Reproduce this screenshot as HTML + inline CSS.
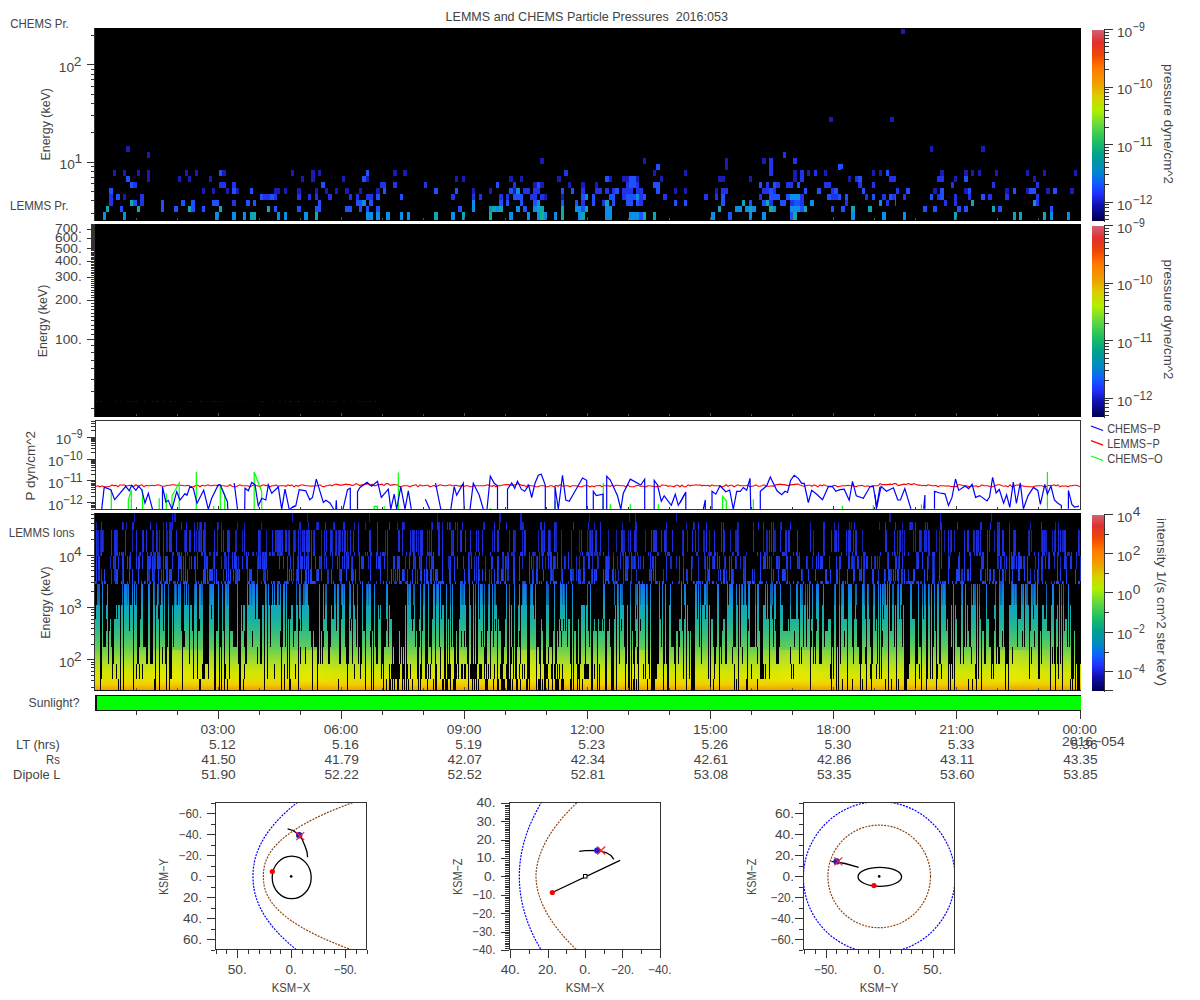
<!DOCTYPE html>
<html><head><meta charset="utf-8"><style>html,body{margin:0;padding:0;background:#fff;overflow:hidden}svg{display:block}</style></head>
<body><svg width="1200" height="1000" viewBox="0 0 1200 1000" font-family='"Liberation Sans", sans-serif'>
<rect x="0" y="0" width="1200" height="1000" fill="#fff" />
<text x="445.55" y="20.50" font-size="12.2" text-anchor="start" fill="#444" textLength="282.45" lengthAdjust="spacingAndGlyphs" >LEMMS and CHEMS Particle Pressures&#160; 2016:053</text>
<rect x="95" y="28" width="986" height="193" fill="#000" />
<line x1="94.5" y1="28" x2="94.5" y2="221" stroke="#333" stroke-width="1" shape-rendering="crispEdges"/>
<rect x="103" y="212" width="3" height="8" fill="#0a8ee6" shape-rendering="crispEdges"/>
<rect x="123" y="212" width="3" height="8" fill="#0a8ee6" shape-rendering="crispEdges"/>
<rect x="215" y="212" width="4" height="8" fill="#0a8ee6" shape-rendering="crispEdges"/>
<rect x="232" y="212" width="4" height="8" fill="#0a8ee6" shape-rendering="crispEdges"/>
<rect x="243" y="212" width="3" height="8" fill="#0a8ee6" shape-rendering="crispEdges"/>
<rect x="250" y="212" width="5" height="8" fill="#10a8b0" shape-rendering="crispEdges"/>
<rect x="106" y="206" width="3" height="6" fill="#10a8b0" shape-rendering="crispEdges"/>
<rect x="120" y="206" width="3" height="6" fill="#1e50ff" shape-rendering="crispEdges"/>
<rect x="137" y="206" width="3" height="6" fill="#10a8b0" shape-rendering="crispEdges"/>
<rect x="161" y="206" width="3" height="6" fill="#1e50ff" shape-rendering="crispEdges"/>
<rect x="174" y="206" width="4" height="6" fill="#1e50ff" shape-rendering="crispEdges"/>
<rect x="188" y="206" width="3" height="6" fill="#10a8b0" shape-rendering="crispEdges"/>
<rect x="191" y="206" width="4" height="6" fill="#1e50ff" shape-rendering="crispEdges"/>
<rect x="202" y="206" width="3" height="6" fill="#1e50ff" shape-rendering="crispEdges"/>
<rect x="219" y="206" width="3" height="6" fill="#10a8b0" shape-rendering="crispEdges"/>
<rect x="109" y="200" width="4" height="6" fill="#2232e6" shape-rendering="crispEdges"/>
<rect x="130" y="200" width="3" height="6" fill="#10a8b0" shape-rendering="crispEdges"/>
<rect x="133" y="200" width="4" height="6" fill="#1e50ff" shape-rendering="crispEdges"/>
<rect x="140" y="200" width="4" height="6" fill="#2232e6" shape-rendering="crispEdges"/>
<rect x="161" y="200" width="3" height="6" fill="#1e50ff" shape-rendering="crispEdges"/>
<rect x="181" y="200" width="4" height="6" fill="#1e50ff" shape-rendering="crispEdges"/>
<rect x="191" y="200" width="4" height="6" fill="#1e50ff" shape-rendering="crispEdges"/>
<rect x="212" y="200" width="7" height="6" fill="#1e50ff" shape-rendering="crispEdges"/>
<rect x="232" y="200" width="4" height="6" fill="#2232e6" shape-rendering="crispEdges"/>
<rect x="246" y="200" width="4" height="6" fill="#1e50ff" shape-rendering="crispEdges"/>
<rect x="253" y="200" width="2" height="6" fill="#1e50ff" shape-rendering="crispEdges"/>
<rect x="109" y="194" width="4" height="6" fill="#2232e6" shape-rendering="crispEdges"/>
<rect x="116" y="194" width="4" height="6" fill="#1e50ff" shape-rendering="crispEdges"/>
<rect x="123" y="194" width="3" height="6" fill="#1a1ab4" shape-rendering="crispEdges"/>
<rect x="140" y="194" width="4" height="6" fill="#2232e6" shape-rendering="crispEdges"/>
<rect x="109" y="188" width="4" height="6" fill="#1e50ff" shape-rendering="crispEdges"/>
<rect x="202" y="188" width="3" height="6" fill="#1a1ab4" shape-rendering="crispEdges"/>
<rect x="212" y="188" width="3" height="6" fill="#1a1ab4" shape-rendering="crispEdges"/>
<rect x="226" y="188" width="3" height="6" fill="#1a1ab4" shape-rendering="crispEdges"/>
<rect x="232" y="188" width="4" height="6" fill="#1e50ff" shape-rendering="crispEdges"/>
<rect x="236" y="188" width="3" height="6" fill="#1a1ab4" shape-rendering="crispEdges"/>
<rect x="250" y="188" width="3" height="6" fill="#1e50ff" shape-rendering="crispEdges"/>
<rect x="130" y="182" width="3" height="6" fill="#1e50ff" shape-rendering="crispEdges"/>
<rect x="133" y="182" width="4" height="6" fill="#2232e6" shape-rendering="crispEdges"/>
<rect x="219" y="182" width="7" height="6" fill="#2232e6" shape-rendering="crispEdges"/>
<rect x="232" y="182" width="4" height="6" fill="#2232e6" shape-rendering="crispEdges"/>
<rect x="126" y="176" width="4" height="6" fill="#1e50ff" shape-rendering="crispEdges"/>
<rect x="147" y="176" width="3" height="6" fill="#1a1ab4" shape-rendering="crispEdges"/>
<rect x="178" y="176" width="3" height="6" fill="#1a1ab4" shape-rendering="crispEdges"/>
<rect x="188" y="176" width="3" height="6" fill="#1a1ab4" shape-rendering="crispEdges"/>
<rect x="209" y="176" width="3" height="6" fill="#1a1ab4" shape-rendering="crispEdges"/>
<rect x="113" y="170" width="3" height="6" fill="#1a1ab4" shape-rendering="crispEdges"/>
<rect x="123" y="170" width="3" height="6" fill="#1a1ab4" shape-rendering="crispEdges"/>
<rect x="137" y="170" width="3" height="6" fill="#1a1ab4" shape-rendering="crispEdges"/>
<rect x="147" y="170" width="3" height="6" fill="#1a1ab4" shape-rendering="crispEdges"/>
<rect x="185" y="170" width="3" height="6" fill="#1a1ab4" shape-rendering="crispEdges"/>
<rect x="195" y="170" width="3" height="6" fill="#1a1ab4" shape-rendering="crispEdges"/>
<rect x="219" y="170" width="3" height="6" fill="#1e50ff" shape-rendering="crispEdges"/>
<rect x="222" y="170" width="4" height="6" fill="#1a1ab4" shape-rendering="crispEdges"/>
<rect x="147" y="152" width="3" height="6" fill="#1a1ab4" shape-rendering="crispEdges"/>
<rect x="126" y="146" width="4" height="6" fill="#1a1ab4" shape-rendering="crispEdges"/>
<rect x="255" y="212" width="1" height="8" fill="#10a8b0" shape-rendering="crispEdges"/>
<rect x="277" y="212" width="3" height="8" fill="#0a8ee6" shape-rendering="crispEdges"/>
<rect x="284" y="212" width="3" height="8" fill="#0a8ee6" shape-rendering="crispEdges"/>
<rect x="304" y="212" width="4" height="8" fill="#0a8ee6" shape-rendering="crispEdges"/>
<rect x="315" y="212" width="3" height="8" fill="#10a8b0" shape-rendering="crispEdges"/>
<rect x="366" y="212" width="7" height="8" fill="#0a8ee6" shape-rendering="crispEdges"/>
<rect x="376" y="212" width="4" height="8" fill="#0a8ee6" shape-rendering="crispEdges"/>
<rect x="386" y="212" width="4" height="8" fill="#0a8ee6" shape-rendering="crispEdges"/>
<rect x="400" y="212" width="3" height="8" fill="#0a8ee6" shape-rendering="crispEdges"/>
<rect x="407" y="212" width="3" height="8" fill="#0a8ee6" shape-rendering="crispEdges"/>
<rect x="267" y="206" width="3" height="6" fill="#10a8b0" shape-rendering="crispEdges"/>
<rect x="274" y="206" width="3" height="6" fill="#1e50ff" shape-rendering="crispEdges"/>
<rect x="297" y="206" width="4" height="6" fill="#1e50ff" shape-rendering="crispEdges"/>
<rect x="315" y="206" width="6" height="6" fill="#1e50ff" shape-rendering="crispEdges"/>
<rect x="345" y="206" width="7" height="6" fill="#1e50ff" shape-rendering="crispEdges"/>
<rect x="359" y="206" width="3" height="6" fill="#1e50ff" shape-rendering="crispEdges"/>
<rect x="366" y="206" width="3" height="6" fill="#1e50ff" shape-rendering="crispEdges"/>
<rect x="376" y="206" width="4" height="6" fill="#1e50ff" shape-rendering="crispEdges"/>
<rect x="255" y="200" width="1" height="6" fill="#1e50ff" shape-rendering="crispEdges"/>
<rect x="318" y="200" width="3" height="6" fill="#1e50ff" shape-rendering="crispEdges"/>
<rect x="356" y="200" width="6" height="6" fill="#1e50ff" shape-rendering="crispEdges"/>
<rect x="362" y="200" width="4" height="6" fill="#0a8ee6" shape-rendering="crispEdges"/>
<rect x="369" y="200" width="4" height="6" fill="#1e50ff" shape-rendering="crispEdges"/>
<rect x="260" y="194" width="3" height="6" fill="#1e50ff" shape-rendering="crispEdges"/>
<rect x="263" y="194" width="7" height="6" fill="#2232e6" shape-rendering="crispEdges"/>
<rect x="270" y="194" width="4" height="6" fill="#1e50ff" shape-rendering="crispEdges"/>
<rect x="274" y="194" width="3" height="6" fill="#2232e6" shape-rendering="crispEdges"/>
<rect x="297" y="194" width="4" height="6" fill="#2232e6" shape-rendering="crispEdges"/>
<rect x="308" y="194" width="3" height="6" fill="#2232e6" shape-rendering="crispEdges"/>
<rect x="315" y="194" width="3" height="6" fill="#2232e6" shape-rendering="crispEdges"/>
<rect x="328" y="194" width="4" height="6" fill="#2232e6" shape-rendering="crispEdges"/>
<rect x="349" y="194" width="3" height="6" fill="#2232e6" shape-rendering="crispEdges"/>
<rect x="356" y="194" width="3" height="6" fill="#2232e6" shape-rendering="crispEdges"/>
<rect x="366" y="194" width="7" height="6" fill="#2232e6" shape-rendering="crispEdges"/>
<rect x="376" y="194" width="4" height="6" fill="#1e50ff" shape-rendering="crispEdges"/>
<rect x="400" y="194" width="3" height="6" fill="#1e50ff" shape-rendering="crispEdges"/>
<rect x="274" y="188" width="6" height="6" fill="#1a1ab4" shape-rendering="crispEdges"/>
<rect x="284" y="188" width="3" height="6" fill="#1a1ab4" shape-rendering="crispEdges"/>
<rect x="297" y="188" width="4" height="6" fill="#1a1ab4" shape-rendering="crispEdges"/>
<rect x="315" y="188" width="3" height="6" fill="#1a1ab4" shape-rendering="crispEdges"/>
<rect x="325" y="188" width="3" height="6" fill="#1a1ab4" shape-rendering="crispEdges"/>
<rect x="335" y="188" width="3" height="6" fill="#1a1ab4" shape-rendering="crispEdges"/>
<rect x="345" y="188" width="4" height="6" fill="#1a1ab4" shape-rendering="crispEdges"/>
<rect x="359" y="188" width="3" height="6" fill="#1a1ab4" shape-rendering="crispEdges"/>
<rect x="376" y="188" width="4" height="6" fill="#1a1ab4" shape-rendering="crispEdges"/>
<rect x="383" y="188" width="3" height="6" fill="#1e50ff" shape-rendering="crispEdges"/>
<rect x="321" y="182" width="4" height="6" fill="#1e50ff" shape-rendering="crispEdges"/>
<rect x="380" y="182" width="6" height="6" fill="#2232e6" shape-rendering="crispEdges"/>
<rect x="393" y="182" width="4" height="6" fill="#2232e6" shape-rendering="crispEdges"/>
<rect x="301" y="176" width="3" height="6" fill="#1a1ab4" shape-rendering="crispEdges"/>
<rect x="311" y="176" width="4" height="6" fill="#1a1ab4" shape-rendering="crispEdges"/>
<rect x="342" y="176" width="3" height="6" fill="#1a1ab4" shape-rendering="crispEdges"/>
<rect x="362" y="176" width="4" height="6" fill="#1e50ff" shape-rendering="crispEdges"/>
<rect x="366" y="176" width="3" height="6" fill="#1a1ab4" shape-rendering="crispEdges"/>
<rect x="291" y="170" width="3" height="6" fill="#1a1ab4" shape-rendering="crispEdges"/>
<rect x="311" y="170" width="4" height="6" fill="#1a1ab4" shape-rendering="crispEdges"/>
<rect x="318" y="170" width="3" height="6" fill="#1a1ab4" shape-rendering="crispEdges"/>
<rect x="366" y="170" width="3" height="6" fill="#1e50ff" shape-rendering="crispEdges"/>
<rect x="393" y="170" width="4" height="6" fill="#1a1ab4" shape-rendering="crispEdges"/>
<rect x="403" y="170" width="4" height="6" fill="#1a1ab4" shape-rendering="crispEdges"/>
<rect x="434" y="212" width="4" height="8" fill="#10a8b0" shape-rendering="crispEdges"/>
<rect x="451" y="212" width="4" height="8" fill="#0a8ee6" shape-rendering="crispEdges"/>
<rect x="462" y="212" width="3" height="8" fill="#10a8b0" shape-rendering="crispEdges"/>
<rect x="489" y="212" width="3" height="8" fill="#14b094" shape-rendering="crispEdges"/>
<rect x="509" y="212" width="4" height="8" fill="#0a8ee6" shape-rendering="crispEdges"/>
<rect x="527" y="212" width="3" height="8" fill="#0a8ee6" shape-rendering="crispEdges"/>
<rect x="537" y="212" width="3" height="8" fill="#0a8ee6" shape-rendering="crispEdges"/>
<rect x="540" y="212" width="4" height="8" fill="#14b094" shape-rendering="crispEdges"/>
<rect x="544" y="212" width="3" height="8" fill="#0a8ee6" shape-rendering="crispEdges"/>
<rect x="554" y="212" width="3" height="8" fill="#0a8ee6" shape-rendering="crispEdges"/>
<rect x="561" y="212" width="3" height="8" fill="#10a8b0" shape-rendering="crispEdges"/>
<rect x="458" y="206" width="4" height="6" fill="#1e50ff" shape-rendering="crispEdges"/>
<rect x="472" y="206" width="3" height="6" fill="#0a8ee6" shape-rendering="crispEdges"/>
<rect x="489" y="206" width="3" height="6" fill="#0a8ee6" shape-rendering="crispEdges"/>
<rect x="492" y="206" width="4" height="6" fill="#10a8b0" shape-rendering="crispEdges"/>
<rect x="496" y="206" width="3" height="6" fill="#0a8ee6" shape-rendering="crispEdges"/>
<rect x="499" y="206" width="4" height="6" fill="#10a8b0" shape-rendering="crispEdges"/>
<rect x="516" y="206" width="4" height="6" fill="#0a8ee6" shape-rendering="crispEdges"/>
<rect x="523" y="206" width="4" height="6" fill="#1e50ff" shape-rendering="crispEdges"/>
<rect x="533" y="206" width="4" height="6" fill="#0a8ee6" shape-rendering="crispEdges"/>
<rect x="537" y="206" width="7" height="6" fill="#10a8b0" shape-rendering="crispEdges"/>
<rect x="561" y="206" width="3" height="6" fill="#10a8b0" shape-rendering="crispEdges"/>
<rect x="472" y="200" width="3" height="6" fill="#0a8ee6" shape-rendering="crispEdges"/>
<rect x="499" y="200" width="4" height="6" fill="#1e50ff" shape-rendering="crispEdges"/>
<rect x="506" y="200" width="3" height="6" fill="#1e50ff" shape-rendering="crispEdges"/>
<rect x="520" y="200" width="3" height="6" fill="#1e50ff" shape-rendering="crispEdges"/>
<rect x="533" y="200" width="4" height="6" fill="#1e50ff" shape-rendering="crispEdges"/>
<rect x="537" y="200" width="3" height="6" fill="#0a8ee6" shape-rendering="crispEdges"/>
<rect x="561" y="200" width="3" height="6" fill="#1e50ff" shape-rendering="crispEdges"/>
<rect x="451" y="194" width="4" height="6" fill="#2232e6" shape-rendering="crispEdges"/>
<rect x="472" y="194" width="3" height="6" fill="#2232e6" shape-rendering="crispEdges"/>
<rect x="479" y="194" width="3" height="6" fill="#2232e6" shape-rendering="crispEdges"/>
<rect x="499" y="194" width="4" height="6" fill="#2232e6" shape-rendering="crispEdges"/>
<rect x="506" y="194" width="3" height="6" fill="#2232e6" shape-rendering="crispEdges"/>
<rect x="513" y="194" width="10" height="6" fill="#1e50ff" shape-rendering="crispEdges"/>
<rect x="530" y="194" width="7" height="6" fill="#2232e6" shape-rendering="crispEdges"/>
<rect x="540" y="194" width="4" height="6" fill="#2232e6" shape-rendering="crispEdges"/>
<rect x="544" y="194" width="3" height="6" fill="#1a1ab4" shape-rendering="crispEdges"/>
<rect x="561" y="194" width="3" height="6" fill="#1a1ab4" shape-rendering="crispEdges"/>
<rect x="434" y="188" width="4" height="6" fill="#1e50ff" shape-rendering="crispEdges"/>
<rect x="455" y="188" width="3" height="6" fill="#1e50ff" shape-rendering="crispEdges"/>
<rect x="472" y="188" width="3" height="6" fill="#1a1ab4" shape-rendering="crispEdges"/>
<rect x="489" y="188" width="3" height="6" fill="#1a1ab4" shape-rendering="crispEdges"/>
<rect x="509" y="188" width="4" height="6" fill="#1e50ff" shape-rendering="crispEdges"/>
<rect x="513" y="188" width="3" height="6" fill="#1a1ab4" shape-rendering="crispEdges"/>
<rect x="516" y="188" width="4" height="6" fill="#0a8ee6" shape-rendering="crispEdges"/>
<rect x="523" y="188" width="7" height="6" fill="#2232e6" shape-rendering="crispEdges"/>
<rect x="533" y="188" width="7" height="6" fill="#2232e6" shape-rendering="crispEdges"/>
<rect x="561" y="188" width="3" height="6" fill="#1e50ff" shape-rendering="crispEdges"/>
<rect x="571" y="188" width="3" height="6" fill="#1e50ff" shape-rendering="crispEdges"/>
<rect x="424" y="182" width="3" height="6" fill="#2232e6" shape-rendering="crispEdges"/>
<rect x="496" y="182" width="3" height="6" fill="#1e50ff" shape-rendering="crispEdges"/>
<rect x="513" y="182" width="3" height="6" fill="#2232e6" shape-rendering="crispEdges"/>
<rect x="533" y="182" width="4" height="6" fill="#1a1ab4" shape-rendering="crispEdges"/>
<rect x="537" y="182" width="3" height="6" fill="#1e50ff" shape-rendering="crispEdges"/>
<rect x="540" y="182" width="4" height="6" fill="#1a1ab4" shape-rendering="crispEdges"/>
<rect x="568" y="182" width="3" height="6" fill="#1a1ab4" shape-rendering="crispEdges"/>
<rect x="455" y="176" width="3" height="6" fill="#1a1ab4" shape-rendering="crispEdges"/>
<rect x="462" y="176" width="3" height="6" fill="#1a1ab4" shape-rendering="crispEdges"/>
<rect x="509" y="176" width="4" height="6" fill="#1a1ab4" shape-rendering="crispEdges"/>
<rect x="520" y="176" width="3" height="6" fill="#1a1ab4" shape-rendering="crispEdges"/>
<rect x="557" y="176" width="4" height="6" fill="#1a1ab4" shape-rendering="crispEdges"/>
<rect x="564" y="170" width="4" height="6" fill="#2232e6" shape-rendering="crispEdges"/>
<rect x="540" y="158" width="4" height="6" fill="#1a1ab4" shape-rendering="crispEdges"/>
<rect x="578" y="212" width="3" height="8" fill="#0a8ee6" shape-rendering="crispEdges"/>
<rect x="581" y="212" width="4" height="8" fill="#10a8b0" shape-rendering="crispEdges"/>
<rect x="605" y="212" width="7" height="8" fill="#0a8ee6" shape-rendering="crispEdges"/>
<rect x="629" y="212" width="10" height="8" fill="#0a8ee6" shape-rendering="crispEdges"/>
<rect x="639" y="212" width="4" height="8" fill="#1e50ff" shape-rendering="crispEdges"/>
<rect x="643" y="212" width="3" height="8" fill="#14b094" shape-rendering="crispEdges"/>
<rect x="653" y="212" width="3" height="8" fill="#10a8b0" shape-rendering="crispEdges"/>
<rect x="711" y="212" width="4" height="8" fill="#0a8ee6" shape-rendering="crispEdges"/>
<rect x="728" y="212" width="4" height="8" fill="#1e50ff" shape-rendering="crispEdges"/>
<rect x="575" y="206" width="6" height="6" fill="#0a8ee6" shape-rendering="crispEdges"/>
<rect x="581" y="206" width="4" height="6" fill="#1e50ff" shape-rendering="crispEdges"/>
<rect x="585" y="206" width="3" height="6" fill="#10a8b0" shape-rendering="crispEdges"/>
<rect x="605" y="206" width="7" height="6" fill="#0a8ee6" shape-rendering="crispEdges"/>
<rect x="718" y="206" width="3" height="6" fill="#10a8b0" shape-rendering="crispEdges"/>
<rect x="575" y="200" width="3" height="6" fill="#1e50ff" shape-rendering="crispEdges"/>
<rect x="581" y="200" width="4" height="6" fill="#2232e6" shape-rendering="crispEdges"/>
<rect x="592" y="200" width="3" height="6" fill="#1e50ff" shape-rendering="crispEdges"/>
<rect x="602" y="200" width="3" height="6" fill="#2232e6" shape-rendering="crispEdges"/>
<rect x="605" y="200" width="4" height="6" fill="#10a8b0" shape-rendering="crispEdges"/>
<rect x="612" y="200" width="3" height="6" fill="#1e50ff" shape-rendering="crispEdges"/>
<rect x="626" y="200" width="7" height="6" fill="#1e50ff" shape-rendering="crispEdges"/>
<rect x="636" y="200" width="3" height="6" fill="#1e50ff" shape-rendering="crispEdges"/>
<rect x="639" y="200" width="4" height="6" fill="#2232e6" shape-rendering="crispEdges"/>
<rect x="674" y="200" width="3" height="6" fill="#1e50ff" shape-rendering="crispEdges"/>
<rect x="684" y="200" width="3" height="6" fill="#1e50ff" shape-rendering="crispEdges"/>
<rect x="721" y="200" width="4" height="6" fill="#1e50ff" shape-rendering="crispEdges"/>
<rect x="581" y="194" width="4" height="6" fill="#1e50ff" shape-rendering="crispEdges"/>
<rect x="585" y="194" width="3" height="6" fill="#0a8ee6" shape-rendering="crispEdges"/>
<rect x="592" y="194" width="3" height="6" fill="#1e50ff" shape-rendering="crispEdges"/>
<rect x="609" y="194" width="6" height="6" fill="#1e50ff" shape-rendering="crispEdges"/>
<rect x="622" y="194" width="4" height="6" fill="#2232e6" shape-rendering="crispEdges"/>
<rect x="626" y="194" width="10" height="6" fill="#1e50ff" shape-rendering="crispEdges"/>
<rect x="636" y="194" width="3" height="6" fill="#0a8ee6" shape-rendering="crispEdges"/>
<rect x="639" y="194" width="4" height="6" fill="#2232e6" shape-rendering="crispEdges"/>
<rect x="643" y="194" width="3" height="6" fill="#1e50ff" shape-rendering="crispEdges"/>
<rect x="663" y="194" width="4" height="6" fill="#2232e6" shape-rendering="crispEdges"/>
<rect x="704" y="194" width="4" height="6" fill="#2232e6" shape-rendering="crispEdges"/>
<rect x="715" y="194" width="3" height="6" fill="#2232e6" shape-rendering="crispEdges"/>
<rect x="721" y="194" width="4" height="6" fill="#1e50ff" shape-rendering="crispEdges"/>
<rect x="581" y="188" width="4" height="6" fill="#2232e6" shape-rendering="crispEdges"/>
<rect x="595" y="188" width="7" height="6" fill="#2232e6" shape-rendering="crispEdges"/>
<rect x="605" y="188" width="4" height="6" fill="#2232e6" shape-rendering="crispEdges"/>
<rect x="612" y="188" width="3" height="6" fill="#2232e6" shape-rendering="crispEdges"/>
<rect x="615" y="188" width="4" height="6" fill="#1e50ff" shape-rendering="crispEdges"/>
<rect x="622" y="188" width="11" height="6" fill="#2232e6" shape-rendering="crispEdges"/>
<rect x="636" y="188" width="7" height="6" fill="#2232e6" shape-rendering="crispEdges"/>
<rect x="656" y="188" width="4" height="6" fill="#1e50ff" shape-rendering="crispEdges"/>
<rect x="674" y="188" width="3" height="6" fill="#1a1ab4" shape-rendering="crispEdges"/>
<rect x="684" y="188" width="3" height="6" fill="#1a1ab4" shape-rendering="crispEdges"/>
<rect x="715" y="188" width="3" height="6" fill="#1a1ab4" shape-rendering="crispEdges"/>
<rect x="721" y="188" width="7" height="6" fill="#2232e6" shape-rendering="crispEdges"/>
<rect x="581" y="182" width="4" height="6" fill="#1a1ab4" shape-rendering="crispEdges"/>
<rect x="595" y="182" width="3" height="6" fill="#1a1ab4" shape-rendering="crispEdges"/>
<rect x="626" y="182" width="3" height="6" fill="#2232e6" shape-rendering="crispEdges"/>
<rect x="629" y="182" width="7" height="6" fill="#1e50ff" shape-rendering="crispEdges"/>
<rect x="636" y="182" width="3" height="6" fill="#2232e6" shape-rendering="crispEdges"/>
<rect x="653" y="182" width="7" height="6" fill="#1e50ff" shape-rendering="crispEdges"/>
<rect x="605" y="176" width="4" height="6" fill="#1e50ff" shape-rendering="crispEdges"/>
<rect x="609" y="176" width="3" height="6" fill="#1a1ab4" shape-rendering="crispEdges"/>
<rect x="622" y="176" width="7" height="6" fill="#1a1ab4" shape-rendering="crispEdges"/>
<rect x="629" y="176" width="7" height="6" fill="#1e50ff" shape-rendering="crispEdges"/>
<rect x="636" y="176" width="3" height="6" fill="#1a1ab4" shape-rendering="crispEdges"/>
<rect x="660" y="176" width="3" height="6" fill="#1a1ab4" shape-rendering="crispEdges"/>
<rect x="718" y="176" width="7" height="6" fill="#1a1ab4" shape-rendering="crispEdges"/>
<rect x="653" y="170" width="3" height="6" fill="#1a1ab4" shape-rendering="crispEdges"/>
<rect x="684" y="170" width="3" height="6" fill="#1a1ab4" shape-rendering="crispEdges"/>
<rect x="656" y="164" width="4" height="6" fill="#1e50ff" shape-rendering="crispEdges"/>
<rect x="725" y="164" width="3" height="6" fill="#1a1ab4" shape-rendering="crispEdges"/>
<rect x="643" y="158" width="3" height="6" fill="#1a1ab4" shape-rendering="crispEdges"/>
<rect x="725" y="158" width="3" height="6" fill="#1a1ab4" shape-rendering="crispEdges"/>
<rect x="749" y="212" width="3" height="8" fill="#0a8ee6" shape-rendering="crispEdges"/>
<rect x="762" y="212" width="4" height="8" fill="#0a8ee6" shape-rendering="crispEdges"/>
<rect x="790" y="212" width="3" height="8" fill="#1e50ff" shape-rendering="crispEdges"/>
<rect x="793" y="212" width="4" height="8" fill="#10a8b0" shape-rendering="crispEdges"/>
<rect x="851" y="212" width="4" height="8" fill="#0a8ee6" shape-rendering="crispEdges"/>
<rect x="882" y="212" width="4" height="8" fill="#0a8ee6" shape-rendering="crispEdges"/>
<rect x="735" y="206" width="7" height="6" fill="#0a8ee6" shape-rendering="crispEdges"/>
<rect x="745" y="206" width="4" height="6" fill="#0a8ee6" shape-rendering="crispEdges"/>
<rect x="749" y="206" width="3" height="6" fill="#10a8b0" shape-rendering="crispEdges"/>
<rect x="752" y="206" width="4" height="6" fill="#0a8ee6" shape-rendering="crispEdges"/>
<rect x="769" y="206" width="4" height="6" fill="#14b094" shape-rendering="crispEdges"/>
<rect x="773" y="206" width="3" height="6" fill="#0a8ee6" shape-rendering="crispEdges"/>
<rect x="790" y="206" width="7" height="6" fill="#0a8ee6" shape-rendering="crispEdges"/>
<rect x="797" y="206" width="3" height="6" fill="#0a8ee6" shape-rendering="crispEdges"/>
<rect x="800" y="206" width="4" height="6" fill="#1e50ff" shape-rendering="crispEdges"/>
<rect x="804" y="206" width="3" height="6" fill="#10a8b0" shape-rendering="crispEdges"/>
<rect x="831" y="206" width="3" height="6" fill="#1e50ff" shape-rendering="crispEdges"/>
<rect x="841" y="206" width="4" height="6" fill="#1e50ff" shape-rendering="crispEdges"/>
<rect x="851" y="206" width="4" height="6" fill="#10a8b0" shape-rendering="crispEdges"/>
<rect x="868" y="206" width="4" height="6" fill="#10a8b0" shape-rendering="crispEdges"/>
<rect x="742" y="200" width="3" height="6" fill="#10a8b0" shape-rendering="crispEdges"/>
<rect x="749" y="200" width="3" height="6" fill="#1e50ff" shape-rendering="crispEdges"/>
<rect x="762" y="200" width="4" height="6" fill="#1e50ff" shape-rendering="crispEdges"/>
<rect x="766" y="200" width="3" height="6" fill="#10a8b0" shape-rendering="crispEdges"/>
<rect x="769" y="200" width="4" height="6" fill="#2232e6" shape-rendering="crispEdges"/>
<rect x="780" y="200" width="6" height="6" fill="#1e50ff" shape-rendering="crispEdges"/>
<rect x="790" y="200" width="4" height="6" fill="#2232e6" shape-rendering="crispEdges"/>
<rect x="794" y="200" width="3" height="6" fill="#1e50ff" shape-rendering="crispEdges"/>
<rect x="797" y="200" width="3" height="6" fill="#1e50ff" shape-rendering="crispEdges"/>
<rect x="800" y="200" width="4" height="6" fill="#2232e6" shape-rendering="crispEdges"/>
<rect x="810" y="200" width="4" height="6" fill="#0a8ee6" shape-rendering="crispEdges"/>
<rect x="845" y="200" width="3" height="6" fill="#2232e6" shape-rendering="crispEdges"/>
<rect x="879" y="200" width="3" height="6" fill="#0a8ee6" shape-rendering="crispEdges"/>
<rect x="886" y="200" width="3" height="6" fill="#2232e6" shape-rendering="crispEdges"/>
<rect x="759" y="194" width="3" height="6" fill="#2232e6" shape-rendering="crispEdges"/>
<rect x="769" y="194" width="4" height="6" fill="#1e50ff" shape-rendering="crispEdges"/>
<rect x="773" y="194" width="7" height="6" fill="#1e50ff" shape-rendering="crispEdges"/>
<rect x="786" y="194" width="4" height="6" fill="#1e50ff" shape-rendering="crispEdges"/>
<rect x="790" y="194" width="7" height="6" fill="#0a8ee6" shape-rendering="crispEdges"/>
<rect x="797" y="194" width="3" height="6" fill="#0a8ee6" shape-rendering="crispEdges"/>
<rect x="800" y="194" width="4" height="6" fill="#2232e6" shape-rendering="crispEdges"/>
<rect x="827" y="194" width="4" height="6" fill="#1e50ff" shape-rendering="crispEdges"/>
<rect x="831" y="194" width="7" height="6" fill="#2232e6" shape-rendering="crispEdges"/>
<rect x="838" y="194" width="3" height="6" fill="#1e50ff" shape-rendering="crispEdges"/>
<rect x="845" y="194" width="3" height="6" fill="#1e50ff" shape-rendering="crispEdges"/>
<rect x="865" y="194" width="3" height="6" fill="#2232e6" shape-rendering="crispEdges"/>
<rect x="872" y="194" width="3" height="6" fill="#1e50ff" shape-rendering="crispEdges"/>
<rect x="882" y="194" width="4" height="6" fill="#2232e6" shape-rendering="crispEdges"/>
<rect x="889" y="194" width="3" height="6" fill="#1e50ff" shape-rendering="crispEdges"/>
<rect x="892" y="194" width="3" height="6" fill="#2232e6" shape-rendering="crispEdges"/>
<rect x="762" y="188" width="7" height="6" fill="#2232e6" shape-rendering="crispEdges"/>
<rect x="769" y="188" width="4" height="6" fill="#1e50ff" shape-rendering="crispEdges"/>
<rect x="773" y="188" width="3" height="6" fill="#2232e6" shape-rendering="crispEdges"/>
<rect x="804" y="188" width="3" height="6" fill="#1e50ff" shape-rendering="crispEdges"/>
<rect x="817" y="188" width="4" height="6" fill="#1e50ff" shape-rendering="crispEdges"/>
<rect x="831" y="188" width="3" height="6" fill="#2232e6" shape-rendering="crispEdges"/>
<rect x="834" y="188" width="4" height="6" fill="#1e50ff" shape-rendering="crispEdges"/>
<rect x="862" y="188" width="3" height="6" fill="#1e50ff" shape-rendering="crispEdges"/>
<rect x="759" y="182" width="3" height="6" fill="#1e50ff" shape-rendering="crispEdges"/>
<rect x="766" y="182" width="3" height="6" fill="#2232e6" shape-rendering="crispEdges"/>
<rect x="773" y="182" width="3" height="6" fill="#1e50ff" shape-rendering="crispEdges"/>
<rect x="776" y="182" width="4" height="6" fill="#2232e6" shape-rendering="crispEdges"/>
<rect x="786" y="182" width="4" height="6" fill="#2232e6" shape-rendering="crispEdges"/>
<rect x="790" y="182" width="3" height="6" fill="#2232e6" shape-rendering="crispEdges"/>
<rect x="797" y="182" width="3" height="6" fill="#1e50ff" shape-rendering="crispEdges"/>
<rect x="824" y="182" width="7" height="6" fill="#2232e6" shape-rendering="crispEdges"/>
<rect x="858" y="182" width="4" height="6" fill="#2232e6" shape-rendering="crispEdges"/>
<rect x="872" y="182" width="3" height="6" fill="#2232e6" shape-rendering="crispEdges"/>
<rect x="749" y="176" width="3" height="6" fill="#1a1ab4" shape-rendering="crispEdges"/>
<rect x="793" y="176" width="4" height="6" fill="#1a1ab4" shape-rendering="crispEdges"/>
<rect x="800" y="176" width="4" height="6" fill="#2232e6" shape-rendering="crispEdges"/>
<rect x="848" y="176" width="3" height="6" fill="#1a1ab4" shape-rendering="crispEdges"/>
<rect x="855" y="176" width="3" height="6" fill="#2232e6" shape-rendering="crispEdges"/>
<rect x="858" y="176" width="4" height="6" fill="#1e50ff" shape-rendering="crispEdges"/>
<rect x="889" y="176" width="6" height="6" fill="#2232e6" shape-rendering="crispEdges"/>
<rect x="769" y="170" width="4" height="6" fill="#2232e6" shape-rendering="crispEdges"/>
<rect x="793" y="170" width="4" height="6" fill="#1a1ab4" shape-rendering="crispEdges"/>
<rect x="800" y="170" width="4" height="6" fill="#2232e6" shape-rendering="crispEdges"/>
<rect x="807" y="170" width="3" height="6" fill="#1a1ab4" shape-rendering="crispEdges"/>
<rect x="814" y="170" width="3" height="6" fill="#2232e6" shape-rendering="crispEdges"/>
<rect x="824" y="170" width="3" height="6" fill="#1a1ab4" shape-rendering="crispEdges"/>
<rect x="872" y="170" width="3" height="6" fill="#1a1ab4" shape-rendering="crispEdges"/>
<rect x="879" y="170" width="3" height="6" fill="#1a1ab4" shape-rendering="crispEdges"/>
<rect x="886" y="170" width="3" height="6" fill="#1e50ff" shape-rendering="crispEdges"/>
<rect x="769" y="164" width="4" height="6" fill="#2232e6" shape-rendering="crispEdges"/>
<rect x="838" y="164" width="3" height="6" fill="#1e50ff" shape-rendering="crispEdges"/>
<rect x="762" y="158" width="4" height="6" fill="#1a1ab4" shape-rendering="crispEdges"/>
<rect x="769" y="158" width="4" height="6" fill="#2232e6" shape-rendering="crispEdges"/>
<rect x="793" y="158" width="4" height="6" fill="#2232e6" shape-rendering="crispEdges"/>
<rect x="783" y="152" width="3" height="6" fill="#2232e6" shape-rendering="crispEdges"/>
<rect x="903" y="212" width="3" height="8" fill="#0a8ee6" shape-rendering="crispEdges"/>
<rect x="954" y="212" width="3" height="8" fill="#10a8b0" shape-rendering="crispEdges"/>
<rect x="1013" y="212" width="3" height="8" fill="#10a8b0" shape-rendering="crispEdges"/>
<rect x="1019" y="212" width="3" height="8" fill="#10a8b0" shape-rendering="crispEdges"/>
<rect x="1043" y="212" width="3" height="8" fill="#10a8b0" shape-rendering="crispEdges"/>
<rect x="1050" y="212" width="3" height="8" fill="#0a8ee6" shape-rendering="crispEdges"/>
<rect x="1067" y="212" width="3" height="8" fill="#0a8ee6" shape-rendering="crispEdges"/>
<rect x="923" y="206" width="4" height="6" fill="#1e50ff" shape-rendering="crispEdges"/>
<rect x="933" y="206" width="4" height="6" fill="#1e50ff" shape-rendering="crispEdges"/>
<rect x="957" y="206" width="4" height="6" fill="#1e50ff" shape-rendering="crispEdges"/>
<rect x="964" y="206" width="4" height="6" fill="#1e50ff" shape-rendering="crispEdges"/>
<rect x="992" y="206" width="3" height="6" fill="#10a8b0" shape-rendering="crispEdges"/>
<rect x="998" y="206" width="4" height="6" fill="#1e50ff" shape-rendering="crispEdges"/>
<rect x="1050" y="206" width="3" height="6" fill="#1e50ff" shape-rendering="crispEdges"/>
<rect x="895" y="200" width="1" height="6" fill="#1e50ff" shape-rendering="crispEdges"/>
<rect x="944" y="200" width="3" height="6" fill="#2232e6" shape-rendering="crispEdges"/>
<rect x="954" y="200" width="3" height="6" fill="#2232e6" shape-rendering="crispEdges"/>
<rect x="971" y="200" width="3" height="6" fill="#10a8b0" shape-rendering="crispEdges"/>
<rect x="1033" y="200" width="3" height="6" fill="#0a8ee6" shape-rendering="crispEdges"/>
<rect x="1036" y="200" width="3" height="6" fill="#2232e6" shape-rendering="crispEdges"/>
<rect x="895" y="194" width="1" height="6" fill="#1e50ff" shape-rendering="crispEdges"/>
<rect x="903" y="194" width="3" height="6" fill="#2232e6" shape-rendering="crispEdges"/>
<rect x="930" y="194" width="3" height="6" fill="#1e50ff" shape-rendering="crispEdges"/>
<rect x="937" y="194" width="3" height="6" fill="#2232e6" shape-rendering="crispEdges"/>
<rect x="940" y="194" width="4" height="6" fill="#1e50ff" shape-rendering="crispEdges"/>
<rect x="954" y="194" width="3" height="6" fill="#2232e6" shape-rendering="crispEdges"/>
<rect x="968" y="194" width="3" height="6" fill="#2232e6" shape-rendering="crispEdges"/>
<rect x="981" y="194" width="4" height="6" fill="#1e50ff" shape-rendering="crispEdges"/>
<rect x="988" y="194" width="4" height="6" fill="#2232e6" shape-rendering="crispEdges"/>
<rect x="1005" y="194" width="4" height="6" fill="#2232e6" shape-rendering="crispEdges"/>
<rect x="1036" y="194" width="3" height="6" fill="#2232e6" shape-rendering="crispEdges"/>
<rect x="896" y="188" width="3" height="6" fill="#2232e6" shape-rendering="crispEdges"/>
<rect x="906" y="188" width="4" height="6" fill="#1e50ff" shape-rendering="crispEdges"/>
<rect x="933" y="188" width="4" height="6" fill="#1a1ab4" shape-rendering="crispEdges"/>
<rect x="940" y="188" width="4" height="6" fill="#1e50ff" shape-rendering="crispEdges"/>
<rect x="964" y="188" width="4" height="6" fill="#1a1ab4" shape-rendering="crispEdges"/>
<rect x="968" y="188" width="3" height="6" fill="#1e50ff" shape-rendering="crispEdges"/>
<rect x="1005" y="188" width="4" height="6" fill="#1a1ab4" shape-rendering="crispEdges"/>
<rect x="1013" y="188" width="3" height="6" fill="#1e50ff" shape-rendering="crispEdges"/>
<rect x="1026" y="188" width="3" height="6" fill="#1a1ab4" shape-rendering="crispEdges"/>
<rect x="1029" y="188" width="7" height="6" fill="#1e50ff" shape-rendering="crispEdges"/>
<rect x="1046" y="188" width="4" height="6" fill="#1a1ab4" shape-rendering="crispEdges"/>
<rect x="1053" y="188" width="4" height="6" fill="#1e50ff" shape-rendering="crispEdges"/>
<rect x="1070" y="188" width="4" height="6" fill="#1a1ab4" shape-rendering="crispEdges"/>
<rect x="951" y="182" width="3" height="6" fill="#2232e6" shape-rendering="crispEdges"/>
<rect x="992" y="182" width="3" height="6" fill="#2232e6" shape-rendering="crispEdges"/>
<rect x="1036" y="182" width="3" height="6" fill="#2232e6" shape-rendering="crispEdges"/>
<rect x="895" y="176" width="1" height="6" fill="#2232e6" shape-rendering="crispEdges"/>
<rect x="937" y="176" width="7" height="6" fill="#2232e6" shape-rendering="crispEdges"/>
<rect x="954" y="176" width="3" height="6" fill="#1a1ab4" shape-rendering="crispEdges"/>
<rect x="964" y="176" width="4" height="6" fill="#1e50ff" shape-rendering="crispEdges"/>
<rect x="1033" y="176" width="3" height="6" fill="#1a1ab4" shape-rendering="crispEdges"/>
<rect x="940" y="170" width="4" height="6" fill="#1a1ab4" shape-rendering="crispEdges"/>
<rect x="964" y="170" width="4" height="6" fill="#1a1ab4" shape-rendering="crispEdges"/>
<rect x="971" y="170" width="3" height="6" fill="#1a1ab4" shape-rendering="crispEdges"/>
<rect x="978" y="170" width="3" height="6" fill="#1a1ab4" shape-rendering="crispEdges"/>
<rect x="995" y="170" width="3" height="6" fill="#1a1ab4" shape-rendering="crispEdges"/>
<rect x="1026" y="170" width="3" height="6" fill="#1a1ab4" shape-rendering="crispEdges"/>
<rect x="1043" y="170" width="3" height="6" fill="#1a1ab4" shape-rendering="crispEdges"/>
<rect x="1074" y="170" width="3" height="6" fill="#1a1ab4" shape-rendering="crispEdges"/>
<rect x="930" y="146" width="3" height="6" fill="#1a1ab4" shape-rendering="crispEdges"/>
<rect x="981" y="146" width="4" height="6" fill="#1a1ab4" shape-rendering="crispEdges"/>
<rect x="901" y="29" width="4" height="5" fill="#1a1ab4" shape-rendering="crispEdges"/>
<rect x="829" y="117" width="4" height="5" fill="#1a1ab4" shape-rendering="crispEdges"/>
<rect x="890" y="117" width="4" height="5" fill="#1a1ab4" shape-rendering="crispEdges"/>
<rect x="839" y="164" width="4" height="5" fill="#1e50ff" shape-rendering="crispEdges"/>
<line x1="87" y1="162.5" x2="95" y2="162.5" stroke="#333" stroke-width="1" shape-rendering="crispEdges"/>
<line x1="87" y1="64.5" x2="95" y2="64.5" stroke="#333" stroke-width="1" shape-rendering="crispEdges"/>
<line x1="91" y1="213.5" x2="95" y2="213.5" stroke="#333" stroke-width="1" shape-rendering="crispEdges"/>
<line x1="91" y1="200.5" x2="95" y2="200.5" stroke="#333" stroke-width="1" shape-rendering="crispEdges"/>
<line x1="91" y1="191.5" x2="95" y2="191.5" stroke="#333" stroke-width="1" shape-rendering="crispEdges"/>
<line x1="91" y1="183.5" x2="95" y2="183.5" stroke="#333" stroke-width="1" shape-rendering="crispEdges"/>
<line x1="91" y1="177.5" x2="95" y2="177.5" stroke="#333" stroke-width="1" shape-rendering="crispEdges"/>
<line x1="91" y1="171.5" x2="95" y2="171.5" stroke="#333" stroke-width="1" shape-rendering="crispEdges"/>
<line x1="91" y1="166.5" x2="95" y2="166.5" stroke="#333" stroke-width="1" shape-rendering="crispEdges"/>
<line x1="91" y1="132.5" x2="95" y2="132.5" stroke="#333" stroke-width="1" shape-rendering="crispEdges"/>
<line x1="91" y1="115.5" x2="95" y2="115.5" stroke="#333" stroke-width="1" shape-rendering="crispEdges"/>
<line x1="91" y1="103.5" x2="95" y2="103.5" stroke="#333" stroke-width="1" shape-rendering="crispEdges"/>
<line x1="91" y1="94.5" x2="95" y2="94.5" stroke="#333" stroke-width="1" shape-rendering="crispEdges"/>
<line x1="91" y1="86.5" x2="95" y2="86.5" stroke="#333" stroke-width="1" shape-rendering="crispEdges"/>
<line x1="91" y1="79.5" x2="95" y2="79.5" stroke="#333" stroke-width="1" shape-rendering="crispEdges"/>
<line x1="91" y1="74.5" x2="95" y2="74.5" stroke="#333" stroke-width="1" shape-rendering="crispEdges"/>
<line x1="91" y1="69.5" x2="95" y2="69.5" stroke="#333" stroke-width="1" shape-rendering="crispEdges"/>
<line x1="91" y1="35.5" x2="95" y2="35.5" stroke="#333" stroke-width="1" shape-rendering="crispEdges"/>
<text x="73.76" y="65.60" font-size="12.2" text-anchor="start" fill="#444" textLength="7.64" lengthAdjust="spacingAndGlyphs" >2</text>
<text x="58.88" y="71.60" font-size="12.2" text-anchor="start" fill="#444" textLength="15.28" lengthAdjust="spacingAndGlyphs" >10</text>
<text x="74.46" y="162.90" font-size="12.2" text-anchor="start" fill="#444" textLength="7.64" lengthAdjust="spacingAndGlyphs" >1</text>
<text x="59.58" y="168.90" font-size="12.2" text-anchor="start" fill="#444" textLength="15.28" lengthAdjust="spacingAndGlyphs" >10</text>
<text x="10.20" y="27.80" font-size="12.2" text-anchor="start" fill="#444" textLength="58.60" lengthAdjust="spacingAndGlyphs" >CHEMS Pr.</text>
<text x="10.00" y="210.00" font-size="12.2" text-anchor="start" fill="#444" textLength="58.50" lengthAdjust="spacingAndGlyphs" >LEMMS Pr.</text>
<text x="0" y="0" font-size="12.2" text-anchor="start" fill="#444" textLength="72.50" lengthAdjust="spacingAndGlyphs" transform="translate(50.00,160.50) rotate(-90)" >Energy (keV)</text>
<rect x="1092" y="30" width="12" height="1" fill="#d46070" shape-rendering="crispEdges"/>
<rect x="1092" y="31" width="12" height="1" fill="#d55c6a" shape-rendering="crispEdges"/>
<rect x="1092" y="32" width="12" height="1" fill="#d65865" shape-rendering="crispEdges"/>
<rect x="1092" y="33" width="12" height="1" fill="#d7535f" shape-rendering="crispEdges"/>
<rect x="1092" y="34" width="12" height="1" fill="#d84f5a" shape-rendering="crispEdges"/>
<rect x="1092" y="35" width="12" height="1" fill="#d94b54" shape-rendering="crispEdges"/>
<rect x="1092" y="36" width="12" height="1" fill="#da474e" shape-rendering="crispEdges"/>
<rect x="1092" y="37" width="12" height="1" fill="#db4349" shape-rendering="crispEdges"/>
<rect x="1092" y="38" width="12" height="1" fill="#dc3e43" shape-rendering="crispEdges"/>
<rect x="1092" y="39" width="12" height="1" fill="#dd3a3d" shape-rendering="crispEdges"/>
<rect x="1092" y="40" width="12" height="1" fill="#df3638" shape-rendering="crispEdges"/>
<rect x="1092" y="41" width="12" height="1" fill="#e03232" shape-rendering="crispEdges"/>
<rect x="1092" y="42" width="12" height="1" fill="#e1312e" shape-rendering="crispEdges"/>
<rect x="1092" y="43" width="12" height="1" fill="#e2332a" shape-rendering="crispEdges"/>
<rect x="1092" y="44" width="12" height="1" fill="#e33527" shape-rendering="crispEdges"/>
<rect x="1092" y="45" width="12" height="1" fill="#e43623" shape-rendering="crispEdges"/>
<rect x="1092" y="46" width="12" height="1" fill="#e6381f" shape-rendering="crispEdges"/>
<rect x="1092" y="47" width="12" height="1" fill="#e73a1c" shape-rendering="crispEdges"/>
<rect x="1092" y="48" width="12" height="1" fill="#e83c18" shape-rendering="crispEdges"/>
<rect x="1092" y="49" width="12" height="1" fill="#e93e15" shape-rendering="crispEdges"/>
<rect x="1092" y="50" width="12" height="1" fill="#ea4011" shape-rendering="crispEdges"/>
<rect x="1092" y="51" width="12" height="1" fill="#ec410d" shape-rendering="crispEdges"/>
<rect x="1092" y="52" width="12" height="1" fill="#ed430a" shape-rendering="crispEdges"/>
<rect x="1092" y="53" width="12" height="1" fill="#ee4506" shape-rendering="crispEdges"/>
<rect x="1092" y="54" width="12" height="1" fill="#ef4703" shape-rendering="crispEdges"/>
<rect x="1092" y="55" width="12" height="1" fill="#f04900" shape-rendering="crispEdges"/>
<rect x="1092" y="56" width="12" height="1" fill="#f14d00" shape-rendering="crispEdges"/>
<rect x="1092" y="57" width="12" height="1" fill="#f35100" shape-rendering="crispEdges"/>
<rect x="1092" y="58" width="12" height="1" fill="#f45400" shape-rendering="crispEdges"/>
<rect x="1092" y="59" width="12" height="1" fill="#f55800" shape-rendering="crispEdges"/>
<rect x="1092" y="60" width="12" height="1" fill="#f65c00" shape-rendering="crispEdges"/>
<rect x="1092" y="61" width="12" height="1" fill="#f76000" shape-rendering="crispEdges"/>
<rect x="1092" y="62" width="12" height="1" fill="#f86300" shape-rendering="crispEdges"/>
<rect x="1092" y="63" width="12" height="1" fill="#f96700" shape-rendering="crispEdges"/>
<rect x="1092" y="64" width="12" height="1" fill="#fa6b00" shape-rendering="crispEdges"/>
<rect x="1092" y="65" width="12" height="1" fill="#fc6f00" shape-rendering="crispEdges"/>
<rect x="1092" y="66" width="12" height="1" fill="#fd7200" shape-rendering="crispEdges"/>
<rect x="1092" y="67" width="12" height="1" fill="#fe7600" shape-rendering="crispEdges"/>
<rect x="1092" y="68" width="12" height="1" fill="#ff7a00" shape-rendering="crispEdges"/>
<rect x="1092" y="69" width="12" height="1" fill="#fe7c00" shape-rendering="crispEdges"/>
<rect x="1092" y="70" width="12" height="1" fill="#fd7f00" shape-rendering="crispEdges"/>
<rect x="1092" y="71" width="12" height="1" fill="#fc8200" shape-rendering="crispEdges"/>
<rect x="1092" y="72" width="12" height="1" fill="#fb8400" shape-rendering="crispEdges"/>
<rect x="1092" y="73" width="12" height="1" fill="#fa8600" shape-rendering="crispEdges"/>
<rect x="1092" y="74" width="12" height="1" fill="#f98900" shape-rendering="crispEdges"/>
<rect x="1092" y="75" width="12" height="1" fill="#f88c00" shape-rendering="crispEdges"/>
<rect x="1092" y="76" width="12" height="1" fill="#f78e00" shape-rendering="crispEdges"/>
<rect x="1092" y="77" width="12" height="1" fill="#f69000" shape-rendering="crispEdges"/>
<rect x="1092" y="78" width="12" height="1" fill="#f59300" shape-rendering="crispEdges"/>
<rect x="1092" y="79" width="12" height="1" fill="#f49600" shape-rendering="crispEdges"/>
<rect x="1092" y="80" width="12" height="1" fill="#f39800" shape-rendering="crispEdges"/>
<rect x="1092" y="81" width="12" height="1" fill="#f29a00" shape-rendering="crispEdges"/>
<rect x="1092" y="82" width="12" height="1" fill="#f19d00" shape-rendering="crispEdges"/>
<rect x="1092" y="83" width="12" height="1" fill="#f09f00" shape-rendering="crispEdges"/>
<rect x="1092" y="84" width="12" height="1" fill="#efa300" shape-rendering="crispEdges"/>
<rect x="1092" y="85" width="12" height="1" fill="#eda600" shape-rendering="crispEdges"/>
<rect x="1092" y="86" width="12" height="1" fill="#ebaa00" shape-rendering="crispEdges"/>
<rect x="1092" y="87" width="12" height="1" fill="#e9ae00" shape-rendering="crispEdges"/>
<rect x="1092" y="88" width="12" height="1" fill="#e7b100" shape-rendering="crispEdges"/>
<rect x="1092" y="89" width="12" height="1" fill="#e6b500" shape-rendering="crispEdges"/>
<rect x="1092" y="90" width="12" height="1" fill="#e4b900" shape-rendering="crispEdges"/>
<rect x="1092" y="91" width="12" height="1" fill="#e2bc00" shape-rendering="crispEdges"/>
<rect x="1092" y="92" width="12" height="1" fill="#e0c000" shape-rendering="crispEdges"/>
<rect x="1092" y="93" width="12" height="1" fill="#dec300" shape-rendering="crispEdges"/>
<rect x="1092" y="94" width="12" height="1" fill="#ddc700" shape-rendering="crispEdges"/>
<rect x="1092" y="95" width="12" height="1" fill="#dbcb00" shape-rendering="crispEdges"/>
<rect x="1092" y="96" width="12" height="1" fill="#d9ce00" shape-rendering="crispEdges"/>
<rect x="1092" y="97" width="12" height="1" fill="#d6d100" shape-rendering="crispEdges"/>
<rect x="1092" y="98" width="12" height="1" fill="#d3d400" shape-rendering="crispEdges"/>
<rect x="1092" y="99" width="12" height="1" fill="#d0d600" shape-rendering="crispEdges"/>
<rect x="1092" y="100" width="12" height="1" fill="#cdd800" shape-rendering="crispEdges"/>
<rect x="1092" y="101" width="12" height="1" fill="#cadb00" shape-rendering="crispEdges"/>
<rect x="1092" y="102" width="12" height="1" fill="#c7dd00" shape-rendering="crispEdges"/>
<rect x="1092" y="103" width="12" height="1" fill="#c4e000" shape-rendering="crispEdges"/>
<rect x="1092" y="104" width="12" height="1" fill="#c1e200" shape-rendering="crispEdges"/>
<rect x="1092" y="105" width="12" height="1" fill="#bee400" shape-rendering="crispEdges"/>
<rect x="1092" y="106" width="12" height="1" fill="#bbe700" shape-rendering="crispEdges"/>
<rect x="1092" y="107" width="12" height="1" fill="#b8e900" shape-rendering="crispEdges"/>
<rect x="1092" y="108" width="12" height="1" fill="#b5ec00" shape-rendering="crispEdges"/>
<rect x="1092" y="109" width="12" height="1" fill="#b2ee00" shape-rendering="crispEdges"/>
<rect x="1092" y="110" width="12" height="1" fill="#aff001" shape-rendering="crispEdges"/>
<rect x="1092" y="111" width="12" height="1" fill="#aaee05" shape-rendering="crispEdges"/>
<rect x="1092" y="112" width="12" height="1" fill="#a4ed09" shape-rendering="crispEdges"/>
<rect x="1092" y="113" width="12" height="1" fill="#9feb0d" shape-rendering="crispEdges"/>
<rect x="1092" y="114" width="12" height="1" fill="#9ae912" shape-rendering="crispEdges"/>
<rect x="1092" y="115" width="12" height="1" fill="#95e816" shape-rendering="crispEdges"/>
<rect x="1092" y="116" width="12" height="1" fill="#8fe61a" shape-rendering="crispEdges"/>
<rect x="1092" y="117" width="12" height="1" fill="#8ae51e" shape-rendering="crispEdges"/>
<rect x="1092" y="118" width="12" height="1" fill="#85e323" shape-rendering="crispEdges"/>
<rect x="1092" y="119" width="12" height="1" fill="#80e127" shape-rendering="crispEdges"/>
<rect x="1092" y="120" width="12" height="1" fill="#7ae02b" shape-rendering="crispEdges"/>
<rect x="1092" y="121" width="12" height="1" fill="#75de2f" shape-rendering="crispEdges"/>
<rect x="1092" y="122" width="12" height="1" fill="#70dd33" shape-rendering="crispEdges"/>
<rect x="1092" y="123" width="12" height="1" fill="#6bdb38" shape-rendering="crispEdges"/>
<rect x="1092" y="124" width="12" height="1" fill="#65da3c" shape-rendering="crispEdges"/>
<rect x="1092" y="125" width="12" height="1" fill="#60d840" shape-rendering="crispEdges"/>
<rect x="1092" y="126" width="12" height="1" fill="#5cd642" shape-rendering="crispEdges"/>
<rect x="1092" y="127" width="12" height="1" fill="#58d544" shape-rendering="crispEdges"/>
<rect x="1092" y="128" width="12" height="1" fill="#53d346" shape-rendering="crispEdges"/>
<rect x="1092" y="129" width="12" height="1" fill="#4fd248" shape-rendering="crispEdges"/>
<rect x="1092" y="130" width="12" height="1" fill="#4bd04b" shape-rendering="crispEdges"/>
<rect x="1092" y="131" width="12" height="1" fill="#47cf4d" shape-rendering="crispEdges"/>
<rect x="1092" y="132" width="12" height="1" fill="#43cd4f" shape-rendering="crispEdges"/>
<rect x="1092" y="133" width="12" height="1" fill="#3ecb51" shape-rendering="crispEdges"/>
<rect x="1092" y="134" width="12" height="1" fill="#3aca53" shape-rendering="crispEdges"/>
<rect x="1092" y="135" width="12" height="1" fill="#36c855" shape-rendering="crispEdges"/>
<rect x="1092" y="136" width="12" height="1" fill="#32c757" shape-rendering="crispEdges"/>
<rect x="1092" y="137" width="12" height="1" fill="#2dc559" shape-rendering="crispEdges"/>
<rect x="1092" y="138" width="12" height="1" fill="#29c35b" shape-rendering="crispEdges"/>
<rect x="1092" y="139" width="12" height="1" fill="#25c25d" shape-rendering="crispEdges"/>
<rect x="1092" y="140" width="12" height="1" fill="#21c060" shape-rendering="crispEdges"/>
<rect x="1092" y="141" width="12" height="1" fill="#1ebe63" shape-rendering="crispEdges"/>
<rect x="1092" y="142" width="12" height="1" fill="#1cbc66" shape-rendering="crispEdges"/>
<rect x="1092" y="143" width="12" height="1" fill="#1aba69" shape-rendering="crispEdges"/>
<rect x="1092" y="144" width="12" height="1" fill="#18b86c" shape-rendering="crispEdges"/>
<rect x="1092" y="145" width="12" height="1" fill="#16b66f" shape-rendering="crispEdges"/>
<rect x="1092" y="146" width="12" height="1" fill="#14b472" shape-rendering="crispEdges"/>
<rect x="1092" y="147" width="12" height="1" fill="#12b275" shape-rendering="crispEdges"/>
<rect x="1092" y="148" width="12" height="1" fill="#10b079" shape-rendering="crispEdges"/>
<rect x="1092" y="149" width="12" height="1" fill="#0dad7c" shape-rendering="crispEdges"/>
<rect x="1092" y="150" width="12" height="1" fill="#0bab7f" shape-rendering="crispEdges"/>
<rect x="1092" y="151" width="12" height="1" fill="#09a982" shape-rendering="crispEdges"/>
<rect x="1092" y="152" width="12" height="1" fill="#07a785" shape-rendering="crispEdges"/>
<rect x="1092" y="153" width="12" height="1" fill="#05a588" shape-rendering="crispEdges"/>
<rect x="1092" y="154" width="12" height="1" fill="#03a38c" shape-rendering="crispEdges"/>
<rect x="1092" y="155" width="12" height="1" fill="#01a18f" shape-rendering="crispEdges"/>
<rect x="1092" y="156" width="12" height="1" fill="#009f92" shape-rendering="crispEdges"/>
<rect x="1092" y="157" width="12" height="1" fill="#009d96" shape-rendering="crispEdges"/>
<rect x="1092" y="158" width="12" height="1" fill="#009c9a" shape-rendering="crispEdges"/>
<rect x="1092" y="159" width="12" height="1" fill="#009a9d" shape-rendering="crispEdges"/>
<rect x="1092" y="160" width="12" height="1" fill="#0099a1" shape-rendering="crispEdges"/>
<rect x="1092" y="161" width="12" height="1" fill="#0097a5" shape-rendering="crispEdges"/>
<rect x="1092" y="162" width="12" height="1" fill="#0096a8" shape-rendering="crispEdges"/>
<rect x="1092" y="163" width="12" height="1" fill="#0094ac" shape-rendering="crispEdges"/>
<rect x="1092" y="164" width="12" height="1" fill="#0092b0" shape-rendering="crispEdges"/>
<rect x="1092" y="165" width="12" height="1" fill="#0091b3" shape-rendering="crispEdges"/>
<rect x="1092" y="166" width="12" height="1" fill="#008fb7" shape-rendering="crispEdges"/>
<rect x="1092" y="167" width="12" height="1" fill="#008ebb" shape-rendering="crispEdges"/>
<rect x="1092" y="168" width="12" height="1" fill="#008cbe" shape-rendering="crispEdges"/>
<rect x="1092" y="169" width="12" height="1" fill="#008bc2" shape-rendering="crispEdges"/>
<rect x="1092" y="170" width="12" height="1" fill="#0089c6" shape-rendering="crispEdges"/>
<rect x="1092" y="171" width="12" height="1" fill="#0187ca" shape-rendering="crispEdges"/>
<rect x="1092" y="172" width="12" height="1" fill="#0283cf" shape-rendering="crispEdges"/>
<rect x="1092" y="173" width="12" height="1" fill="#0380d4" shape-rendering="crispEdges"/>
<rect x="1092" y="174" width="12" height="1" fill="#057cd8" shape-rendering="crispEdges"/>
<rect x="1092" y="175" width="12" height="1" fill="#0679dd" shape-rendering="crispEdges"/>
<rect x="1092" y="176" width="12" height="1" fill="#0875e2" shape-rendering="crispEdges"/>
<rect x="1092" y="177" width="12" height="1" fill="#0972e7" shape-rendering="crispEdges"/>
<rect x="1092" y="178" width="12" height="1" fill="#0a6eec" shape-rendering="crispEdges"/>
<rect x="1092" y="179" width="12" height="1" fill="#0c6bf1" shape-rendering="crispEdges"/>
<rect x="1092" y="180" width="12" height="1" fill="#0d67f5" shape-rendering="crispEdges"/>
<rect x="1092" y="181" width="12" height="1" fill="#0f64fa" shape-rendering="crispEdges"/>
<rect x="1092" y="182" width="12" height="1" fill="#1060ff" shape-rendering="crispEdges"/>
<rect x="1092" y="183" width="12" height="1" fill="#115cff" shape-rendering="crispEdges"/>
<rect x="1092" y="184" width="12" height="1" fill="#1358ff" shape-rendering="crispEdges"/>
<rect x="1092" y="185" width="12" height="1" fill="#1453ff" shape-rendering="crispEdges"/>
<rect x="1092" y="186" width="12" height="1" fill="#164fff" shape-rendering="crispEdges"/>
<rect x="1092" y="187" width="12" height="1" fill="#174bff" shape-rendering="crispEdges"/>
<rect x="1092" y="188" width="12" height="1" fill="#1847ff" shape-rendering="crispEdges"/>
<rect x="1092" y="189" width="12" height="1" fill="#1a43ff" shape-rendering="crispEdges"/>
<rect x="1092" y="190" width="12" height="1" fill="#1b3eff" shape-rendering="crispEdges"/>
<rect x="1092" y="191" width="12" height="1" fill="#1d3aff" shape-rendering="crispEdges"/>
<rect x="1092" y="192" width="12" height="1" fill="#1e36ff" shape-rendering="crispEdges"/>
<rect x="1092" y="193" width="12" height="1" fill="#1f32ff" shape-rendering="crispEdges"/>
<rect x="1092" y="194" width="12" height="1" fill="#1f2efb" shape-rendering="crispEdges"/>
<rect x="1092" y="195" width="12" height="1" fill="#1e2cf4" shape-rendering="crispEdges"/>
<rect x="1092" y="196" width="12" height="1" fill="#1c29ed" shape-rendering="crispEdges"/>
<rect x="1092" y="197" width="12" height="1" fill="#1b26e6" shape-rendering="crispEdges"/>
<rect x="1092" y="198" width="12" height="1" fill="#1a23df" shape-rendering="crispEdges"/>
<rect x="1092" y="199" width="12" height="1" fill="#1820d8" shape-rendering="crispEdges"/>
<rect x="1092" y="200" width="12" height="1" fill="#171dd1" shape-rendering="crispEdges"/>
<rect x="1092" y="201" width="12" height="1" fill="#151bca" shape-rendering="crispEdges"/>
<rect x="1092" y="202" width="12" height="1" fill="#1418c3" shape-rendering="crispEdges"/>
<rect x="1092" y="203" width="12" height="1" fill="#1315bc" shape-rendering="crispEdges"/>
<rect x="1092" y="204" width="12" height="1" fill="#1112b6" shape-rendering="crispEdges"/>
<rect x="1092" y="205" width="12" height="1" fill="#1010af" shape-rendering="crispEdges"/>
<rect x="1092" y="206" width="12" height="1" fill="#0f0fa8" shape-rendering="crispEdges"/>
<rect x="1092" y="207" width="12" height="1" fill="#0e0ea2" shape-rendering="crispEdges"/>
<rect x="1092" y="208" width="12" height="1" fill="#0d0d9c" shape-rendering="crispEdges"/>
<rect x="1092" y="209" width="12" height="1" fill="#0c0c95" shape-rendering="crispEdges"/>
<rect x="1092" y="210" width="12" height="1" fill="#0b0b8f" shape-rendering="crispEdges"/>
<rect x="1092" y="211" width="12" height="1" fill="#090989" shape-rendering="crispEdges"/>
<rect x="1092" y="212" width="12" height="1" fill="#080883" shape-rendering="crispEdges"/>
<rect x="1092" y="213" width="12" height="1" fill="#07077c" shape-rendering="crispEdges"/>
<rect x="1092" y="214" width="12" height="1" fill="#060676" shape-rendering="crispEdges"/>
<rect x="1092" y="215" width="12" height="1" fill="#050570" shape-rendering="crispEdges"/>
<rect x="1092" y="216" width="12" height="1" fill="#040469" shape-rendering="crispEdges"/>
<rect x="1092" y="217" width="12" height="1" fill="#030363" shape-rendering="crispEdges"/>
<rect x="1092" y="218" width="12" height="1" fill="#02025d" shape-rendering="crispEdges"/>
<rect x="1092" y="219" width="12" height="1" fill="#010156" shape-rendering="crispEdges"/>
<rect x="1092" y="220" width="12" height="1" fill="#000050" shape-rendering="crispEdges"/>
<line x1="1104.5" y1="29" x2="1104.5" y2="222" stroke="#333" stroke-width="1" shape-rendering="crispEdges"/>
<line x1="1104" y1="29.5" x2="1113" y2="29.5" stroke="#333" stroke-width="1" shape-rendering="crispEdges"/>
<line x1="1104" y1="87.5" x2="1113" y2="87.5" stroke="#333" stroke-width="1" shape-rendering="crispEdges"/>
<line x1="1104" y1="144.5" x2="1113" y2="144.5" stroke="#333" stroke-width="1" shape-rendering="crispEdges"/>
<line x1="1104" y1="202.5" x2="1113" y2="202.5" stroke="#333" stroke-width="1" shape-rendering="crispEdges"/>
<line x1="1104" y1="219.5" x2="1109" y2="219.5" stroke="#333" stroke-width="1" shape-rendering="crispEdges"/>
<line x1="1104" y1="215.5" x2="1109" y2="215.5" stroke="#333" stroke-width="1" shape-rendering="crispEdges"/>
<line x1="1104" y1="211.5" x2="1109" y2="211.5" stroke="#333" stroke-width="1" shape-rendering="crispEdges"/>
<line x1="1104" y1="207.5" x2="1109" y2="207.5" stroke="#333" stroke-width="1" shape-rendering="crispEdges"/>
<line x1="1104" y1="204.5" x2="1109" y2="204.5" stroke="#333" stroke-width="1" shape-rendering="crispEdges"/>
<line x1="1104" y1="184.5" x2="1109" y2="184.5" stroke="#333" stroke-width="1" shape-rendering="crispEdges"/>
<line x1="1104" y1="174.5" x2="1109" y2="174.5" stroke="#333" stroke-width="1" shape-rendering="crispEdges"/>
<line x1="1104" y1="167.5" x2="1109" y2="167.5" stroke="#333" stroke-width="1" shape-rendering="crispEdges"/>
<line x1="1104" y1="162.5" x2="1109" y2="162.5" stroke="#333" stroke-width="1" shape-rendering="crispEdges"/>
<line x1="1104" y1="157.5" x2="1109" y2="157.5" stroke="#333" stroke-width="1" shape-rendering="crispEdges"/>
<line x1="1104" y1="153.5" x2="1109" y2="153.5" stroke="#333" stroke-width="1" shape-rendering="crispEdges"/>
<line x1="1104" y1="150.5" x2="1109" y2="150.5" stroke="#333" stroke-width="1" shape-rendering="crispEdges"/>
<line x1="1104" y1="147.5" x2="1109" y2="147.5" stroke="#333" stroke-width="1" shape-rendering="crispEdges"/>
<line x1="1104" y1="127.5" x2="1109" y2="127.5" stroke="#333" stroke-width="1" shape-rendering="crispEdges"/>
<line x1="1104" y1="117.5" x2="1109" y2="117.5" stroke="#333" stroke-width="1" shape-rendering="crispEdges"/>
<line x1="1104" y1="110.5" x2="1109" y2="110.5" stroke="#333" stroke-width="1" shape-rendering="crispEdges"/>
<line x1="1104" y1="104.5" x2="1109" y2="104.5" stroke="#333" stroke-width="1" shape-rendering="crispEdges"/>
<line x1="1104" y1="99.5" x2="1109" y2="99.5" stroke="#333" stroke-width="1" shape-rendering="crispEdges"/>
<line x1="1104" y1="96.5" x2="1109" y2="96.5" stroke="#333" stroke-width="1" shape-rendering="crispEdges"/>
<line x1="1104" y1="92.5" x2="1109" y2="92.5" stroke="#333" stroke-width="1" shape-rendering="crispEdges"/>
<line x1="1104" y1="89.5" x2="1109" y2="89.5" stroke="#333" stroke-width="1" shape-rendering="crispEdges"/>
<line x1="1104" y1="69.5" x2="1109" y2="69.5" stroke="#333" stroke-width="1" shape-rendering="crispEdges"/>
<line x1="1104" y1="59.5" x2="1109" y2="59.5" stroke="#333" stroke-width="1" shape-rendering="crispEdges"/>
<line x1="1104" y1="52.5" x2="1109" y2="52.5" stroke="#333" stroke-width="1" shape-rendering="crispEdges"/>
<line x1="1104" y1="46.5" x2="1109" y2="46.5" stroke="#333" stroke-width="1" shape-rendering="crispEdges"/>
<line x1="1104" y1="42.5" x2="1109" y2="42.5" stroke="#333" stroke-width="1" shape-rendering="crispEdges"/>
<line x1="1104" y1="38.5" x2="1109" y2="38.5" stroke="#333" stroke-width="1" shape-rendering="crispEdges"/>
<line x1="1104" y1="35.5" x2="1109" y2="35.5" stroke="#333" stroke-width="1" shape-rendering="crispEdges"/>
<line x1="1104" y1="32.5" x2="1109" y2="32.5" stroke="#333" stroke-width="1" shape-rendering="crispEdges"/>
<text x="1116.90" y="36.80" font-size="12.2" text-anchor="start" fill="#444" textLength="15.28" lengthAdjust="spacingAndGlyphs" >10</text>
<text x="1132.78" y="30.80" font-size="12.2" text-anchor="start" fill="#444" textLength="11.97" lengthAdjust="spacingAndGlyphs" >−9</text>
<text x="1116.90" y="94.40" font-size="12.2" text-anchor="start" fill="#444" textLength="15.28" lengthAdjust="spacingAndGlyphs" >10</text>
<text x="1132.78" y="88.40" font-size="12.2" text-anchor="start" fill="#444" textLength="19.61" lengthAdjust="spacingAndGlyphs" >−10</text>
<text x="1116.90" y="152.00" font-size="12.2" text-anchor="start" fill="#444" textLength="15.28" lengthAdjust="spacingAndGlyphs" >10</text>
<text x="1132.78" y="146.00" font-size="12.2" text-anchor="start" fill="#444" textLength="19.61" lengthAdjust="spacingAndGlyphs" >−11</text>
<text x="1116.90" y="209.60" font-size="12.2" text-anchor="start" fill="#444" textLength="15.28" lengthAdjust="spacingAndGlyphs" >10</text>
<text x="1132.78" y="203.60" font-size="12.2" text-anchor="start" fill="#444" textLength="19.61" lengthAdjust="spacingAndGlyphs" >−12</text>
<text x="0" y="0" font-size="12.2" text-anchor="start" fill="#444" textLength="120.00" lengthAdjust="spacingAndGlyphs" transform="translate(1164.00,64.00) rotate(90)" >pressure dyne/cm^2</text>
<rect x="95" y="224" width="986" height="193" fill="#000" />
<line x1="94.5" y1="224" x2="94.5" y2="417" stroke="#333" stroke-width="1" shape-rendering="crispEdges"/>
<rect x="96" y="401" width="2" height="1" fill="#0000a8" shape-rendering="crispEdges"/>
<rect x="100" y="401" width="2" height="1" fill="#0000a8" shape-rendering="crispEdges"/>
<rect x="109" y="401" width="1" height="1" fill="#0000a8" shape-rendering="crispEdges"/>
<rect x="115" y="401" width="2" height="1" fill="#0000a8" shape-rendering="crispEdges"/>
<rect x="120" y="401" width="1" height="1" fill="#0000a8" shape-rendering="crispEdges"/>
<rect x="127" y="401" width="1" height="1" fill="#0000a8" shape-rendering="crispEdges"/>
<rect x="129" y="401" width="2" height="1" fill="#0000a8" shape-rendering="crispEdges"/>
<rect x="132" y="401" width="1" height="1" fill="#0000a8" shape-rendering="crispEdges"/>
<rect x="135" y="401" width="3" height="1" fill="#0000a8" shape-rendering="crispEdges"/>
<rect x="144" y="401" width="2" height="1" fill="#0000a8" shape-rendering="crispEdges"/>
<rect x="152" y="401" width="2" height="1" fill="#0000a8" shape-rendering="crispEdges"/>
<rect x="156" y="401" width="3" height="1" fill="#0000a8" shape-rendering="crispEdges"/>
<rect x="164" y="401" width="2" height="1" fill="#0000a8" shape-rendering="crispEdges"/>
<rect x="170" y="401" width="2" height="1" fill="#0000a8" shape-rendering="crispEdges"/>
<rect x="175" y="401" width="1" height="1" fill="#0000a8" shape-rendering="crispEdges"/>
<rect x="189" y="401" width="3" height="1" fill="#0000a8" shape-rendering="crispEdges"/>
<rect x="198" y="401" width="1" height="1" fill="#0000a8" shape-rendering="crispEdges"/>
<rect x="200" y="401" width="3" height="1" fill="#0000a8" shape-rendering="crispEdges"/>
<rect x="206" y="401" width="1" height="1" fill="#0000a8" shape-rendering="crispEdges"/>
<rect x="211" y="401" width="2" height="1" fill="#0000a8" shape-rendering="crispEdges"/>
<rect x="214" y="401" width="2" height="1" fill="#0000a8" shape-rendering="crispEdges"/>
<rect x="217" y="401" width="2" height="1" fill="#0000a8" shape-rendering="crispEdges"/>
<rect x="221" y="401" width="1" height="1" fill="#0000a8" shape-rendering="crispEdges"/>
<rect x="226" y="401" width="1" height="1" fill="#0000a8" shape-rendering="crispEdges"/>
<rect x="229" y="401" width="1" height="1" fill="#0000a8" shape-rendering="crispEdges"/>
<rect x="234" y="401" width="1" height="1" fill="#0000a8" shape-rendering="crispEdges"/>
<rect x="238" y="401" width="1" height="1" fill="#0000a8" shape-rendering="crispEdges"/>
<rect x="243" y="401" width="1" height="1" fill="#0000a8" shape-rendering="crispEdges"/>
<rect x="247" y="401" width="2" height="1" fill="#0000a8" shape-rendering="crispEdges"/>
<rect x="261" y="401" width="3" height="1" fill="#0000a8" shape-rendering="crispEdges"/>
<rect x="273" y="401" width="1" height="1" fill="#0000a8" shape-rendering="crispEdges"/>
<rect x="279" y="401" width="2" height="1" fill="#0000a8" shape-rendering="crispEdges"/>
<rect x="285" y="401" width="1" height="1" fill="#0000a8" shape-rendering="crispEdges"/>
<rect x="289" y="401" width="3" height="1" fill="#0000a8" shape-rendering="crispEdges"/>
<rect x="297" y="401" width="3" height="1" fill="#0000a8" shape-rendering="crispEdges"/>
<rect x="305" y="401" width="1" height="1" fill="#0000a8" shape-rendering="crispEdges"/>
<rect x="308" y="401" width="1" height="1" fill="#0000a8" shape-rendering="crispEdges"/>
<rect x="313" y="401" width="2" height="1" fill="#0000a8" shape-rendering="crispEdges"/>
<rect x="319" y="401" width="1" height="1" fill="#0000a8" shape-rendering="crispEdges"/>
<rect x="322" y="401" width="1" height="1" fill="#0000a8" shape-rendering="crispEdges"/>
<rect x="327" y="401" width="1" height="1" fill="#0000a8" shape-rendering="crispEdges"/>
<rect x="332" y="401" width="1" height="1" fill="#0000a8" shape-rendering="crispEdges"/>
<rect x="334" y="401" width="3" height="1" fill="#0000a8" shape-rendering="crispEdges"/>
<rect x="342" y="401" width="1" height="1" fill="#0000a8" shape-rendering="crispEdges"/>
<rect x="344" y="401" width="1" height="1" fill="#0000a8" shape-rendering="crispEdges"/>
<rect x="351" y="401" width="1" height="1" fill="#0000a8" shape-rendering="crispEdges"/>
<rect x="357" y="401" width="2" height="1" fill="#0000a8" shape-rendering="crispEdges"/>
<rect x="361" y="401" width="1" height="1" fill="#0000a8" shape-rendering="crispEdges"/>
<rect x="365" y="401" width="2" height="1" fill="#0000a8" shape-rendering="crispEdges"/>
<rect x="369" y="401" width="2" height="1" fill="#0000a8" shape-rendering="crispEdges"/>
<rect x="374" y="401" width="2" height="1" fill="#0000a8" shape-rendering="crispEdges"/>
<line x1="87" y1="339.5" x2="95" y2="339.5" stroke="#333" stroke-width="1" shape-rendering="crispEdges"/>
<line x1="87" y1="300.5" x2="95" y2="300.5" stroke="#333" stroke-width="1" shape-rendering="crispEdges"/>
<line x1="87" y1="277.5" x2="95" y2="277.5" stroke="#333" stroke-width="1" shape-rendering="crispEdges"/>
<line x1="87" y1="261.5" x2="95" y2="261.5" stroke="#333" stroke-width="1" shape-rendering="crispEdges"/>
<line x1="87" y1="248.5" x2="95" y2="248.5" stroke="#333" stroke-width="1" shape-rendering="crispEdges"/>
<line x1="87" y1="238.5" x2="95" y2="238.5" stroke="#333" stroke-width="1" shape-rendering="crispEdges"/>
<line x1="87" y1="229.5" x2="95" y2="229.5" stroke="#333" stroke-width="1" shape-rendering="crispEdges"/>
<line x1="91" y1="408.5" x2="95" y2="408.5" stroke="#333" stroke-width="1" shape-rendering="crispEdges"/>
<line x1="91" y1="391.5" x2="95" y2="391.5" stroke="#333" stroke-width="1" shape-rendering="crispEdges"/>
<line x1="91" y1="379.5" x2="95" y2="379.5" stroke="#333" stroke-width="1" shape-rendering="crispEdges"/>
<line x1="91" y1="368.5" x2="95" y2="368.5" stroke="#333" stroke-width="1" shape-rendering="crispEdges"/>
<line x1="91" y1="360.5" x2="95" y2="360.5" stroke="#333" stroke-width="1" shape-rendering="crispEdges"/>
<line x1="91" y1="352.5" x2="95" y2="352.5" stroke="#333" stroke-width="1" shape-rendering="crispEdges"/>
<line x1="91" y1="345.5" x2="95" y2="345.5" stroke="#333" stroke-width="1" shape-rendering="crispEdges"/>
<line x1="91" y1="334.5" x2="95" y2="334.5" stroke="#333" stroke-width="1" shape-rendering="crispEdges"/>
<line x1="91" y1="329.5" x2="95" y2="329.5" stroke="#333" stroke-width="1" shape-rendering="crispEdges"/>
<line x1="91" y1="325.5" x2="95" y2="325.5" stroke="#333" stroke-width="1" shape-rendering="crispEdges"/>
<line x1="91" y1="320.5" x2="95" y2="320.5" stroke="#333" stroke-width="1" shape-rendering="crispEdges"/>
<line x1="91" y1="316.5" x2="95" y2="316.5" stroke="#333" stroke-width="1" shape-rendering="crispEdges"/>
<line x1="91" y1="313.5" x2="95" y2="313.5" stroke="#333" stroke-width="1" shape-rendering="crispEdges"/>
<line x1="91" y1="309.5" x2="95" y2="309.5" stroke="#333" stroke-width="1" shape-rendering="crispEdges"/>
<line x1="91" y1="306.5" x2="95" y2="306.5" stroke="#333" stroke-width="1" shape-rendering="crispEdges"/>
<line x1="91" y1="303.5" x2="95" y2="303.5" stroke="#333" stroke-width="1" shape-rendering="crispEdges"/>
<line x1="91" y1="297.5" x2="95" y2="297.5" stroke="#333" stroke-width="1" shape-rendering="crispEdges"/>
<line x1="91" y1="295.5" x2="95" y2="295.5" stroke="#333" stroke-width="1" shape-rendering="crispEdges"/>
<line x1="91" y1="292.5" x2="95" y2="292.5" stroke="#333" stroke-width="1" shape-rendering="crispEdges"/>
<line x1="91" y1="290.5" x2="95" y2="290.5" stroke="#333" stroke-width="1" shape-rendering="crispEdges"/>
<line x1="91" y1="287.5" x2="95" y2="287.5" stroke="#333" stroke-width="1" shape-rendering="crispEdges"/>
<line x1="91" y1="285.5" x2="95" y2="285.5" stroke="#333" stroke-width="1" shape-rendering="crispEdges"/>
<line x1="91" y1="283.5" x2="95" y2="283.5" stroke="#333" stroke-width="1" shape-rendering="crispEdges"/>
<line x1="91" y1="281.5" x2="95" y2="281.5" stroke="#333" stroke-width="1" shape-rendering="crispEdges"/>
<line x1="91" y1="279.5" x2="95" y2="279.5" stroke="#333" stroke-width="1" shape-rendering="crispEdges"/>
<line x1="91" y1="275.5" x2="95" y2="275.5" stroke="#333" stroke-width="1" shape-rendering="crispEdges"/>
<line x1="91" y1="273.5" x2="95" y2="273.5" stroke="#333" stroke-width="1" shape-rendering="crispEdges"/>
<line x1="91" y1="272.5" x2="95" y2="272.5" stroke="#333" stroke-width="1" shape-rendering="crispEdges"/>
<line x1="91" y1="270.5" x2="95" y2="270.5" stroke="#333" stroke-width="1" shape-rendering="crispEdges"/>
<line x1="91" y1="268.5" x2="95" y2="268.5" stroke="#333" stroke-width="1" shape-rendering="crispEdges"/>
<line x1="91" y1="267.5" x2="95" y2="267.5" stroke="#333" stroke-width="1" shape-rendering="crispEdges"/>
<line x1="91" y1="265.5" x2="95" y2="265.5" stroke="#333" stroke-width="1" shape-rendering="crispEdges"/>
<line x1="91" y1="264.5" x2="95" y2="264.5" stroke="#333" stroke-width="1" shape-rendering="crispEdges"/>
<line x1="91" y1="262.5" x2="95" y2="262.5" stroke="#333" stroke-width="1" shape-rendering="crispEdges"/>
<line x1="91" y1="259.5" x2="95" y2="259.5" stroke="#333" stroke-width="1" shape-rendering="crispEdges"/>
<line x1="91" y1="258.5" x2="95" y2="258.5" stroke="#333" stroke-width="1" shape-rendering="crispEdges"/>
<line x1="91" y1="257.5" x2="95" y2="257.5" stroke="#333" stroke-width="1" shape-rendering="crispEdges"/>
<line x1="91" y1="255.5" x2="95" y2="255.5" stroke="#333" stroke-width="1" shape-rendering="crispEdges"/>
<line x1="91" y1="254.5" x2="95" y2="254.5" stroke="#333" stroke-width="1" shape-rendering="crispEdges"/>
<line x1="91" y1="253.5" x2="95" y2="253.5" stroke="#333" stroke-width="1" shape-rendering="crispEdges"/>
<line x1="91" y1="252.5" x2="95" y2="252.5" stroke="#333" stroke-width="1" shape-rendering="crispEdges"/>
<line x1="91" y1="250.5" x2="95" y2="250.5" stroke="#333" stroke-width="1" shape-rendering="crispEdges"/>
<line x1="91" y1="249.5" x2="95" y2="249.5" stroke="#333" stroke-width="1" shape-rendering="crispEdges"/>
<line x1="91" y1="247.5" x2="95" y2="247.5" stroke="#333" stroke-width="1" shape-rendering="crispEdges"/>
<line x1="91" y1="246.5" x2="95" y2="246.5" stroke="#333" stroke-width="1" shape-rendering="crispEdges"/>
<line x1="91" y1="245.5" x2="95" y2="245.5" stroke="#333" stroke-width="1" shape-rendering="crispEdges"/>
<line x1="91" y1="244.5" x2="95" y2="244.5" stroke="#333" stroke-width="1" shape-rendering="crispEdges"/>
<line x1="91" y1="243.5" x2="95" y2="243.5" stroke="#333" stroke-width="1" shape-rendering="crispEdges"/>
<line x1="91" y1="242.5" x2="95" y2="242.5" stroke="#333" stroke-width="1" shape-rendering="crispEdges"/>
<line x1="91" y1="241.5" x2="95" y2="241.5" stroke="#333" stroke-width="1" shape-rendering="crispEdges"/>
<line x1="91" y1="240.5" x2="95" y2="240.5" stroke="#333" stroke-width="1" shape-rendering="crispEdges"/>
<line x1="91" y1="239.5" x2="95" y2="239.5" stroke="#333" stroke-width="1" shape-rendering="crispEdges"/>
<line x1="91" y1="237.5" x2="95" y2="237.5" stroke="#333" stroke-width="1" shape-rendering="crispEdges"/>
<line x1="91" y1="236.5" x2="95" y2="236.5" stroke="#333" stroke-width="1" shape-rendering="crispEdges"/>
<line x1="91" y1="235.5" x2="95" y2="235.5" stroke="#333" stroke-width="1" shape-rendering="crispEdges"/>
<line x1="91" y1="234.5" x2="95" y2="234.5" stroke="#333" stroke-width="1" shape-rendering="crispEdges"/>
<line x1="91" y1="233.5" x2="95" y2="233.5" stroke="#333" stroke-width="1" shape-rendering="crispEdges"/>
<line x1="91" y1="232.5" x2="95" y2="232.5" stroke="#333" stroke-width="1" shape-rendering="crispEdges"/>
<line x1="91" y1="232.5" x2="95" y2="232.5" stroke="#333" stroke-width="1" shape-rendering="crispEdges"/>
<line x1="91" y1="231.5" x2="95" y2="231.5" stroke="#333" stroke-width="1" shape-rendering="crispEdges"/>
<line x1="91" y1="230.5" x2="95" y2="230.5" stroke="#333" stroke-width="1" shape-rendering="crispEdges"/>
<line x1="91" y1="228.5" x2="95" y2="228.5" stroke="#333" stroke-width="1" shape-rendering="crispEdges"/>
<line x1="91" y1="227.5" x2="95" y2="227.5" stroke="#333" stroke-width="1" shape-rendering="crispEdges"/>
<line x1="91" y1="227.5" x2="95" y2="227.5" stroke="#333" stroke-width="1" shape-rendering="crispEdges"/>
<line x1="91" y1="226.5" x2="95" y2="226.5" stroke="#333" stroke-width="1" shape-rendering="crispEdges"/>
<line x1="91" y1="225.5" x2="95" y2="225.5" stroke="#333" stroke-width="1" shape-rendering="crispEdges"/>
<line x1="91" y1="224.5" x2="95" y2="224.5" stroke="#333" stroke-width="1" shape-rendering="crispEdges"/>
<text x="81.80" y="343.80" font-size="12.2" text-anchor="end" fill="#444" textLength="26.73" lengthAdjust="spacingAndGlyphs" >100.</text>
<text x="81.80" y="304.49" font-size="12.2" text-anchor="end" fill="#444" textLength="26.73" lengthAdjust="spacingAndGlyphs" >200.</text>
<text x="81.80" y="281.49" font-size="12.2" text-anchor="end" fill="#444" textLength="26.73" lengthAdjust="spacingAndGlyphs" >300.</text>
<text x="81.80" y="265.17" font-size="12.2" text-anchor="end" fill="#444" textLength="26.73" lengthAdjust="spacingAndGlyphs" >400.</text>
<text x="81.80" y="252.51" font-size="12.2" text-anchor="end" fill="#444" textLength="26.73" lengthAdjust="spacingAndGlyphs" >500.</text>
<text x="81.80" y="242.17" font-size="12.2" text-anchor="end" fill="#444" textLength="26.73" lengthAdjust="spacingAndGlyphs" >600.</text>
<text x="81.80" y="233.43" font-size="12.2" text-anchor="end" fill="#444" textLength="26.73" lengthAdjust="spacingAndGlyphs" >700.</text>
<text x="0" y="0" font-size="12.2" text-anchor="start" fill="#444" textLength="72.50" lengthAdjust="spacingAndGlyphs" transform="translate(46.50,357.20) rotate(-90)" >Energy (keV)</text>
<rect x="1092" y="226" width="12" height="1" fill="#d46070" shape-rendering="crispEdges"/>
<rect x="1092" y="227" width="12" height="1" fill="#d55c6a" shape-rendering="crispEdges"/>
<rect x="1092" y="228" width="12" height="1" fill="#d65865" shape-rendering="crispEdges"/>
<rect x="1092" y="229" width="12" height="1" fill="#d7535f" shape-rendering="crispEdges"/>
<rect x="1092" y="230" width="12" height="1" fill="#d84f5a" shape-rendering="crispEdges"/>
<rect x="1092" y="231" width="12" height="1" fill="#d94b54" shape-rendering="crispEdges"/>
<rect x="1092" y="232" width="12" height="1" fill="#da474e" shape-rendering="crispEdges"/>
<rect x="1092" y="233" width="12" height="1" fill="#db4349" shape-rendering="crispEdges"/>
<rect x="1092" y="234" width="12" height="1" fill="#dc3e43" shape-rendering="crispEdges"/>
<rect x="1092" y="235" width="12" height="1" fill="#dd3a3d" shape-rendering="crispEdges"/>
<rect x="1092" y="236" width="12" height="1" fill="#df3638" shape-rendering="crispEdges"/>
<rect x="1092" y="237" width="12" height="1" fill="#e03232" shape-rendering="crispEdges"/>
<rect x="1092" y="238" width="12" height="1" fill="#e1312e" shape-rendering="crispEdges"/>
<rect x="1092" y="239" width="12" height="1" fill="#e2332a" shape-rendering="crispEdges"/>
<rect x="1092" y="240" width="12" height="1" fill="#e33527" shape-rendering="crispEdges"/>
<rect x="1092" y="241" width="12" height="1" fill="#e43623" shape-rendering="crispEdges"/>
<rect x="1092" y="242" width="12" height="1" fill="#e6381f" shape-rendering="crispEdges"/>
<rect x="1092" y="243" width="12" height="1" fill="#e73a1c" shape-rendering="crispEdges"/>
<rect x="1092" y="244" width="12" height="1" fill="#e83c18" shape-rendering="crispEdges"/>
<rect x="1092" y="245" width="12" height="1" fill="#e93e15" shape-rendering="crispEdges"/>
<rect x="1092" y="246" width="12" height="1" fill="#ea4011" shape-rendering="crispEdges"/>
<rect x="1092" y="247" width="12" height="1" fill="#ec410d" shape-rendering="crispEdges"/>
<rect x="1092" y="248" width="12" height="1" fill="#ed430a" shape-rendering="crispEdges"/>
<rect x="1092" y="249" width="12" height="1" fill="#ee4506" shape-rendering="crispEdges"/>
<rect x="1092" y="250" width="12" height="1" fill="#ef4703" shape-rendering="crispEdges"/>
<rect x="1092" y="251" width="12" height="1" fill="#f04900" shape-rendering="crispEdges"/>
<rect x="1092" y="252" width="12" height="1" fill="#f14d00" shape-rendering="crispEdges"/>
<rect x="1092" y="253" width="12" height="1" fill="#f35100" shape-rendering="crispEdges"/>
<rect x="1092" y="254" width="12" height="1" fill="#f45400" shape-rendering="crispEdges"/>
<rect x="1092" y="255" width="12" height="1" fill="#f55800" shape-rendering="crispEdges"/>
<rect x="1092" y="256" width="12" height="1" fill="#f65c00" shape-rendering="crispEdges"/>
<rect x="1092" y="257" width="12" height="1" fill="#f76000" shape-rendering="crispEdges"/>
<rect x="1092" y="258" width="12" height="1" fill="#f86300" shape-rendering="crispEdges"/>
<rect x="1092" y="259" width="12" height="1" fill="#f96700" shape-rendering="crispEdges"/>
<rect x="1092" y="260" width="12" height="1" fill="#fa6b00" shape-rendering="crispEdges"/>
<rect x="1092" y="261" width="12" height="1" fill="#fc6f00" shape-rendering="crispEdges"/>
<rect x="1092" y="262" width="12" height="1" fill="#fd7200" shape-rendering="crispEdges"/>
<rect x="1092" y="263" width="12" height="1" fill="#fe7600" shape-rendering="crispEdges"/>
<rect x="1092" y="264" width="12" height="1" fill="#ff7a00" shape-rendering="crispEdges"/>
<rect x="1092" y="265" width="12" height="1" fill="#fe7c00" shape-rendering="crispEdges"/>
<rect x="1092" y="266" width="12" height="1" fill="#fd7f00" shape-rendering="crispEdges"/>
<rect x="1092" y="267" width="12" height="1" fill="#fc8200" shape-rendering="crispEdges"/>
<rect x="1092" y="268" width="12" height="1" fill="#fb8400" shape-rendering="crispEdges"/>
<rect x="1092" y="269" width="12" height="1" fill="#fa8600" shape-rendering="crispEdges"/>
<rect x="1092" y="270" width="12" height="1" fill="#f98900" shape-rendering="crispEdges"/>
<rect x="1092" y="271" width="12" height="1" fill="#f88c00" shape-rendering="crispEdges"/>
<rect x="1092" y="272" width="12" height="1" fill="#f78e00" shape-rendering="crispEdges"/>
<rect x="1092" y="273" width="12" height="1" fill="#f69000" shape-rendering="crispEdges"/>
<rect x="1092" y="274" width="12" height="1" fill="#f59300" shape-rendering="crispEdges"/>
<rect x="1092" y="275" width="12" height="1" fill="#f49600" shape-rendering="crispEdges"/>
<rect x="1092" y="276" width="12" height="1" fill="#f39800" shape-rendering="crispEdges"/>
<rect x="1092" y="277" width="12" height="1" fill="#f29a00" shape-rendering="crispEdges"/>
<rect x="1092" y="278" width="12" height="1" fill="#f19d00" shape-rendering="crispEdges"/>
<rect x="1092" y="279" width="12" height="1" fill="#f09f00" shape-rendering="crispEdges"/>
<rect x="1092" y="280" width="12" height="1" fill="#efa300" shape-rendering="crispEdges"/>
<rect x="1092" y="281" width="12" height="1" fill="#eda600" shape-rendering="crispEdges"/>
<rect x="1092" y="282" width="12" height="1" fill="#ebaa00" shape-rendering="crispEdges"/>
<rect x="1092" y="283" width="12" height="1" fill="#e9ae00" shape-rendering="crispEdges"/>
<rect x="1092" y="284" width="12" height="1" fill="#e7b100" shape-rendering="crispEdges"/>
<rect x="1092" y="285" width="12" height="1" fill="#e6b500" shape-rendering="crispEdges"/>
<rect x="1092" y="286" width="12" height="1" fill="#e4b900" shape-rendering="crispEdges"/>
<rect x="1092" y="287" width="12" height="1" fill="#e2bc00" shape-rendering="crispEdges"/>
<rect x="1092" y="288" width="12" height="1" fill="#e0c000" shape-rendering="crispEdges"/>
<rect x="1092" y="289" width="12" height="1" fill="#dec300" shape-rendering="crispEdges"/>
<rect x="1092" y="290" width="12" height="1" fill="#ddc700" shape-rendering="crispEdges"/>
<rect x="1092" y="291" width="12" height="1" fill="#dbcb00" shape-rendering="crispEdges"/>
<rect x="1092" y="292" width="12" height="1" fill="#d9ce00" shape-rendering="crispEdges"/>
<rect x="1092" y="293" width="12" height="1" fill="#d6d100" shape-rendering="crispEdges"/>
<rect x="1092" y="294" width="12" height="1" fill="#d3d400" shape-rendering="crispEdges"/>
<rect x="1092" y="295" width="12" height="1" fill="#d0d600" shape-rendering="crispEdges"/>
<rect x="1092" y="296" width="12" height="1" fill="#cdd800" shape-rendering="crispEdges"/>
<rect x="1092" y="297" width="12" height="1" fill="#cadb00" shape-rendering="crispEdges"/>
<rect x="1092" y="298" width="12" height="1" fill="#c7dd00" shape-rendering="crispEdges"/>
<rect x="1092" y="299" width="12" height="1" fill="#c4e000" shape-rendering="crispEdges"/>
<rect x="1092" y="300" width="12" height="1" fill="#c1e200" shape-rendering="crispEdges"/>
<rect x="1092" y="301" width="12" height="1" fill="#bee400" shape-rendering="crispEdges"/>
<rect x="1092" y="302" width="12" height="1" fill="#bbe700" shape-rendering="crispEdges"/>
<rect x="1092" y="303" width="12" height="1" fill="#b8e900" shape-rendering="crispEdges"/>
<rect x="1092" y="304" width="12" height="1" fill="#b5ec00" shape-rendering="crispEdges"/>
<rect x="1092" y="305" width="12" height="1" fill="#b2ee00" shape-rendering="crispEdges"/>
<rect x="1092" y="306" width="12" height="1" fill="#aff001" shape-rendering="crispEdges"/>
<rect x="1092" y="307" width="12" height="1" fill="#aaee05" shape-rendering="crispEdges"/>
<rect x="1092" y="308" width="12" height="1" fill="#a4ed09" shape-rendering="crispEdges"/>
<rect x="1092" y="309" width="12" height="1" fill="#9feb0d" shape-rendering="crispEdges"/>
<rect x="1092" y="310" width="12" height="1" fill="#9ae912" shape-rendering="crispEdges"/>
<rect x="1092" y="311" width="12" height="1" fill="#95e816" shape-rendering="crispEdges"/>
<rect x="1092" y="312" width="12" height="1" fill="#8fe61a" shape-rendering="crispEdges"/>
<rect x="1092" y="313" width="12" height="1" fill="#8ae51e" shape-rendering="crispEdges"/>
<rect x="1092" y="314" width="12" height="1" fill="#85e323" shape-rendering="crispEdges"/>
<rect x="1092" y="315" width="12" height="1" fill="#80e127" shape-rendering="crispEdges"/>
<rect x="1092" y="316" width="12" height="1" fill="#7ae02b" shape-rendering="crispEdges"/>
<rect x="1092" y="317" width="12" height="1" fill="#75de2f" shape-rendering="crispEdges"/>
<rect x="1092" y="318" width="12" height="1" fill="#70dd33" shape-rendering="crispEdges"/>
<rect x="1092" y="319" width="12" height="1" fill="#6bdb38" shape-rendering="crispEdges"/>
<rect x="1092" y="320" width="12" height="1" fill="#65da3c" shape-rendering="crispEdges"/>
<rect x="1092" y="321" width="12" height="1" fill="#60d840" shape-rendering="crispEdges"/>
<rect x="1092" y="322" width="12" height="1" fill="#5cd642" shape-rendering="crispEdges"/>
<rect x="1092" y="323" width="12" height="1" fill="#58d544" shape-rendering="crispEdges"/>
<rect x="1092" y="324" width="12" height="1" fill="#53d346" shape-rendering="crispEdges"/>
<rect x="1092" y="325" width="12" height="1" fill="#4fd248" shape-rendering="crispEdges"/>
<rect x="1092" y="326" width="12" height="1" fill="#4bd04b" shape-rendering="crispEdges"/>
<rect x="1092" y="327" width="12" height="1" fill="#47cf4d" shape-rendering="crispEdges"/>
<rect x="1092" y="328" width="12" height="1" fill="#43cd4f" shape-rendering="crispEdges"/>
<rect x="1092" y="329" width="12" height="1" fill="#3ecb51" shape-rendering="crispEdges"/>
<rect x="1092" y="330" width="12" height="1" fill="#3aca53" shape-rendering="crispEdges"/>
<rect x="1092" y="331" width="12" height="1" fill="#36c855" shape-rendering="crispEdges"/>
<rect x="1092" y="332" width="12" height="1" fill="#32c757" shape-rendering="crispEdges"/>
<rect x="1092" y="333" width="12" height="1" fill="#2dc559" shape-rendering="crispEdges"/>
<rect x="1092" y="334" width="12" height="1" fill="#29c35b" shape-rendering="crispEdges"/>
<rect x="1092" y="335" width="12" height="1" fill="#25c25d" shape-rendering="crispEdges"/>
<rect x="1092" y="336" width="12" height="1" fill="#21c060" shape-rendering="crispEdges"/>
<rect x="1092" y="337" width="12" height="1" fill="#1ebe63" shape-rendering="crispEdges"/>
<rect x="1092" y="338" width="12" height="1" fill="#1cbc66" shape-rendering="crispEdges"/>
<rect x="1092" y="339" width="12" height="1" fill="#1aba69" shape-rendering="crispEdges"/>
<rect x="1092" y="340" width="12" height="1" fill="#18b86c" shape-rendering="crispEdges"/>
<rect x="1092" y="341" width="12" height="1" fill="#16b66f" shape-rendering="crispEdges"/>
<rect x="1092" y="342" width="12" height="1" fill="#14b472" shape-rendering="crispEdges"/>
<rect x="1092" y="343" width="12" height="1" fill="#12b275" shape-rendering="crispEdges"/>
<rect x="1092" y="344" width="12" height="1" fill="#10b079" shape-rendering="crispEdges"/>
<rect x="1092" y="345" width="12" height="1" fill="#0dad7c" shape-rendering="crispEdges"/>
<rect x="1092" y="346" width="12" height="1" fill="#0bab7f" shape-rendering="crispEdges"/>
<rect x="1092" y="347" width="12" height="1" fill="#09a982" shape-rendering="crispEdges"/>
<rect x="1092" y="348" width="12" height="1" fill="#07a785" shape-rendering="crispEdges"/>
<rect x="1092" y="349" width="12" height="1" fill="#05a588" shape-rendering="crispEdges"/>
<rect x="1092" y="350" width="12" height="1" fill="#03a38c" shape-rendering="crispEdges"/>
<rect x="1092" y="351" width="12" height="1" fill="#01a18f" shape-rendering="crispEdges"/>
<rect x="1092" y="352" width="12" height="1" fill="#009f92" shape-rendering="crispEdges"/>
<rect x="1092" y="353" width="12" height="1" fill="#009d96" shape-rendering="crispEdges"/>
<rect x="1092" y="354" width="12" height="1" fill="#009c9a" shape-rendering="crispEdges"/>
<rect x="1092" y="355" width="12" height="1" fill="#009a9d" shape-rendering="crispEdges"/>
<rect x="1092" y="356" width="12" height="1" fill="#0099a1" shape-rendering="crispEdges"/>
<rect x="1092" y="357" width="12" height="1" fill="#0097a5" shape-rendering="crispEdges"/>
<rect x="1092" y="358" width="12" height="1" fill="#0096a8" shape-rendering="crispEdges"/>
<rect x="1092" y="359" width="12" height="1" fill="#0094ac" shape-rendering="crispEdges"/>
<rect x="1092" y="360" width="12" height="1" fill="#0092b0" shape-rendering="crispEdges"/>
<rect x="1092" y="361" width="12" height="1" fill="#0091b3" shape-rendering="crispEdges"/>
<rect x="1092" y="362" width="12" height="1" fill="#008fb7" shape-rendering="crispEdges"/>
<rect x="1092" y="363" width="12" height="1" fill="#008ebb" shape-rendering="crispEdges"/>
<rect x="1092" y="364" width="12" height="1" fill="#008cbe" shape-rendering="crispEdges"/>
<rect x="1092" y="365" width="12" height="1" fill="#008bc2" shape-rendering="crispEdges"/>
<rect x="1092" y="366" width="12" height="1" fill="#0089c6" shape-rendering="crispEdges"/>
<rect x="1092" y="367" width="12" height="1" fill="#0187ca" shape-rendering="crispEdges"/>
<rect x="1092" y="368" width="12" height="1" fill="#0283cf" shape-rendering="crispEdges"/>
<rect x="1092" y="369" width="12" height="1" fill="#0380d4" shape-rendering="crispEdges"/>
<rect x="1092" y="370" width="12" height="1" fill="#057cd8" shape-rendering="crispEdges"/>
<rect x="1092" y="371" width="12" height="1" fill="#0679dd" shape-rendering="crispEdges"/>
<rect x="1092" y="372" width="12" height="1" fill="#0875e2" shape-rendering="crispEdges"/>
<rect x="1092" y="373" width="12" height="1" fill="#0972e7" shape-rendering="crispEdges"/>
<rect x="1092" y="374" width="12" height="1" fill="#0a6eec" shape-rendering="crispEdges"/>
<rect x="1092" y="375" width="12" height="1" fill="#0c6bf1" shape-rendering="crispEdges"/>
<rect x="1092" y="376" width="12" height="1" fill="#0d67f5" shape-rendering="crispEdges"/>
<rect x="1092" y="377" width="12" height="1" fill="#0f64fa" shape-rendering="crispEdges"/>
<rect x="1092" y="378" width="12" height="1" fill="#1060ff" shape-rendering="crispEdges"/>
<rect x="1092" y="379" width="12" height="1" fill="#115cff" shape-rendering="crispEdges"/>
<rect x="1092" y="380" width="12" height="1" fill="#1358ff" shape-rendering="crispEdges"/>
<rect x="1092" y="381" width="12" height="1" fill="#1453ff" shape-rendering="crispEdges"/>
<rect x="1092" y="382" width="12" height="1" fill="#164fff" shape-rendering="crispEdges"/>
<rect x="1092" y="383" width="12" height="1" fill="#174bff" shape-rendering="crispEdges"/>
<rect x="1092" y="384" width="12" height="1" fill="#1847ff" shape-rendering="crispEdges"/>
<rect x="1092" y="385" width="12" height="1" fill="#1a43ff" shape-rendering="crispEdges"/>
<rect x="1092" y="386" width="12" height="1" fill="#1b3eff" shape-rendering="crispEdges"/>
<rect x="1092" y="387" width="12" height="1" fill="#1d3aff" shape-rendering="crispEdges"/>
<rect x="1092" y="388" width="12" height="1" fill="#1e36ff" shape-rendering="crispEdges"/>
<rect x="1092" y="389" width="12" height="1" fill="#1f32ff" shape-rendering="crispEdges"/>
<rect x="1092" y="390" width="12" height="1" fill="#1f2efb" shape-rendering="crispEdges"/>
<rect x="1092" y="391" width="12" height="1" fill="#1e2cf4" shape-rendering="crispEdges"/>
<rect x="1092" y="392" width="12" height="1" fill="#1c29ed" shape-rendering="crispEdges"/>
<rect x="1092" y="393" width="12" height="1" fill="#1b26e6" shape-rendering="crispEdges"/>
<rect x="1092" y="394" width="12" height="1" fill="#1a23df" shape-rendering="crispEdges"/>
<rect x="1092" y="395" width="12" height="1" fill="#1820d8" shape-rendering="crispEdges"/>
<rect x="1092" y="396" width="12" height="1" fill="#171dd1" shape-rendering="crispEdges"/>
<rect x="1092" y="397" width="12" height="1" fill="#151bca" shape-rendering="crispEdges"/>
<rect x="1092" y="398" width="12" height="1" fill="#1418c3" shape-rendering="crispEdges"/>
<rect x="1092" y="399" width="12" height="1" fill="#1315bc" shape-rendering="crispEdges"/>
<rect x="1092" y="400" width="12" height="1" fill="#1112b6" shape-rendering="crispEdges"/>
<rect x="1092" y="401" width="12" height="1" fill="#1010af" shape-rendering="crispEdges"/>
<rect x="1092" y="402" width="12" height="1" fill="#0f0fa8" shape-rendering="crispEdges"/>
<rect x="1092" y="403" width="12" height="1" fill="#0e0ea2" shape-rendering="crispEdges"/>
<rect x="1092" y="404" width="12" height="1" fill="#0d0d9c" shape-rendering="crispEdges"/>
<rect x="1092" y="405" width="12" height="1" fill="#0c0c95" shape-rendering="crispEdges"/>
<rect x="1092" y="406" width="12" height="1" fill="#0b0b8f" shape-rendering="crispEdges"/>
<rect x="1092" y="407" width="12" height="1" fill="#090989" shape-rendering="crispEdges"/>
<rect x="1092" y="408" width="12" height="1" fill="#080883" shape-rendering="crispEdges"/>
<rect x="1092" y="409" width="12" height="1" fill="#07077c" shape-rendering="crispEdges"/>
<rect x="1092" y="410" width="12" height="1" fill="#060676" shape-rendering="crispEdges"/>
<rect x="1092" y="411" width="12" height="1" fill="#050570" shape-rendering="crispEdges"/>
<rect x="1092" y="412" width="12" height="1" fill="#040469" shape-rendering="crispEdges"/>
<rect x="1092" y="413" width="12" height="1" fill="#030363" shape-rendering="crispEdges"/>
<rect x="1092" y="414" width="12" height="1" fill="#02025d" shape-rendering="crispEdges"/>
<rect x="1092" y="415" width="12" height="1" fill="#010156" shape-rendering="crispEdges"/>
<rect x="1092" y="416" width="12" height="1" fill="#000050" shape-rendering="crispEdges"/>
<line x1="1104.5" y1="225" x2="1104.5" y2="418" stroke="#333" stroke-width="1" shape-rendering="crispEdges"/>
<line x1="1104" y1="225.5" x2="1113" y2="225.5" stroke="#333" stroke-width="1" shape-rendering="crispEdges"/>
<line x1="1104" y1="283.5" x2="1113" y2="283.5" stroke="#333" stroke-width="1" shape-rendering="crispEdges"/>
<line x1="1104" y1="340.5" x2="1113" y2="340.5" stroke="#333" stroke-width="1" shape-rendering="crispEdges"/>
<line x1="1104" y1="398.5" x2="1113" y2="398.5" stroke="#333" stroke-width="1" shape-rendering="crispEdges"/>
<line x1="1104" y1="415.5" x2="1109" y2="415.5" stroke="#333" stroke-width="1" shape-rendering="crispEdges"/>
<line x1="1104" y1="411.5" x2="1109" y2="411.5" stroke="#333" stroke-width="1" shape-rendering="crispEdges"/>
<line x1="1104" y1="407.5" x2="1109" y2="407.5" stroke="#333" stroke-width="1" shape-rendering="crispEdges"/>
<line x1="1104" y1="403.5" x2="1109" y2="403.5" stroke="#333" stroke-width="1" shape-rendering="crispEdges"/>
<line x1="1104" y1="400.5" x2="1109" y2="400.5" stroke="#333" stroke-width="1" shape-rendering="crispEdges"/>
<line x1="1104" y1="380.5" x2="1109" y2="380.5" stroke="#333" stroke-width="1" shape-rendering="crispEdges"/>
<line x1="1104" y1="370.5" x2="1109" y2="370.5" stroke="#333" stroke-width="1" shape-rendering="crispEdges"/>
<line x1="1104" y1="363.5" x2="1109" y2="363.5" stroke="#333" stroke-width="1" shape-rendering="crispEdges"/>
<line x1="1104" y1="358.5" x2="1109" y2="358.5" stroke="#333" stroke-width="1" shape-rendering="crispEdges"/>
<line x1="1104" y1="353.5" x2="1109" y2="353.5" stroke="#333" stroke-width="1" shape-rendering="crispEdges"/>
<line x1="1104" y1="349.5" x2="1109" y2="349.5" stroke="#333" stroke-width="1" shape-rendering="crispEdges"/>
<line x1="1104" y1="346.5" x2="1109" y2="346.5" stroke="#333" stroke-width="1" shape-rendering="crispEdges"/>
<line x1="1104" y1="343.5" x2="1109" y2="343.5" stroke="#333" stroke-width="1" shape-rendering="crispEdges"/>
<line x1="1104" y1="323.5" x2="1109" y2="323.5" stroke="#333" stroke-width="1" shape-rendering="crispEdges"/>
<line x1="1104" y1="313.5" x2="1109" y2="313.5" stroke="#333" stroke-width="1" shape-rendering="crispEdges"/>
<line x1="1104" y1="306.5" x2="1109" y2="306.5" stroke="#333" stroke-width="1" shape-rendering="crispEdges"/>
<line x1="1104" y1="300.5" x2="1109" y2="300.5" stroke="#333" stroke-width="1" shape-rendering="crispEdges"/>
<line x1="1104" y1="295.5" x2="1109" y2="295.5" stroke="#333" stroke-width="1" shape-rendering="crispEdges"/>
<line x1="1104" y1="292.5" x2="1109" y2="292.5" stroke="#333" stroke-width="1" shape-rendering="crispEdges"/>
<line x1="1104" y1="288.5" x2="1109" y2="288.5" stroke="#333" stroke-width="1" shape-rendering="crispEdges"/>
<line x1="1104" y1="285.5" x2="1109" y2="285.5" stroke="#333" stroke-width="1" shape-rendering="crispEdges"/>
<line x1="1104" y1="265.5" x2="1109" y2="265.5" stroke="#333" stroke-width="1" shape-rendering="crispEdges"/>
<line x1="1104" y1="255.5" x2="1109" y2="255.5" stroke="#333" stroke-width="1" shape-rendering="crispEdges"/>
<line x1="1104" y1="248.5" x2="1109" y2="248.5" stroke="#333" stroke-width="1" shape-rendering="crispEdges"/>
<line x1="1104" y1="242.5" x2="1109" y2="242.5" stroke="#333" stroke-width="1" shape-rendering="crispEdges"/>
<line x1="1104" y1="238.5" x2="1109" y2="238.5" stroke="#333" stroke-width="1" shape-rendering="crispEdges"/>
<line x1="1104" y1="234.5" x2="1109" y2="234.5" stroke="#333" stroke-width="1" shape-rendering="crispEdges"/>
<line x1="1104" y1="231.5" x2="1109" y2="231.5" stroke="#333" stroke-width="1" shape-rendering="crispEdges"/>
<line x1="1104" y1="228.5" x2="1109" y2="228.5" stroke="#333" stroke-width="1" shape-rendering="crispEdges"/>
<text x="1116.90" y="232.80" font-size="12.2" text-anchor="start" fill="#444" textLength="15.28" lengthAdjust="spacingAndGlyphs" >10</text>
<text x="1132.78" y="226.80" font-size="12.2" text-anchor="start" fill="#444" textLength="11.97" lengthAdjust="spacingAndGlyphs" >−9</text>
<text x="1116.90" y="290.40" font-size="12.2" text-anchor="start" fill="#444" textLength="15.28" lengthAdjust="spacingAndGlyphs" >10</text>
<text x="1132.78" y="284.40" font-size="12.2" text-anchor="start" fill="#444" textLength="19.61" lengthAdjust="spacingAndGlyphs" >−10</text>
<text x="1116.90" y="348.00" font-size="12.2" text-anchor="start" fill="#444" textLength="15.28" lengthAdjust="spacingAndGlyphs" >10</text>
<text x="1132.78" y="342.00" font-size="12.2" text-anchor="start" fill="#444" textLength="19.61" lengthAdjust="spacingAndGlyphs" >−11</text>
<text x="1116.90" y="405.60" font-size="12.2" text-anchor="start" fill="#444" textLength="15.28" lengthAdjust="spacingAndGlyphs" >10</text>
<text x="1132.78" y="399.60" font-size="12.2" text-anchor="start" fill="#444" textLength="19.61" lengthAdjust="spacingAndGlyphs" >−12</text>
<text x="0" y="0" font-size="12.2" text-anchor="start" fill="#444" textLength="120.00" lengthAdjust="spacingAndGlyphs" transform="translate(1164.00,259.50) rotate(90)" >pressure dyne/cm^2</text>
<rect x="95.5" y="420.5" width="985" height="89" fill="#fff" stroke="#333" stroke-width="1"/>
<line x1="87" y1="437.5" x2="95" y2="437.5" stroke="#333" stroke-width="1" shape-rendering="crispEdges"/>
<line x1="87" y1="459.5" x2="95" y2="459.5" stroke="#333" stroke-width="1" shape-rendering="crispEdges"/>
<line x1="87" y1="480.5" x2="95" y2="480.5" stroke="#333" stroke-width="1" shape-rendering="crispEdges"/>
<line x1="87" y1="502.5" x2="95" y2="502.5" stroke="#333" stroke-width="1" shape-rendering="crispEdges"/>
<line x1="91" y1="509.5" x2="95" y2="509.5" stroke="#333" stroke-width="1" shape-rendering="crispEdges"/>
<line x1="91" y1="507.5" x2="95" y2="507.5" stroke="#333" stroke-width="1" shape-rendering="crispEdges"/>
<line x1="91" y1="506.5" x2="95" y2="506.5" stroke="#333" stroke-width="1" shape-rendering="crispEdges"/>
<line x1="91" y1="505.5" x2="95" y2="505.5" stroke="#333" stroke-width="1" shape-rendering="crispEdges"/>
<line x1="91" y1="503.5" x2="95" y2="503.5" stroke="#333" stroke-width="1" shape-rendering="crispEdges"/>
<line x1="91" y1="496.5" x2="95" y2="496.5" stroke="#333" stroke-width="1" shape-rendering="crispEdges"/>
<line x1="91" y1="492.5" x2="95" y2="492.5" stroke="#333" stroke-width="1" shape-rendering="crispEdges"/>
<line x1="91" y1="489.5" x2="95" y2="489.5" stroke="#333" stroke-width="1" shape-rendering="crispEdges"/>
<line x1="91" y1="487.5" x2="95" y2="487.5" stroke="#333" stroke-width="1" shape-rendering="crispEdges"/>
<line x1="91" y1="485.5" x2="95" y2="485.5" stroke="#333" stroke-width="1" shape-rendering="crispEdges"/>
<line x1="91" y1="484.5" x2="95" y2="484.5" stroke="#333" stroke-width="1" shape-rendering="crispEdges"/>
<line x1="91" y1="483.5" x2="95" y2="483.5" stroke="#333" stroke-width="1" shape-rendering="crispEdges"/>
<line x1="91" y1="481.5" x2="95" y2="481.5" stroke="#333" stroke-width="1" shape-rendering="crispEdges"/>
<line x1="91" y1="474.5" x2="95" y2="474.5" stroke="#333" stroke-width="1" shape-rendering="crispEdges"/>
<line x1="91" y1="470.5" x2="95" y2="470.5" stroke="#333" stroke-width="1" shape-rendering="crispEdges"/>
<line x1="91" y1="467.5" x2="95" y2="467.5" stroke="#333" stroke-width="1" shape-rendering="crispEdges"/>
<line x1="91" y1="465.5" x2="95" y2="465.5" stroke="#333" stroke-width="1" shape-rendering="crispEdges"/>
<line x1="91" y1="463.5" x2="95" y2="463.5" stroke="#333" stroke-width="1" shape-rendering="crispEdges"/>
<line x1="91" y1="462.5" x2="95" y2="462.5" stroke="#333" stroke-width="1" shape-rendering="crispEdges"/>
<line x1="91" y1="461.5" x2="95" y2="461.5" stroke="#333" stroke-width="1" shape-rendering="crispEdges"/>
<line x1="91" y1="460.5" x2="95" y2="460.5" stroke="#333" stroke-width="1" shape-rendering="crispEdges"/>
<line x1="91" y1="452.5" x2="95" y2="452.5" stroke="#333" stroke-width="1" shape-rendering="crispEdges"/>
<line x1="91" y1="448.5" x2="95" y2="448.5" stroke="#333" stroke-width="1" shape-rendering="crispEdges"/>
<line x1="91" y1="445.5" x2="95" y2="445.5" stroke="#333" stroke-width="1" shape-rendering="crispEdges"/>
<line x1="91" y1="443.5" x2="95" y2="443.5" stroke="#333" stroke-width="1" shape-rendering="crispEdges"/>
<line x1="91" y1="441.5" x2="95" y2="441.5" stroke="#333" stroke-width="1" shape-rendering="crispEdges"/>
<line x1="91" y1="440.5" x2="95" y2="440.5" stroke="#333" stroke-width="1" shape-rendering="crispEdges"/>
<line x1="91" y1="439.5" x2="95" y2="439.5" stroke="#333" stroke-width="1" shape-rendering="crispEdges"/>
<line x1="91" y1="438.5" x2="95" y2="438.5" stroke="#333" stroke-width="1" shape-rendering="crispEdges"/>
<line x1="91" y1="430.5" x2="95" y2="430.5" stroke="#333" stroke-width="1" shape-rendering="crispEdges"/>
<line x1="91" y1="426.5" x2="95" y2="426.5" stroke="#333" stroke-width="1" shape-rendering="crispEdges"/>
<line x1="91" y1="423.5" x2="95" y2="423.5" stroke="#333" stroke-width="1" shape-rendering="crispEdges"/>
<line x1="91" y1="421.5" x2="95" y2="421.5" stroke="#333" stroke-width="1" shape-rendering="crispEdges"/>
<text x="70.63" y="437.80" font-size="12.2" text-anchor="start" fill="#444" textLength="11.97" lengthAdjust="spacingAndGlyphs" >−9</text>
<text x="55.75" y="443.80" font-size="12.2" text-anchor="start" fill="#444" textLength="15.28" lengthAdjust="spacingAndGlyphs" >10</text>
<text x="62.99" y="459.73" font-size="12.2" text-anchor="start" fill="#444" textLength="19.61" lengthAdjust="spacingAndGlyphs" >−10</text>
<text x="48.11" y="465.73" font-size="12.2" text-anchor="start" fill="#444" textLength="15.28" lengthAdjust="spacingAndGlyphs" >10</text>
<text x="62.99" y="481.66" font-size="12.2" text-anchor="start" fill="#444" textLength="19.61" lengthAdjust="spacingAndGlyphs" >−11</text>
<text x="48.11" y="487.66" font-size="12.2" text-anchor="start" fill="#444" textLength="15.28" lengthAdjust="spacingAndGlyphs" >10</text>
<text x="62.99" y="503.59" font-size="12.2" text-anchor="start" fill="#444" textLength="19.61" lengthAdjust="spacingAndGlyphs" >−12</text>
<text x="48.11" y="509.59" font-size="12.2" text-anchor="start" fill="#444" textLength="15.28" lengthAdjust="spacingAndGlyphs" >10</text>
<text x="0" y="0" font-size="12.2" text-anchor="start" fill="#444" textLength="69.50" lengthAdjust="spacingAndGlyphs" transform="translate(35.00,500.50) rotate(-90)" >P dyn/cm^2</text>
<clipPath id="c3"><rect x="96" y="421" width="984" height="88"/></clipPath>
<g clip-path="url(#c3)" fill="none" stroke-linejoin="miter">
<polyline stroke="#ff0000" stroke-width="1.1" points="96.0,486.3 98.0,485.8 100.0,486.8 102.0,485.8 104.0,486.8 106.0,486.8 108.0,486.8 110.0,486.3 112.0,484.8 114.0,485.8 116.0,485.3 118.0,486.8 120.0,484.8 122.0,485.3 124.0,484.8 126.0,485.8 128.0,485.8 130.0,485.3 132.0,485.8 134.0,486.3 136.0,484.8 138.0,486.3 140.0,485.3 142.0,484.8 144.0,486.8 146.0,485.3 148.0,485.8 150.0,485.8 152.0,485.3 154.0,485.8 156.0,485.3 158.0,484.8 160.0,485.3 162.0,486.3 164.0,486.3 166.0,485.8 168.0,485.3 170.0,485.3 172.0,484.8 174.0,484.8 176.0,485.3 178.0,485.3 180.0,485.3 182.0,485.3 184.0,485.8 186.0,485.8 188.0,485.3 190.0,486.3 192.0,486.8 194.0,486.8 196.0,485.3 198.0,485.3 200.0,486.8 202.0,485.3 204.0,485.8 206.0,485.8 208.0,484.8 210.0,485.8 212.0,485.8 214.0,485.3 216.0,485.3 218.0,485.8 220.0,484.8 222.0,485.8 224.0,485.8 226.0,486.3 228.0,486.3 230.0,484.8 232.0,486.3 234.0,486.8 236.0,486.8 238.0,485.8 240.0,484.8 242.0,485.8 244.0,485.8 246.0,485.8 248.0,485.8 250.0,486.8 252.0,485.8 254.0,485.3 256.0,485.8 258.0,485.8 260.0,486.8 262.0,485.3 264.0,484.8 266.0,485.8 268.0,484.8 270.0,486.8 272.0,485.8 274.0,485.8 276.0,484.8 278.0,486.3 280.0,485.8 282.0,485.8 284.0,485.8 286.0,486.3 288.0,484.8 290.0,485.8 292.0,484.8 294.0,486.8 296.0,485.3 298.0,486.3 300.0,485.3 302.0,484.8 304.0,485.3 306.0,485.8 308.0,485.8 310.0,486.3 312.0,485.8 314.0,486.3 316.0,485.8 318.0,485.8 320.0,484.8 322.0,486.3 324.0,486.8 326.0,485.8 328.0,485.8 330.0,484.8 332.0,485.8 334.0,484.8 336.0,484.1 338.0,484.6 340.0,485.1 342.0,485.1 344.0,484.6 346.0,484.1 348.0,484.6 350.0,484.6 352.0,485.6 354.0,485.1 356.0,483.6 358.0,484.6 360.0,485.6 362.0,484.6 364.0,484.6 366.0,484.1 368.0,483.6 370.0,485.6 372.0,484.1 374.0,485.6 376.0,485.6 378.0,484.6 380.0,484.6 382.0,484.1 384.0,485.6 386.0,483.6 388.0,483.6 390.0,485.1 392.0,485.1 394.0,484.6 396.0,484.8 398.0,485.3 400.0,486.8 402.0,486.3 404.0,485.8 406.0,485.8 408.0,485.8 410.0,486.8 412.0,485.8 414.0,485.3 416.0,484.8 418.0,486.8 420.0,484.8 422.0,485.8 424.0,485.8 426.0,485.3 428.0,485.3 430.0,486.8 432.0,486.3 434.0,485.3 436.0,486.8 438.0,485.8 440.0,484.8 442.0,485.3 444.0,485.8 446.0,485.8 448.0,485.3 450.0,484.8 452.0,485.8 454.0,485.8 456.0,485.3 458.0,485.8 460.0,486.3 462.0,485.3 464.0,486.3 466.0,485.8 468.0,485.8 470.0,486.8 472.0,486.8 474.0,485.8 476.0,485.8 478.0,485.8 480.0,485.8 482.0,485.8 484.0,485.8 486.0,485.3 488.0,484.8 490.0,485.8 492.0,486.3 494.0,485.3 496.0,486.8 498.0,485.8 500.0,485.8 502.0,485.3 504.0,484.8 506.0,484.6 508.0,484.6 510.0,485.1 512.0,485.1 514.0,485.1 516.0,484.6 518.0,483.6 520.0,484.6 522.0,485.6 524.0,485.1 526.0,486.8 528.0,484.8 530.0,485.8 532.0,485.8 534.0,486.3 536.0,486.8 538.0,486.8 540.0,485.8 542.0,485.8 544.0,485.8 546.0,486.8 548.0,486.8 550.0,485.8 552.0,485.8 554.0,486.8 556.0,485.3 558.0,486.3 560.0,484.8 562.0,485.8 564.0,486.3 566.0,485.8 568.0,485.8 570.0,486.8 572.0,485.8 574.0,485.8 576.0,485.8 578.0,486.3 580.0,486.8 582.0,486.8 584.0,485.8 586.0,485.8 588.0,485.8 590.0,486.8 592.0,485.8 594.0,486.8 596.0,485.8 598.0,485.8 600.0,485.3 602.0,486.8 604.0,485.8 606.0,485.8 608.0,485.8 610.0,486.3 612.0,485.3 614.0,486.3 616.0,485.3 618.0,485.3 620.0,485.8 622.0,485.8 624.0,485.8 626.0,486.8 628.0,484.8 630.0,486.8 632.0,486.8 634.0,486.8 636.0,485.8 638.0,485.3 640.0,486.3 642.0,486.3 644.0,486.3 646.0,486.8 648.0,485.8 650.0,485.8 652.0,486.3 654.0,486.3 656.0,486.8 658.0,485.8 660.0,486.8 662.0,484.8 664.0,485.3 666.0,485.3 668.0,486.3 670.0,485.8 672.0,486.3 674.0,486.8 676.0,485.3 678.0,485.3 680.0,486.8 682.0,485.3 684.0,486.8 686.0,486.8 688.0,484.8 690.0,485.8 692.0,485.3 694.0,485.3 696.0,484.8 698.0,485.3 700.0,484.8 702.0,485.8 704.0,485.3 706.0,485.8 708.0,485.3 710.0,486.3 712.0,484.8 714.0,485.8 716.0,485.8 718.0,485.8 720.0,485.8 722.0,486.8 724.0,486.3 726.0,484.8 728.0,486.3 730.0,485.3 732.0,485.3 734.0,486.8 736.0,485.8 738.0,484.8 740.0,485.8 742.0,485.8 744.0,485.8 746.0,485.8 748.0,484.8 750.0,486.8 752.0,486.3 754.0,485.8 756.0,484.8 758.0,486.3 760.0,486.3 762.0,485.8 764.0,484.8 766.0,485.8 768.0,486.3 770.0,486.3 772.0,485.8 774.0,486.3 776.0,484.6 778.0,484.6 780.0,484.1 782.0,484.6 784.0,484.6 786.0,485.1 788.0,485.6 790.0,485.1 792.0,484.6 794.0,484.6 796.0,484.1 798.0,484.1 800.0,485.1 802.0,485.8 804.0,486.3 806.0,485.8 808.0,485.3 810.0,485.3 812.0,486.3 814.0,484.8 816.0,485.8 818.0,486.8 820.0,484.8 822.0,485.8 824.0,484.8 826.0,485.8 828.0,486.3 830.0,486.3 832.0,486.3 834.0,485.3 836.0,485.8 838.0,486.8 840.0,486.3 842.0,485.8 844.0,485.8 846.0,485.8 848.0,485.3 850.0,485.8 852.0,485.8 854.0,485.8 856.0,486.8 858.0,485.8 860.0,485.8 862.0,485.3 864.0,486.3 866.0,486.3 868.0,485.8 870.0,486.8 872.0,485.8 874.0,485.8 876.0,485.8 878.0,485.8 880.0,483.6 882.0,484.6 884.0,484.6 886.0,484.6 888.0,484.6 890.0,484.1 892.0,484.6 894.0,483.6 896.0,483.6 898.0,485.6 900.0,485.1 902.0,484.6 904.0,484.1 906.0,484.6 908.0,483.6 910.0,484.1 912.0,484.6 914.0,483.6 916.0,484.6 918.0,485.1 920.0,485.1 922.0,485.8 924.0,485.3 926.0,485.8 928.0,484.8 930.0,485.3 932.0,485.8 934.0,485.8 936.0,485.3 938.0,486.8 940.0,485.8 942.0,485.8 944.0,485.8 946.0,486.3 948.0,485.8 950.0,486.3 952.0,486.8 954.0,486.3 956.0,486.8 958.0,484.8 960.0,484.8 962.0,485.3 964.0,485.8 966.0,485.8 968.0,486.3 970.0,486.8 972.0,485.8 974.0,486.3 976.0,485.8 978.0,486.8 980.0,486.3 982.0,484.8 984.0,485.8 986.0,485.8 988.0,485.8 990.0,486.8 992.0,486.8 994.0,486.3 996.0,485.3 998.0,484.8 1000.0,484.8 1002.0,485.8 1004.0,486.3 1006.0,485.8 1008.0,486.8 1010.0,484.8 1012.0,486.8 1014.0,486.3 1016.0,485.3 1018.0,484.8 1020.0,485.8 1022.0,485.8 1024.0,486.3 1026.0,486.3 1028.0,486.8 1030.0,486.8 1032.0,486.8 1034.0,486.8 1036.0,485.8 1038.0,485.8 1040.0,485.8 1042.0,485.8 1044.0,486.8 1046.0,486.8 1048.0,485.3 1050.0,485.8 1052.0,485.8 1054.0,484.8 1056.0,485.8 1058.0,484.8 1060.0,486.8 1062.0,485.8 1064.0,486.3 1066.0,485.8 1068.0,486.8 1070.0,485.8 1072.0,485.8 1074.0,485.3 1076.0,485.3 1078.0,485.8 1080.0,486.8"/>
<polyline stroke="#00ff00" stroke-width="1.2" points="111.3,509.2 111.3,489.7"/>
<polyline stroke="#00ff00" stroke-width="1.2" points="142.5,509.2 142.5,489.2"/>
<polyline stroke="#00ff00" stroke-width="1.2" points="159.2,509.2 159.2,498.3"/>
<polyline stroke="#00ff00" stroke-width="1.2" points="166.3,509.2 166.3,493.3"/>
<polyline stroke="#00ff00" stroke-width="1.2" points="196.3,509.2 196.3,472.0"/>
<polyline stroke="#00ff00" stroke-width="1.2" points="213.7,509.2 213.7,505.8"/>
<polyline stroke="#00ff00" stroke-width="1.2" points="128.3,509.2 128.3,500.0 131.3,490.0 131.3,509.2"/>
<polyline stroke="#00ff00" stroke-width="1.2" points="172.0,509.2 172.0,495.8 179.2,483.0 179.2,509.2"/>
<polyline stroke="#00ff00" stroke-width="1.2" points="220.3,509.2 220.3,485.0 224.7,495.0 224.7,509.2"/>
<polyline stroke="#00ff00" stroke-width="1.2" points="254.2,509.2 254.2,472.0 261.7,491.7 261.7,509.2"/>
<polyline stroke="#00ff00" stroke-width="1.2" points="398.3,509.2 398.3,472.5"/>
<polyline stroke="#00ff00" stroke-width="1.2" points="374.2,509.2 374.2,506.3 377.5,506.3 377.5,509.2"/>
<polyline stroke="#00ff00" stroke-width="1.2" points="384.2,509.2 384.2,506.3"/>
<polyline stroke="#00ff00" stroke-width="1.2" points="490.3,509.2 490.3,508.0"/>
<polyline stroke="#00ff00" stroke-width="1.2" points="555.0,509.2 555.0,500.8"/>
<polyline stroke="#00ff00" stroke-width="1.2" points="603.3,509.2 603.3,483.0"/>
<polyline stroke="#00ff00" stroke-width="1.2" points="610.3,509.2 610.3,504.2"/>
<polyline stroke="#00ff00" stroke-width="1.2" points="630.3,509.2 630.3,504.2"/>
<polyline stroke="#00ff00" stroke-width="1.2" points="658.3,509.2 658.3,504.2"/>
<polyline stroke="#00ff00" stroke-width="1.2" points="722.5,509.2 722.5,496.3 726.3,500.8 726.3,509.2"/>
<polyline stroke="#00ff00" stroke-width="1.2" points="753.3,509.2 753.3,499.2"/>
<polyline stroke="#00ff00" stroke-width="1.2" points="842.5,509.2 842.5,505.8"/>
<polyline stroke="#00ff00" stroke-width="1.2" points="873.3,509.2 873.3,505.0"/>
<polyline stroke="#00ff00" stroke-width="1.2" points="1047.4,508.8 1047.4,472.0"/>
<polyline stroke="#00ff00" stroke-width="1.2" points="921.4,508.8 921.4,504.4"/>
<polyline stroke="#0000ff" stroke-width="1.2" points="101.7,509.2 104.2,487.2 110.8,489.7 114.7,499.7 125.8,486.3 129.2,490.8 131.7,485.3 135.8,490.3 138.7,486.3 141.7,489.7 145.0,503.0 148.3,493.3 152.5,509.2"/>
<polyline stroke="#0000ff" stroke-width="1.2" points="162.5,509.2 162.5,486.7 165.8,502.0 168.3,500.3 172.0,509.2 176.7,491.7 180.0,500.0 185.0,493.7 187.0,495.3 190.0,486.3 193.3,488.3 197.0,503.3 203.7,490.3 208.3,509.2 211.7,498.3 218.3,484.7 220.3,485.0 227.5,502.0 227.8,509.2"/>
<polyline stroke="#0000ff" stroke-width="1.2" points="234.2,483.0 237.5,509.2"/>
<polyline stroke="#0000ff" stroke-width="1.2" points="244.7,509.2 245.0,488.3 248.3,490.8 251.7,482.5 255.0,484.7 258.3,505.8 261.7,498.3 265.8,500.0 268.3,485.0 271.7,493.3 278.3,487.0 281.7,509.2 285.0,489.2 289.2,509.2"/>
<polyline stroke="#0000ff" stroke-width="1.2" points="291.7,507.5 295.0,505.8"/>
<polyline stroke="#0000ff" stroke-width="1.2" points="290.0,508.7 295.8,505.8 299.2,489.7 305.8,490.8 309.7,499.7 312.5,497.5 316.3,479.2 323.3,502.5 325.8,500.3 330.0,503.0 333.7,509.2"/>
<polyline stroke="#0000ff" stroke-width="1.2" points="335.8,509.2 336.3,500.3 336.7,509.2"/>
<polyline stroke="#0000ff" stroke-width="1.2" points="343.0,509.2 347.5,489.7 350.3,488.3 350.3,509.2"/>
<polyline stroke="#0000ff" stroke-width="1.2" points="357.5,509.2 357.5,491.7 360.0,487.5 367.0,482.2 371.7,486.3 377.5,481.3 381.3,497.5 388.3,489.2 390.8,509.2 394.2,494.2 396.7,509.2 400.8,486.7 405.0,509.2 408.3,490.8 411.3,509.2"/>
<polyline stroke="#0000ff" stroke-width="1.2" points="425.3,499.2 429.7,509.2"/>
<polyline stroke="#0000ff" stroke-width="1.2" points="435.5,483.0 440.8,509.2"/>
<polyline stroke="#0000ff" stroke-width="1.2" points="450.8,509.2 454.2,486.7 456.7,495.3 463.3,483.3 464.2,509.2"/>
<polyline stroke="#0000ff" stroke-width="1.2" points="470.0,509.2 473.3,483.3 479.2,495.0 483.3,509.2"/>
<polyline stroke="#0000ff" stroke-width="1.2" points="487.0,509.2 490.3,476.3 494.2,483.3 497.5,485.8 497.5,509.2"/>
<polyline stroke="#0000ff" stroke-width="1.2" points="507.5,509.2 507.5,489.2 511.7,483.0 514.7,488.3 517.5,481.3 521.3,489.2 524.7,491.3 528.7,485.3 531.7,497.5 535.0,483.3 538.3,475.3 541.3,474.2 545.3,485.0 545.3,509.2"/>
<polyline stroke="#0000ff" stroke-width="1.2" points="555.0,509.2 555.0,486.7 558.3,509.2 562.5,475.3 565.8,500.0 569.2,501.3 575.0,491.3 582.5,478.0 586.7,480.3 586.7,509.2"/>
<polyline stroke="#0000ff" stroke-width="1.2" points="593.3,509.2 593.3,491.3 596.3,495.5 603.0,494.2 603.0,509.2"/>
<polyline stroke="#0000ff" stroke-width="1.2" points="606.7,509.2 606.7,476.3 610.3,480.0 617.5,495.8 620.8,509.2 623.3,493.3 630.3,479.2 640.8,485.0 644.7,479.2 644.7,509.2"/>
<polyline stroke="#0000ff" stroke-width="1.2" points="654.2,509.2 654.2,480.3 657.5,485.0 661.3,501.3 664.2,495.8 671.3,505.3 675.3,494.2 678.3,505.3 685.0,493.7"/>
<polyline stroke="#0000ff" stroke-width="1.2" points="680.0,503.0 685.8,492.0 685.8,509.2"/>
<polyline stroke="#0000ff" stroke-width="1.2" points="703.3,509.2 705.3,500.0 705.3,509.2"/>
<polyline stroke="#0000ff" stroke-width="1.2" points="712.0,509.2 712.0,491.3 715.8,494.2 720.0,485.8 725.8,491.7 729.7,490.0 733.3,509.2 736.7,491.3 740.3,491.3 743.3,487.5 746.7,490.3 750.0,478.3 750.8,509.2"/>
<polyline stroke="#0000ff" stroke-width="1.2" points="760.3,509.2 760.3,491.3 766.7,485.8 770.3,477.0 777.0,490.8 781.7,494.7 785.0,491.3 787.5,492.5 790.8,480.0 794.2,475.3 798.3,478.3 801.7,483.3 804.2,483.3 808.3,502.5 811.7,490.3 816.7,494.2 822.5,499.7 828.3,486.7 832.5,486.7 835.8,491.3 840.0,489.7 844.2,489.2 849.2,500.3 852.5,481.3 856.3,495.8 863.3,498.3 870.0,486.7 873.3,486.3 876.7,506.7 880.0,486.7"/>
<polyline stroke="#0000ff" stroke-width="1.2" points="875.0,494.8 876.4,508.8 881.1,486.4 886.4,491.3 893.4,487.8 897.8,500.0 900.4,500.0 904.8,488.6 910.9,508.8"/>
<polyline stroke="#0000ff" stroke-width="1.2" points="923.7,508.8 924.9,495.1 924.9,508.8"/>
<polyline stroke="#0000ff" stroke-width="1.2" points="934.5,508.8 934.5,491.3 939.8,493.0 945.0,493.9 948.5,505.6 952.0,497.4 955.5,479.0 958.7,490.4 965.1,486.0 968.6,488.6 972.1,484.3 975.6,497.4 979.7,495.6 987.0,500.9 989.6,496.9 992.6,477.3 996.1,493.0 999.3,489.5 1003.6,503.2 1006.6,494.8 1009.8,507.4 1013.3,482.2 1016.4,503.5 1020.3,482.9 1023.4,508.8 1028.1,495.6 1033.4,487.4 1037.8,490.4 1040.4,504.4 1044.8,484.3 1047.4,493.9 1050.9,486.0 1054.4,500.0 1057.9,503.2 1061.4,505.6 1061.4,508.8"/>
<polyline stroke="#0000ff" stroke-width="1.2" points="1068.4,508.8 1068.4,490.4 1071.9,504.4 1074.5,507.0 1078.9,506.1"/>
</g>
<line x1="1091" y1="426" x2="1103" y2="430.5" stroke="#0000ff" stroke-width="1.3" />
<text x="1107.20" y="433.00" font-size="12.2" text-anchor="start" fill="#444" textLength="53.30" lengthAdjust="spacingAndGlyphs" >CHEMS−P</text>
<line x1="1091" y1="440.6" x2="1103" y2="445.1" stroke="#ff0000" stroke-width="1.3" />
<text x="1107.20" y="447.60" font-size="12.2" text-anchor="start" fill="#444" textLength="52.50" lengthAdjust="spacingAndGlyphs" >LEMMS−P</text>
<line x1="1091" y1="456" x2="1103" y2="460.5" stroke="#00ff00" stroke-width="1.3" />
<text x="1107.20" y="463.00" font-size="12.2" text-anchor="start" fill="#444" textLength="55.40" lengthAdjust="spacingAndGlyphs" >CHEMS−O</text>
<defs><linearGradient id="g4" x1="0" y1="513" x2="0" y2="691" gradientUnits="userSpaceOnUse">
<stop offset="0.0000" stop-color="#1414c0"/>
<stop offset="0.0730" stop-color="#1a28d8"/>
<stop offset="0.2247" stop-color="#1c30e8"/>
<stop offset="0.3090" stop-color="#1c3af0"/>
<stop offset="0.3983" stop-color="#1c48f8"/>
<stop offset="0.3989" stop-color="#1866f4"/>
<stop offset="0.4438" stop-color="#1080e4"/>
<stop offset="0.5163" stop-color="#0c9ccc"/>
<stop offset="0.5169" stop-color="#10a4c0"/>
<stop offset="0.5955" stop-color="#18b0a4"/>
<stop offset="0.6629" stop-color="#30bc84"/>
<stop offset="0.7528" stop-color="#60cc58"/>
<stop offset="0.8258" stop-color="#a0dc30"/>
<stop offset="0.8933" stop-color="#d0e600"/>
<stop offset="0.9326" stop-color="#e0e000"/>
<stop offset="0.9607" stop-color="#f0d000"/>
<stop offset="0.9831" stop-color="#f0b000"/>
<stop offset="1.0000" stop-color="#f09400"/>
</linearGradient></defs>
<rect x="95" y="513" width="986" height="178" fill="url(#g4)" />
<defs><linearGradient id="fy" x1="95" y1="0" x2="1081" y2="0" gradientUnits="userSpaceOnUse"><stop offset="0.0000" stop-color="#f8f000" stop-opacity="0.000"/><stop offset="0.0081" stop-color="#f8f000" stop-opacity="0.000"/><stop offset="0.0162" stop-color="#f8f000" stop-opacity="0.000"/><stop offset="0.0243" stop-color="#f8f000" stop-opacity="0.000"/><stop offset="0.0325" stop-color="#f8f000" stop-opacity="0.000"/><stop offset="0.0406" stop-color="#f8f000" stop-opacity="0.044"/><stop offset="0.0487" stop-color="#f8f000" stop-opacity="0.116"/><stop offset="0.0568" stop-color="#f8f000" stop-opacity="0.187"/><stop offset="0.0649" stop-color="#f8f000" stop-opacity="0.258"/><stop offset="0.0730" stop-color="#f8f000" stop-opacity="0.329"/><stop offset="0.0811" stop-color="#f8f000" stop-opacity="0.400"/><stop offset="0.0892" stop-color="#f8f000" stop-opacity="0.329"/><stop offset="0.0974" stop-color="#f8f000" stop-opacity="0.258"/><stop offset="0.1055" stop-color="#f8f000" stop-opacity="0.187"/><stop offset="0.1136" stop-color="#f8f000" stop-opacity="0.116"/><stop offset="0.1217" stop-color="#f8f000" stop-opacity="0.044"/><stop offset="0.1298" stop-color="#f8f000" stop-opacity="0.000"/><stop offset="0.1379" stop-color="#f8f000" stop-opacity="0.000"/><stop offset="0.1460" stop-color="#f8f000" stop-opacity="0.000"/><stop offset="0.1542" stop-color="#f8f000" stop-opacity="0.000"/><stop offset="0.1623" stop-color="#f8f000" stop-opacity="0.000"/><stop offset="0.1704" stop-color="#f8f000" stop-opacity="0.000"/><stop offset="0.1785" stop-color="#f8f000" stop-opacity="0.000"/><stop offset="0.1866" stop-color="#f8f000" stop-opacity="0.000"/><stop offset="0.1947" stop-color="#f8f000" stop-opacity="0.093"/><stop offset="0.2028" stop-color="#f8f000" stop-opacity="0.200"/><stop offset="0.2110" stop-color="#f8f000" stop-opacity="0.307"/><stop offset="0.2191" stop-color="#f8f000" stop-opacity="0.387"/><stop offset="0.2272" stop-color="#f8f000" stop-opacity="0.280"/><stop offset="0.2353" stop-color="#f8f000" stop-opacity="0.173"/><stop offset="0.2434" stop-color="#f8f000" stop-opacity="0.067"/><stop offset="0.2515" stop-color="#f8f000" stop-opacity="0.000"/><stop offset="0.2596" stop-color="#f8f000" stop-opacity="0.000"/><stop offset="0.2677" stop-color="#f8f000" stop-opacity="0.000"/><stop offset="0.2759" stop-color="#f8f000" stop-opacity="0.000"/><stop offset="0.2840" stop-color="#f8f000" stop-opacity="0.000"/><stop offset="0.2921" stop-color="#f8f000" stop-opacity="0.000"/><stop offset="0.3002" stop-color="#f8f000" stop-opacity="0.000"/><stop offset="0.3083" stop-color="#f8f000" stop-opacity="0.000"/><stop offset="0.3164" stop-color="#f8f000" stop-opacity="0.000"/><stop offset="0.3245" stop-color="#f8f000" stop-opacity="0.000"/><stop offset="0.3327" stop-color="#f8f000" stop-opacity="0.000"/><stop offset="0.3408" stop-color="#f8f000" stop-opacity="0.096"/><stop offset="0.3489" stop-color="#f8f000" stop-opacity="0.224"/><stop offset="0.3570" stop-color="#f8f000" stop-opacity="0.352"/><stop offset="0.3651" stop-color="#f8f000" stop-opacity="0.320"/><stop offset="0.3732" stop-color="#f8f000" stop-opacity="0.192"/><stop offset="0.3813" stop-color="#f8f000" stop-opacity="0.064"/><stop offset="0.3895" stop-color="#f8f000" stop-opacity="0.000"/><stop offset="0.3976" stop-color="#f8f000" stop-opacity="0.000"/><stop offset="0.4057" stop-color="#f8f000" stop-opacity="0.000"/><stop offset="0.4138" stop-color="#f8f000" stop-opacity="0.040"/><stop offset="0.4219" stop-color="#f8f000" stop-opacity="0.147"/><stop offset="0.4300" stop-color="#f8f000" stop-opacity="0.253"/><stop offset="0.4381" stop-color="#f8f000" stop-opacity="0.360"/><stop offset="0.4462" stop-color="#f8f000" stop-opacity="0.333"/><stop offset="0.4544" stop-color="#f8f000" stop-opacity="0.227"/><stop offset="0.4625" stop-color="#f8f000" stop-opacity="0.120"/><stop offset="0.4706" stop-color="#f8f000" stop-opacity="0.013"/><stop offset="0.4787" stop-color="#f8f000" stop-opacity="0.000"/><stop offset="0.4868" stop-color="#f8f000" stop-opacity="0.000"/><stop offset="0.4949" stop-color="#f8f000" stop-opacity="0.000"/><stop offset="0.5030" stop-color="#f8f000" stop-opacity="0.000"/><stop offset="0.5112" stop-color="#f8f000" stop-opacity="0.000"/><stop offset="0.5193" stop-color="#f8f000" stop-opacity="0.000"/><stop offset="0.5274" stop-color="#f8f000" stop-opacity="0.000"/><stop offset="0.5355" stop-color="#f8f000" stop-opacity="0.128"/><stop offset="0.5436" stop-color="#f8f000" stop-opacity="0.256"/><stop offset="0.5517" stop-color="#f8f000" stop-opacity="0.384"/><stop offset="0.5598" stop-color="#f8f000" stop-opacity="0.288"/><stop offset="0.5680" stop-color="#f8f000" stop-opacity="0.160"/><stop offset="0.5761" stop-color="#f8f000" stop-opacity="0.032"/><stop offset="0.5842" stop-color="#f8f000" stop-opacity="0.000"/><stop offset="0.5923" stop-color="#f8f000" stop-opacity="0.000"/><stop offset="0.6004" stop-color="#f8f000" stop-opacity="0.000"/><stop offset="0.6085" stop-color="#f8f000" stop-opacity="0.000"/><stop offset="0.6166" stop-color="#f8f000" stop-opacity="0.000"/><stop offset="0.6247" stop-color="#f8f000" stop-opacity="0.000"/><stop offset="0.6329" stop-color="#f8f000" stop-opacity="0.000"/><stop offset="0.6410" stop-color="#f8f000" stop-opacity="0.000"/><stop offset="0.6491" stop-color="#f8f000" stop-opacity="0.000"/><stop offset="0.6572" stop-color="#f8f000" stop-opacity="0.000"/><stop offset="0.6653" stop-color="#f8f000" stop-opacity="0.000"/><stop offset="0.6734" stop-color="#f8f000" stop-opacity="0.040"/><stop offset="0.6815" stop-color="#f8f000" stop-opacity="0.120"/><stop offset="0.6897" stop-color="#f8f000" stop-opacity="0.200"/><stop offset="0.6978" stop-color="#f8f000" stop-opacity="0.280"/><stop offset="0.7059" stop-color="#f8f000" stop-opacity="0.360"/><stop offset="0.7140" stop-color="#f8f000" stop-opacity="0.360"/><stop offset="0.7221" stop-color="#f8f000" stop-opacity="0.280"/><stop offset="0.7302" stop-color="#f8f000" stop-opacity="0.200"/><stop offset="0.7383" stop-color="#f8f000" stop-opacity="0.120"/><stop offset="0.7465" stop-color="#f8f000" stop-opacity="0.040"/><stop offset="0.7546" stop-color="#f8f000" stop-opacity="0.000"/><stop offset="0.7627" stop-color="#f8f000" stop-opacity="0.000"/><stop offset="0.7708" stop-color="#f8f000" stop-opacity="0.000"/><stop offset="0.7789" stop-color="#f8f000" stop-opacity="0.000"/><stop offset="0.7870" stop-color="#f8f000" stop-opacity="0.000"/><stop offset="0.7951" stop-color="#f8f000" stop-opacity="0.000"/><stop offset="0.8032" stop-color="#f8f000" stop-opacity="0.000"/><stop offset="0.8114" stop-color="#f8f000" stop-opacity="0.000"/><stop offset="0.8195" stop-color="#f8f000" stop-opacity="0.000"/><stop offset="0.8276" stop-color="#f8f000" stop-opacity="0.000"/><stop offset="0.8357" stop-color="#f8f000" stop-opacity="0.000"/><stop offset="0.8438" stop-color="#f8f000" stop-opacity="0.000"/><stop offset="0.8519" stop-color="#f8f000" stop-opacity="0.000"/><stop offset="0.8600" stop-color="#f8f000" stop-opacity="0.000"/><stop offset="0.8682" stop-color="#f8f000" stop-opacity="0.000"/><stop offset="0.8763" stop-color="#f8f000" stop-opacity="0.000"/><stop offset="0.8844" stop-color="#f8f000" stop-opacity="0.000"/><stop offset="0.8925" stop-color="#f8f000" stop-opacity="0.000"/><stop offset="0.9006" stop-color="#f8f000" stop-opacity="0.034"/><stop offset="0.9087" stop-color="#f8f000" stop-opacity="0.126"/><stop offset="0.9168" stop-color="#f8f000" stop-opacity="0.217"/><stop offset="0.9249" stop-color="#f8f000" stop-opacity="0.309"/><stop offset="0.9331" stop-color="#f8f000" stop-opacity="0.400"/><stop offset="0.9412" stop-color="#f8f000" stop-opacity="0.309"/><stop offset="0.9493" stop-color="#f8f000" stop-opacity="0.217"/><stop offset="0.9574" stop-color="#f8f000" stop-opacity="0.126"/><stop offset="0.9655" stop-color="#f8f000" stop-opacity="0.034"/><stop offset="0.9736" stop-color="#f8f000" stop-opacity="0.000"/><stop offset="0.9817" stop-color="#f8f000" stop-opacity="0.000"/><stop offset="0.9899" stop-color="#f8f000" stop-opacity="0.000"/><stop offset="0.9980" stop-color="#f8f000" stop-opacity="0.000"/></linearGradient>
<linearGradient id="fd" x1="95" y1="0" x2="1081" y2="0" gradientUnits="userSpaceOnUse"><stop offset="0.0000" stop-color="#000" stop-opacity="0.100"/><stop offset="0.0081" stop-color="#000" stop-opacity="0.100"/><stop offset="0.0162" stop-color="#000" stop-opacity="0.100"/><stop offset="0.0243" stop-color="#000" stop-opacity="0.100"/><stop offset="0.0325" stop-color="#000" stop-opacity="0.100"/><stop offset="0.0406" stop-color="#000" stop-opacity="0.089"/><stop offset="0.0487" stop-color="#000" stop-opacity="0.071"/><stop offset="0.0568" stop-color="#000" stop-opacity="0.053"/><stop offset="0.0649" stop-color="#000" stop-opacity="0.036"/><stop offset="0.0730" stop-color="#000" stop-opacity="0.018"/><stop offset="0.0811" stop-color="#000" stop-opacity="0.000"/><stop offset="0.0892" stop-color="#000" stop-opacity="0.018"/><stop offset="0.0974" stop-color="#000" stop-opacity="0.036"/><stop offset="0.1055" stop-color="#000" stop-opacity="0.053"/><stop offset="0.1136" stop-color="#000" stop-opacity="0.071"/><stop offset="0.1217" stop-color="#000" stop-opacity="0.089"/><stop offset="0.1298" stop-color="#000" stop-opacity="0.100"/><stop offset="0.1379" stop-color="#000" stop-opacity="0.100"/><stop offset="0.1460" stop-color="#000" stop-opacity="0.100"/><stop offset="0.1542" stop-color="#000" stop-opacity="0.100"/><stop offset="0.1623" stop-color="#000" stop-opacity="0.100"/><stop offset="0.1704" stop-color="#000" stop-opacity="0.100"/><stop offset="0.1785" stop-color="#000" stop-opacity="0.100"/><stop offset="0.1866" stop-color="#000" stop-opacity="0.100"/><stop offset="0.1947" stop-color="#000" stop-opacity="0.077"/><stop offset="0.2028" stop-color="#000" stop-opacity="0.050"/><stop offset="0.2110" stop-color="#000" stop-opacity="0.023"/><stop offset="0.2191" stop-color="#000" stop-opacity="0.003"/><stop offset="0.2272" stop-color="#000" stop-opacity="0.030"/><stop offset="0.2353" stop-color="#000" stop-opacity="0.057"/><stop offset="0.2434" stop-color="#000" stop-opacity="0.083"/><stop offset="0.2515" stop-color="#000" stop-opacity="0.100"/><stop offset="0.2596" stop-color="#000" stop-opacity="0.100"/><stop offset="0.2677" stop-color="#000" stop-opacity="0.100"/><stop offset="0.2759" stop-color="#000" stop-opacity="0.100"/><stop offset="0.2840" stop-color="#000" stop-opacity="0.100"/><stop offset="0.2921" stop-color="#000" stop-opacity="0.100"/><stop offset="0.3002" stop-color="#000" stop-opacity="0.100"/><stop offset="0.3083" stop-color="#000" stop-opacity="0.100"/><stop offset="0.3164" stop-color="#000" stop-opacity="0.100"/><stop offset="0.3245" stop-color="#000" stop-opacity="0.100"/><stop offset="0.3327" stop-color="#000" stop-opacity="0.100"/><stop offset="0.3408" stop-color="#000" stop-opacity="0.076"/><stop offset="0.3489" stop-color="#000" stop-opacity="0.044"/><stop offset="0.3570" stop-color="#000" stop-opacity="0.012"/><stop offset="0.3651" stop-color="#000" stop-opacity="0.020"/><stop offset="0.3732" stop-color="#000" stop-opacity="0.052"/><stop offset="0.3813" stop-color="#000" stop-opacity="0.084"/><stop offset="0.3895" stop-color="#000" stop-opacity="0.100"/><stop offset="0.3976" stop-color="#000" stop-opacity="0.100"/><stop offset="0.4057" stop-color="#000" stop-opacity="0.100"/><stop offset="0.4138" stop-color="#000" stop-opacity="0.090"/><stop offset="0.4219" stop-color="#000" stop-opacity="0.063"/><stop offset="0.4300" stop-color="#000" stop-opacity="0.037"/><stop offset="0.4381" stop-color="#000" stop-opacity="0.010"/><stop offset="0.4462" stop-color="#000" stop-opacity="0.017"/><stop offset="0.4544" stop-color="#000" stop-opacity="0.043"/><stop offset="0.4625" stop-color="#000" stop-opacity="0.070"/><stop offset="0.4706" stop-color="#000" stop-opacity="0.097"/><stop offset="0.4787" stop-color="#000" stop-opacity="0.100"/><stop offset="0.4868" stop-color="#000" stop-opacity="0.100"/><stop offset="0.4949" stop-color="#000" stop-opacity="0.100"/><stop offset="0.5030" stop-color="#000" stop-opacity="0.100"/><stop offset="0.5112" stop-color="#000" stop-opacity="0.100"/><stop offset="0.5193" stop-color="#000" stop-opacity="0.100"/><stop offset="0.5274" stop-color="#000" stop-opacity="0.100"/><stop offset="0.5355" stop-color="#000" stop-opacity="0.068"/><stop offset="0.5436" stop-color="#000" stop-opacity="0.036"/><stop offset="0.5517" stop-color="#000" stop-opacity="0.004"/><stop offset="0.5598" stop-color="#000" stop-opacity="0.028"/><stop offset="0.5680" stop-color="#000" stop-opacity="0.060"/><stop offset="0.5761" stop-color="#000" stop-opacity="0.092"/><stop offset="0.5842" stop-color="#000" stop-opacity="0.100"/><stop offset="0.5923" stop-color="#000" stop-opacity="0.100"/><stop offset="0.6004" stop-color="#000" stop-opacity="0.100"/><stop offset="0.6085" stop-color="#000" stop-opacity="0.100"/><stop offset="0.6166" stop-color="#000" stop-opacity="0.100"/><stop offset="0.6247" stop-color="#000" stop-opacity="0.100"/><stop offset="0.6329" stop-color="#000" stop-opacity="0.100"/><stop offset="0.6410" stop-color="#000" stop-opacity="0.100"/><stop offset="0.6491" stop-color="#000" stop-opacity="0.100"/><stop offset="0.6572" stop-color="#000" stop-opacity="0.100"/><stop offset="0.6653" stop-color="#000" stop-opacity="0.100"/><stop offset="0.6734" stop-color="#000" stop-opacity="0.090"/><stop offset="0.6815" stop-color="#000" stop-opacity="0.070"/><stop offset="0.6897" stop-color="#000" stop-opacity="0.050"/><stop offset="0.6978" stop-color="#000" stop-opacity="0.030"/><stop offset="0.7059" stop-color="#000" stop-opacity="0.010"/><stop offset="0.7140" stop-color="#000" stop-opacity="0.010"/><stop offset="0.7221" stop-color="#000" stop-opacity="0.030"/><stop offset="0.7302" stop-color="#000" stop-opacity="0.050"/><stop offset="0.7383" stop-color="#000" stop-opacity="0.070"/><stop offset="0.7465" stop-color="#000" stop-opacity="0.090"/><stop offset="0.7546" stop-color="#000" stop-opacity="0.100"/><stop offset="0.7627" stop-color="#000" stop-opacity="0.100"/><stop offset="0.7708" stop-color="#000" stop-opacity="0.100"/><stop offset="0.7789" stop-color="#000" stop-opacity="0.100"/><stop offset="0.7870" stop-color="#000" stop-opacity="0.100"/><stop offset="0.7951" stop-color="#000" stop-opacity="0.100"/><stop offset="0.8032" stop-color="#000" stop-opacity="0.100"/><stop offset="0.8114" stop-color="#000" stop-opacity="0.100"/><stop offset="0.8195" stop-color="#000" stop-opacity="0.100"/><stop offset="0.8276" stop-color="#000" stop-opacity="0.100"/><stop offset="0.8357" stop-color="#000" stop-opacity="0.100"/><stop offset="0.8438" stop-color="#000" stop-opacity="0.100"/><stop offset="0.8519" stop-color="#000" stop-opacity="0.100"/><stop offset="0.8600" stop-color="#000" stop-opacity="0.100"/><stop offset="0.8682" stop-color="#000" stop-opacity="0.100"/><stop offset="0.8763" stop-color="#000" stop-opacity="0.100"/><stop offset="0.8844" stop-color="#000" stop-opacity="0.100"/><stop offset="0.8925" stop-color="#000" stop-opacity="0.100"/><stop offset="0.9006" stop-color="#000" stop-opacity="0.091"/><stop offset="0.9087" stop-color="#000" stop-opacity="0.069"/><stop offset="0.9168" stop-color="#000" stop-opacity="0.046"/><stop offset="0.9249" stop-color="#000" stop-opacity="0.023"/><stop offset="0.9331" stop-color="#000" stop-opacity="0.000"/><stop offset="0.9412" stop-color="#000" stop-opacity="0.023"/><stop offset="0.9493" stop-color="#000" stop-opacity="0.046"/><stop offset="0.9574" stop-color="#000" stop-opacity="0.069"/><stop offset="0.9655" stop-color="#000" stop-opacity="0.091"/><stop offset="0.9736" stop-color="#000" stop-opacity="0.100"/><stop offset="0.9817" stop-color="#000" stop-opacity="0.100"/><stop offset="0.9899" stop-color="#000" stop-opacity="0.100"/><stop offset="0.9980" stop-color="#000" stop-opacity="0.100"/></linearGradient></defs>
<rect x="95" y="650" width="986" height="32" fill="url(#fy)" />
<path fill="#000" fill-opacity="0.22" shape-rendering="crispEdges" d="M96 522h1V530h-1zM96 581h1V584h-1zM97 530h1V552h-1zM97 552h1V556h-1zM97 584h1V605h-1zM98 530h1V552h-1zM98 552h1V556h-1zM98 569h1V581h-1zM98 584h1V605h-1zM99 569h1V581h-1zM99 584h1V605h-1zM100 530h1V552h-1zM100 552h1V556h-1zM101 569h1V581h-1zM101 581h1V584h-1zM103 530h1V552h-1zM110 556h1V569h-1zM111 569h1V581h-1zM111 581h1V584h-1zM114 552h1V556h-1zM114 556h1V569h-1zM114 569h1V581h-1zM115 569h1V581h-1zM116 581h1V584h-1zM117 530h1V552h-1zM122 552h1V556h-1zM122 569h1V581h-1zM122 581h1V584h-1zM122 584h1V605h-1zM123 522h1V530h-1zM126 522h1V530h-1zM127 581h1V584h-1zM127 584h1V605h-1zM129 581h1V584h-1zM132 530h1V552h-1zM134 581h1V584h-1zM135 581h1V584h-1zM136 552h1V556h-1zM136 584h1V605h-1zM139 552h1V556h-1zM142 552h1V556h-1zM145 581h1V584h-1zM147 581h1V584h-1zM148 569h1V581h-1zM149 569h1V581h-1zM149 581h1V584h-1zM150 552h1V556h-1zM152 530h1V552h-1zM153 530h1V552h-1zM153 552h1V556h-1zM153 556h1V569h-1zM153 569h1V581h-1zM154 552h1V556h-1zM154 569h1V581h-1zM154 584h1V605h-1zM155 556h1V569h-1zM156 522h1V530h-1zM157 530h1V552h-1zM158 552h1V556h-1zM158 581h1V584h-1zM158 584h1V605h-1zM159 530h1V552h-1zM160 556h1V569h-1zM161 569h1V581h-1zM161 581h1V584h-1zM162 584h1V605h-1zM163 522h1V530h-1zM163 552h1V556h-1zM164 581h1V584h-1zM166 530h1V552h-1zM167 530h1V552h-1zM168 584h1V605h-1zM169 522h1V530h-1zM171 522h1V530h-1zM172 552h1V556h-1zM173 581h1V584h-1zM174 581h1V584h-1zM174 584h1V605h-1zM175 581h1V584h-1zM176 584h1V605h-1zM178 552h1V556h-1zM179 584h1V605h-1zM180 581h1V584h-1zM183 569h1V581h-1zM184 530h1V552h-1zM184 584h1V605h-1zM187 581h1V584h-1zM188 584h1V605h-1zM189 556h1V569h-1zM194 522h1V530h-1zM194 584h1V605h-1zM195 581h1V584h-1zM196 530h1V552h-1zM197 552h1V556h-1zM198 530h1V552h-1zM199 522h1V530h-1zM200 530h1V552h-1zM201 584h1V605h-1zM202 584h1V605h-1zM204 581h1V584h-1zM205 522h1V530h-1zM205 530h1V552h-1zM205 556h1V569h-1zM208 581h1V584h-1zM209 552h1V556h-1zM209 584h1V605h-1zM210 552h1V556h-1zM213 552h1V556h-1zM213 556h1V569h-1zM214 569h1V581h-1zM217 530h1V552h-1zM217 581h1V584h-1zM218 522h1V530h-1zM221 522h1V530h-1zM221 556h1V569h-1zM223 569h1V581h-1zM224 556h1V569h-1zM224 581h1V584h-1zM225 556h1V569h-1zM226 556h1V569h-1zM227 581h1V584h-1zM227 584h1V605h-1zM230 581h1V584h-1zM235 530h1V552h-1zM235 569h1V581h-1zM236 530h1V552h-1zM236 569h1V581h-1zM236 581h1V584h-1zM237 522h1V530h-1zM238 556h1V569h-1zM238 569h1V581h-1zM242 530h1V552h-1zM244 522h1V530h-1zM244 552h1V556h-1zM247 569h1V581h-1zM247 581h1V584h-1zM249 584h1V605h-1zM251 581h1V584h-1zM251 584h1V605h-1zM252 552h1V556h-1zM254 581h1V584h-1zM256 552h1V556h-1zM257 556h1V569h-1zM257 569h1V581h-1zM259 552h1V556h-1zM259 556h1V569h-1zM260 530h1V552h-1zM260 552h1V556h-1zM261 522h1V530h-1zM261 581h1V584h-1zM263 556h1V569h-1zM263 569h1V581h-1zM264 552h1V556h-1zM264 569h1V581h-1zM265 556h1V569h-1zM265 569h1V581h-1zM266 530h1V552h-1zM266 584h1V605h-1zM267 569h1V581h-1zM270 552h1V556h-1zM273 552h1V556h-1zM274 552h1V556h-1zM276 530h1V552h-1zM277 581h1V584h-1zM278 552h1V556h-1zM278 584h1V605h-1zM279 552h1V556h-1zM281 530h1V552h-1zM282 552h1V556h-1zM285 581h1V584h-1zM288 530h1V552h-1zM288 552h1V556h-1zM288 581h1V584h-1zM292 581h1V584h-1zM293 530h1V552h-1zM293 569h1V581h-1zM295 530h1V552h-1zM296 569h1V581h-1zM296 581h1V584h-1zM296 584h1V605h-1zM297 556h1V569h-1zM299 522h1V530h-1zM300 530h1V552h-1zM300 584h1V605h-1zM303 530h1V552h-1zM303 584h1V605h-1zM304 581h1V584h-1zM304 584h1V605h-1zM307 513h1V522h-1zM307 552h1V556h-1zM307 556h1V569h-1zM308 522h1V530h-1zM308 552h1V556h-1zM313 530h1V552h-1zM315 581h1V584h-1zM316 522h1V530h-1zM316 569h1V581h-1zM320 556h1V569h-1zM321 530h1V552h-1zM321 552h1V556h-1zM324 552h1V556h-1zM324 556h1V569h-1zM325 584h1V605h-1zM326 584h1V605h-1zM327 569h1V581h-1zM327 581h1V584h-1zM328 569h1V581h-1zM328 581h1V584h-1zM332 530h1V552h-1zM332 556h1V569h-1zM333 522h1V530h-1zM335 530h1V552h-1zM335 584h1V605h-1zM336 552h1V556h-1zM338 530h1V552h-1zM338 552h1V556h-1zM339 556h1V569h-1zM339 569h1V581h-1zM340 530h1V552h-1zM340 581h1V584h-1zM341 581h1V584h-1zM341 584h1V605h-1zM343 584h1V605h-1zM346 556h1V569h-1zM347 530h1V552h-1zM347 552h1V556h-1zM347 556h1V569h-1zM348 552h1V556h-1zM349 584h1V605h-1zM350 552h1V556h-1zM351 556h1V569h-1zM353 569h1V581h-1zM354 522h1V530h-1zM355 581h1V584h-1zM357 584h1V605h-1zM358 522h1V530h-1zM358 552h1V556h-1zM359 569h1V581h-1zM365 522h1V530h-1zM366 584h1V605h-1zM368 556h1V569h-1zM368 581h1V584h-1zM368 584h1V605h-1zM369 513h1V522h-1zM376 581h1V584h-1zM380 552h1V556h-1zM380 581h1V584h-1zM384 552h1V556h-1zM385 530h1V552h-1zM385 552h1V556h-1zM387 556h1V569h-1zM387 569h1V581h-1zM393 569h1V581h-1zM394 581h1V584h-1zM395 569h1V581h-1zM395 581h1V584h-1zM396 581h1V584h-1zM397 522h1V530h-1zM401 581h1V584h-1zM402 552h1V556h-1zM404 522h1V530h-1zM404 569h1V581h-1zM405 556h1V569h-1zM405 581h1V584h-1zM406 581h1V584h-1zM407 569h1V581h-1zM408 584h1V605h-1zM409 552h1V556h-1zM413 584h1V605h-1zM414 530h1V552h-1zM414 556h1V569h-1zM414 584h1V605h-1zM415 569h1V581h-1zM417 569h1V581h-1zM418 530h1V552h-1zM418 552h1V556h-1zM420 552h1V556h-1zM420 556h1V569h-1zM421 581h1V584h-1zM423 584h1V605h-1zM424 581h1V584h-1zM426 556h1V569h-1zM427 530h1V552h-1zM428 552h1V556h-1zM429 530h1V552h-1zM429 556h1V569h-1zM430 552h1V556h-1zM430 581h1V584h-1zM431 522h1V530h-1zM433 569h1V581h-1zM436 581h1V584h-1zM436 584h1V605h-1zM437 513h1V522h-1zM439 522h1V530h-1zM439 581h1V584h-1zM442 522h1V530h-1zM448 556h1V569h-1zM449 556h1V569h-1zM449 581h1V584h-1zM450 522h1V530h-1zM450 584h1V605h-1zM452 530h1V552h-1zM457 522h1V530h-1zM457 530h1V552h-1zM461 584h1V605h-1zM462 584h1V605h-1zM463 584h1V605h-1zM465 581h1V584h-1zM468 552h1V556h-1zM468 581h1V584h-1zM469 552h1V556h-1zM469 556h1V569h-1zM470 552h1V556h-1zM471 552h1V556h-1zM474 556h1V569h-1zM475 552h1V556h-1zM475 584h1V605h-1zM476 556h1V569h-1zM476 569h1V581h-1zM476 581h1V584h-1zM479 569h1V581h-1zM482 552h1V556h-1zM482 584h1V605h-1zM483 522h1V530h-1zM484 584h1V605h-1zM485 556h1V569h-1zM488 584h1V605h-1zM489 569h1V581h-1zM489 581h1V584h-1zM491 569h1V581h-1zM492 530h1V552h-1zM494 581h1V584h-1zM494 584h1V605h-1zM495 584h1V605h-1zM496 581h1V584h-1zM498 569h1V581h-1zM502 556h1V569h-1zM503 556h1V569h-1zM503 569h1V581h-1zM504 581h1V584h-1zM506 556h1V569h-1zM507 552h1V556h-1zM507 556h1V569h-1zM507 569h1V581h-1zM508 552h1V556h-1zM508 569h1V581h-1zM509 530h1V552h-1zM509 584h1V605h-1zM511 552h1V556h-1zM512 552h1V556h-1zM513 552h1V556h-1zM513 581h1V584h-1zM514 530h1V552h-1zM514 552h1V556h-1zM515 530h1V552h-1zM522 530h1V552h-1zM522 556h1V569h-1zM522 581h1V584h-1zM522 584h1V605h-1zM523 522h1V530h-1zM525 552h1V556h-1zM525 581h1V584h-1zM526 584h1V605h-1zM529 581h1V584h-1zM530 584h1V605h-1zM532 552h1V556h-1zM533 556h1V569h-1zM533 569h1V581h-1zM534 552h1V556h-1zM535 552h1V556h-1zM536 556h1V569h-1zM536 581h1V584h-1zM538 530h1V552h-1zM539 552h1V556h-1zM539 556h1V569h-1zM541 552h1V556h-1zM543 530h1V552h-1zM545 556h1V569h-1zM546 584h1V605h-1zM547 581h1V584h-1zM547 584h1V605h-1zM548 584h1V605h-1zM550 530h1V552h-1zM550 569h1V581h-1zM552 569h1V581h-1zM553 569h1V581h-1zM555 530h1V552h-1zM555 556h1V569h-1zM556 522h1V530h-1zM556 530h1V552h-1zM561 530h1V552h-1zM561 552h1V556h-1zM561 569h1V581h-1zM562 584h1V605h-1zM564 584h1V605h-1zM565 556h1V569h-1zM568 581h1V584h-1zM571 530h1V552h-1zM571 552h1V556h-1zM571 556h1V569h-1zM572 569h1V581h-1zM573 569h1V581h-1zM576 556h1V569h-1zM576 569h1V581h-1zM578 581h1V584h-1zM579 530h1V552h-1zM579 556h1V569h-1zM579 569h1V581h-1zM579 581h1V584h-1zM580 552h1V556h-1zM580 569h1V581h-1zM582 581h1V584h-1zM583 581h1V584h-1zM584 556h1V569h-1zM584 581h1V584h-1zM586 552h1V556h-1zM587 530h1V552h-1zM587 584h1V605h-1zM589 513h1V522h-1zM589 530h1V552h-1zM589 552h1V556h-1zM590 552h1V556h-1zM591 530h1V552h-1zM591 569h1V581h-1zM591 581h1V584h-1zM592 556h1V569h-1zM592 581h1V584h-1zM594 522h1V530h-1zM594 552h1V556h-1zM595 552h1V556h-1zM595 569h1V581h-1zM596 552h1V556h-1zM597 556h1V569h-1zM598 556h1V569h-1zM599 552h1V556h-1zM600 552h1V556h-1zM605 556h1V569h-1zM608 530h1V552h-1zM609 556h1V569h-1zM609 581h1V584h-1zM613 552h1V556h-1zM614 581h1V584h-1zM614 584h1V605h-1zM615 569h1V581h-1zM615 581h1V584h-1zM616 530h1V552h-1zM617 556h1V569h-1zM617 581h1V584h-1zM618 569h1V581h-1zM618 584h1V605h-1zM620 552h1V556h-1zM621 584h1V605h-1zM622 522h1V530h-1zM622 552h1V556h-1zM622 584h1V605h-1zM623 530h1V552h-1zM623 556h1V569h-1zM623 569h1V581h-1zM623 581h1V584h-1zM624 530h1V552h-1zM626 569h1V581h-1zM628 530h1V552h-1zM628 556h1V569h-1zM629 513h1V522h-1zM629 552h1V556h-1zM630 584h1V605h-1zM631 569h1V581h-1zM631 581h1V584h-1zM632 556h1V569h-1zM633 556h1V569h-1zM635 552h1V556h-1zM635 556h1V569h-1zM635 584h1V605h-1zM636 530h1V552h-1zM636 569h1V581h-1zM636 584h1V605h-1zM640 556h1V569h-1zM640 584h1V605h-1zM645 530h1V552h-1zM647 584h1V605h-1zM650 569h1V581h-1zM657 581h1V584h-1zM658 552h1V556h-1zM663 569h1V581h-1zM666 530h1V552h-1zM666 569h1V581h-1zM670 556h1V569h-1zM671 556h1V569h-1zM676 556h1V569h-1zM678 581h1V584h-1zM679 569h1V581h-1zM679 581h1V584h-1zM682 530h1V552h-1zM683 556h1V569h-1zM686 522h1V530h-1zM687 530h1V552h-1zM687 569h1V581h-1zM692 556h1V569h-1zM694 522h1V530h-1zM694 581h1V584h-1zM697 581h1V584h-1zM698 530h1V552h-1zM698 556h1V569h-1zM698 569h1V581h-1zM699 581h1V584h-1zM700 584h1V605h-1zM703 530h1V552h-1zM704 530h1V552h-1zM704 556h1V569h-1zM705 569h1V581h-1zM706 584h1V605h-1zM707 569h1V581h-1zM707 584h1V605h-1zM708 552h1V556h-1zM709 530h1V552h-1zM709 552h1V556h-1zM709 581h1V584h-1zM711 552h1V556h-1zM712 556h1V569h-1zM716 581h1V584h-1zM717 552h1V556h-1zM718 569h1V581h-1zM723 552h1V556h-1zM724 556h1V569h-1zM726 569h1V581h-1zM726 581h1V584h-1zM730 530h1V552h-1zM733 552h1V556h-1zM733 569h1V581h-1zM735 530h1V552h-1zM736 530h1V552h-1zM736 556h1V569h-1zM737 522h1V530h-1zM738 522h1V530h-1zM738 530h1V552h-1zM740 556h1V569h-1zM741 584h1V605h-1zM743 556h1V569h-1zM743 581h1V584h-1zM744 556h1V569h-1zM744 569h1V581h-1zM744 584h1V605h-1zM746 552h1V556h-1zM747 581h1V584h-1zM753 522h1V530h-1zM754 569h1V581h-1zM754 581h1V584h-1zM755 584h1V605h-1zM762 581h1V584h-1zM763 530h1V552h-1zM765 552h1V556h-1zM766 530h1V552h-1zM766 552h1V556h-1zM767 530h1V552h-1zM767 552h1V556h-1zM770 584h1V605h-1zM771 556h1V569h-1zM771 584h1V605h-1zM772 581h1V584h-1zM772 584h1V605h-1zM773 552h1V556h-1zM774 530h1V552h-1zM775 530h1V552h-1zM777 581h1V584h-1zM778 556h1V569h-1zM780 522h1V530h-1zM785 552h1V556h-1zM785 569h1V581h-1zM786 581h1V584h-1zM787 569h1V581h-1zM789 581h1V584h-1zM790 584h1V605h-1zM798 556h1V569h-1zM798 581h1V584h-1zM799 552h1V556h-1zM801 584h1V605h-1zM802 569h1V581h-1zM802 584h1V605h-1zM805 584h1V605h-1zM807 556h1V569h-1zM807 584h1V605h-1zM809 581h1V584h-1zM810 522h1V530h-1zM812 556h1V569h-1zM813 530h1V552h-1zM817 581h1V584h-1zM820 581h1V584h-1zM823 552h1V556h-1zM824 530h1V552h-1zM825 581h1V584h-1zM828 581h1V584h-1zM829 556h1V569h-1zM830 581h1V584h-1zM834 522h1V530h-1zM834 530h1V552h-1zM834 584h1V605h-1zM838 522h1V530h-1zM839 569h1V581h-1zM839 584h1V605h-1zM841 584h1V605h-1zM846 552h1V556h-1zM848 552h1V556h-1zM849 522h1V530h-1zM851 522h1V530h-1zM851 556h1V569h-1zM853 556h1V569h-1zM853 581h1V584h-1zM854 556h1V569h-1zM855 584h1V605h-1zM856 584h1V605h-1zM860 569h1V581h-1zM861 556h1V569h-1zM862 530h1V552h-1zM863 556h1V569h-1zM864 569h1V581h-1zM864 581h1V584h-1zM864 584h1V605h-1zM865 552h1V556h-1zM868 584h1V605h-1zM872 581h1V584h-1zM873 584h1V605h-1zM874 556h1V569h-1zM877 556h1V569h-1zM878 569h1V581h-1zM879 522h1V530h-1zM879 556h1V569h-1zM883 584h1V605h-1zM884 584h1V605h-1zM885 569h1V581h-1zM887 552h1V556h-1zM887 556h1V569h-1zM889 581h1V584h-1zM890 513h1V522h-1zM890 569h1V581h-1zM891 569h1V581h-1zM892 552h1V556h-1zM892 584h1V605h-1zM893 584h1V605h-1zM894 581h1V584h-1zM895 552h1V556h-1zM897 530h1V552h-1zM897 552h1V556h-1zM897 584h1V605h-1zM898 556h1V569h-1zM898 581h1V584h-1zM899 530h1V552h-1zM901 581h1V584h-1zM902 522h1V530h-1zM902 530h1V552h-1zM902 552h1V556h-1zM902 569h1V581h-1zM902 581h1V584h-1zM904 530h1V552h-1zM906 581h1V584h-1zM907 581h1V584h-1zM908 569h1V581h-1zM908 581h1V584h-1zM909 522h1V530h-1zM911 581h1V584h-1zM913 530h1V552h-1zM915 530h1V552h-1zM916 556h1V569h-1zM916 581h1V584h-1zM917 581h1V584h-1zM918 552h1V556h-1zM920 581h1V584h-1zM921 530h1V552h-1zM921 581h1V584h-1zM922 584h1V605h-1zM925 530h1V552h-1zM925 584h1V605h-1zM928 552h1V556h-1zM928 556h1V569h-1zM929 530h1V552h-1zM929 584h1V605h-1zM932 556h1V569h-1zM932 569h1V581h-1zM933 581h1V584h-1zM934 556h1V569h-1zM934 569h1V581h-1zM934 581h1V584h-1zM936 530h1V552h-1zM938 581h1V584h-1zM939 530h1V552h-1zM942 584h1V605h-1zM943 581h1V584h-1zM944 530h1V552h-1zM945 584h1V605h-1zM948 552h1V556h-1zM950 530h1V552h-1zM950 552h1V556h-1zM954 530h1V552h-1zM955 581h1V584h-1zM956 581h1V584h-1zM960 581h1V584h-1zM961 569h1V581h-1zM961 584h1V605h-1zM962 569h1V581h-1zM971 584h1V605h-1zM974 530h1V552h-1zM974 552h1V556h-1zM974 584h1V605h-1zM975 584h1V605h-1zM977 530h1V552h-1zM979 584h1V605h-1zM981 569h1V581h-1zM984 581h1V584h-1zM985 569h1V581h-1zM989 569h1V581h-1zM992 581h1V584h-1zM994 530h1V552h-1zM994 569h1V581h-1zM995 584h1V605h-1zM997 556h1V569h-1zM998 522h1V530h-1zM998 556h1V569h-1zM1000 581h1V584h-1zM1000 584h1V605h-1zM1001 556h1V569h-1zM1001 584h1V605h-1zM1004 556h1V569h-1zM1005 569h1V581h-1zM1009 522h1V530h-1zM1011 584h1V605h-1zM1013 530h1V552h-1zM1014 556h1V569h-1zM1014 584h1V605h-1zM1015 552h1V556h-1zM1016 584h1V605h-1zM1022 584h1V605h-1zM1023 556h1V569h-1zM1026 584h1V605h-1zM1027 581h1V584h-1zM1027 584h1V605h-1zM1028 530h1V552h-1zM1028 552h1V556h-1zM1028 581h1V584h-1zM1030 522h1V530h-1zM1030 569h1V581h-1zM1031 530h1V552h-1zM1032 584h1V605h-1zM1033 584h1V605h-1zM1034 569h1V581h-1zM1035 556h1V569h-1zM1035 584h1V605h-1zM1038 569h1V581h-1zM1038 581h1V584h-1zM1041 530h1V552h-1zM1041 569h1V581h-1zM1042 569h1V581h-1zM1043 530h1V552h-1zM1043 552h1V556h-1zM1045 530h1V552h-1zM1046 530h1V552h-1zM1046 552h1V556h-1zM1046 584h1V605h-1zM1048 552h1V556h-1zM1051 581h1V584h-1zM1052 530h1V552h-1zM1054 530h1V552h-1zM1054 556h1V569h-1zM1055 522h1V530h-1zM1057 552h1V556h-1zM1058 522h1V530h-1zM1060 556h1V569h-1zM1061 584h1V605h-1zM1062 530h1V552h-1zM1063 530h1V552h-1zM1063 581h1V584h-1zM1063 584h1V605h-1zM1064 552h1V556h-1zM1066 556h1V569h-1zM1067 552h1V556h-1zM1068 552h1V556h-1zM1069 552h1V556h-1zM1076 556h1V569h-1zM1078 552h1V556h-1zM1079 530h1V552h-1zM1079 552h1V556h-1zM1080 556h1V569h-1zM1080 569h1V581h-1z"/>
<path fill="#000" shape-rendering="crispEdges" d="M95 513h1V581h-1zM95 584h1V619h-1zM96 513h1V522h-1zM96 584h1V605h-1zM97 513h1V530h-1zM97 556h1V584h-1zM98 513h1V530h-1zM98 581h1V584h-1zM99 513h1V556h-1zM99 581h1V584h-1zM100 513h1V530h-1zM100 556h1V691h-1zM101 513h1V522h-1zM101 556h1V569h-1zM101 584h1V679h-1zM102 513h1V530h-1zM102 552h1V581h-1zM103 513h1V530h-1zM103 552h1V647h-1zM104 513h1V569h-1zM104 584h1V647h-1zM105 513h1V581h-1zM105 584h1V647h-1zM106 513h1V605h-1zM106 619h1V631h-1zM107 513h1V584h-1zM108 513h1V664h-1zM109 513h1V631h-1zM110 513h1V556h-1zM110 569h1V619h-1zM111 513h1V530h-1zM111 556h1V569h-1zM111 584h1V647h-1zM112 513h1V679h-1zM113 513h1V556h-1zM113 569h1V664h-1zM114 513h1V530h-1zM114 581h1V619h-1zM115 513h1V530h-1zM115 584h1V619h-1zM116 513h1V530h-1zM116 556h1V569h-1zM116 584h1V605h-1zM116 664h1V679h-1zM117 513h1V530h-1zM117 556h1V569h-1zM117 584h1V619h-1zM118 513h1V556h-1zM118 569h1V605h-1zM118 679h1V691h-1zM119 513h1V552h-1zM119 556h1V605h-1zM120 513h1V691h-1zM121 513h1V552h-1zM121 556h1V581h-1zM121 584h1V605h-1zM122 513h1V522h-1zM122 530h1V552h-1zM123 513h1V522h-1zM123 530h1V552h-1zM123 584h1V691h-1zM124 513h1V584h-1zM125 513h1V530h-1zM125 556h1V584h-1zM126 513h1V522h-1zM126 530h1V584h-1zM127 513h1V556h-1zM127 569h1V581h-1zM128 513h1V584h-1zM129 513h1V556h-1zM129 584h1V631h-1zM130 513h1V552h-1zM130 569h1V605h-1zM131 513h1V605h-1zM132 513h1V522h-1zM132 552h1V569h-1zM133 513h1V522h-1zM133 530h1V691h-1zM134 522h1V581h-1zM135 513h1V581h-1zM135 584h1V605h-1zM136 513h1V530h-1zM136 569h1V584h-1zM136 664h1V679h-1zM137 513h1V664h-1zM138 513h1V556h-1zM138 584h1V664h-1zM139 513h1V552h-1zM139 569h1V647h-1zM139 664h1V679h-1zM140 513h1V552h-1zM140 556h1V619h-1zM141 513h1V581h-1zM142 513h1V530h-1zM142 569h1V584h-1zM142 664h1V679h-1zM143 513h1V530h-1zM143 552h1V647h-1zM144 513h1V581h-1zM144 584h1V647h-1zM145 513h1V581h-1zM145 584h1V647h-1zM146 513h1V530h-1zM146 552h1V664h-1zM147 513h1V552h-1zM147 584h1V664h-1zM148 513h1V556h-1zM148 581h1V584h-1zM149 513h1V556h-1zM150 513h1V522h-1zM150 530h1V552h-1zM150 569h1V581h-1zM150 584h1V664h-1zM151 513h1V552h-1zM151 556h1V664h-1zM152 513h1V530h-1zM152 552h1V556h-1zM152 581h1V664h-1zM153 513h1V530h-1zM154 513h1V552h-1zM154 679h1V691h-1zM155 513h1V552h-1zM155 569h1V691h-1zM156 513h1V522h-1zM156 552h1V605h-1zM157 513h1V530h-1zM157 569h1V584h-1zM158 513h1V552h-1zM158 605h1V619h-1zM159 513h1V530h-1zM159 569h1V691h-1zM160 513h1V556h-1zM160 569h1V581h-1zM160 584h1V605h-1zM161 513h1V569h-1zM162 513h1V584h-1zM162 647h1V664h-1zM163 513h1V522h-1zM163 581h1V631h-1zM164 513h1V581h-1zM165 513h1V556h-1zM165 569h1V581h-1zM165 584h1V664h-1zM166 513h1V522h-1zM166 552h1V556h-1zM166 584h1V691h-1zM167 513h1V530h-1zM167 552h1V556h-1zM167 584h1V647h-1zM168 513h1V584h-1zM169 513h1V522h-1zM169 552h1V569h-1zM169 584h1V691h-1zM170 513h1V522h-1zM170 552h1V569h-1zM170 581h1V679h-1zM171 513h1V522h-1zM171 552h1V569h-1zM171 581h1V679h-1zM172 530h1V552h-1zM172 569h1V605h-1zM173 513h1V552h-1zM173 556h1V581h-1zM173 584h1V647h-1zM174 522h1V581h-1zM175 522h1V581h-1zM176 513h1V530h-1zM176 552h1V584h-1zM177 513h1V552h-1zM177 556h1V581h-1zM177 584h1V605h-1zM178 513h1V552h-1zM178 581h1V584h-1zM179 513h1V552h-1zM179 569h1V584h-1zM180 513h1V556h-1zM180 569h1V581h-1zM181 513h1V522h-1zM181 530h1V552h-1zM181 581h1V631h-1zM182 513h1V691h-1zM183 513h1V556h-1zM183 584h1V647h-1zM184 513h1V530h-1zM184 552h1V581h-1zM184 631h1V647h-1zM185 513h1V530h-1zM185 584h1V605h-1zM186 513h1V522h-1zM186 552h1V581h-1zM187 513h1V552h-1zM187 556h1V569h-1zM187 584h1V605h-1zM188 513h1V584h-1zM189 513h1V530h-1zM189 552h1V556h-1zM189 569h1V664h-1zM190 513h1V530h-1zM190 552h1V605h-1zM191 513h1V556h-1zM191 569h1V605h-1zM192 513h1V631h-1zM193 513h1V679h-1zM194 513h1V522h-1zM194 552h1V556h-1zM194 569h1V584h-1zM195 513h1V556h-1zM196 513h1V530h-1zM196 552h1V581h-1zM197 513h1V522h-1zM197 530h1V552h-1zM197 569h1V679h-1zM198 513h1V530h-1zM198 552h1V581h-1zM198 584h1V631h-1zM199 513h1V522h-1zM199 552h1V584h-1zM199 619h1V631h-1zM199 679h1V691h-1zM200 513h1V522h-1zM200 552h1V584h-1zM200 679h1V691h-1zM201 513h1V522h-1zM201 556h1V581h-1zM202 513h1V552h-1zM202 556h1V584h-1zM202 664h1V679h-1zM203 513h1V530h-1zM203 552h1V569h-1zM203 584h1V679h-1zM204 513h1V522h-1zM204 584h1V679h-1zM205 513h1V522h-1zM205 584h1V664h-1zM206 513h1V556h-1zM206 569h1V664h-1zM207 513h1V556h-1zM207 584h1V664h-1zM208 513h1V581h-1zM208 584h1V679h-1zM209 513h1V552h-1zM209 556h1V569h-1zM209 581h1V584h-1zM210 513h1V552h-1zM210 556h1V569h-1zM210 581h1V584h-1zM211 513h1V569h-1zM211 581h1V584h-1zM211 605h1V619h-1zM212 513h1V569h-1zM212 581h1V584h-1zM213 513h1V552h-1zM213 569h1V584h-1zM214 513h1V530h-1zM214 584h1V691h-1zM215 513h1V691h-1zM216 513h1V552h-1zM216 556h1V569h-1zM216 584h1V631h-1zM217 513h1V522h-1zM217 556h1V581h-1zM217 584h1V631h-1zM218 513h1V522h-1zM218 530h1V581h-1zM219 513h1V691h-1zM220 513h1V647h-1zM221 513h1V522h-1zM221 552h1V556h-1zM221 569h1V581h-1zM221 584h1V691h-1zM222 513h1V584h-1zM223 513h1V530h-1zM223 552h1V569h-1zM223 581h1V631h-1zM224 513h1V552h-1zM224 569h1V581h-1zM224 584h1V691h-1zM225 513h1V552h-1zM225 569h1V581h-1zM225 664h1V679h-1zM226 513h1V556h-1zM226 581h1V584h-1zM227 513h1V530h-1zM227 552h1V581h-1zM227 679h1V691h-1zM228 513h1V530h-1zM229 513h1V530h-1zM229 552h1V581h-1zM229 584h1V679h-1zM230 513h1V569h-1zM230 584h1V631h-1zM231 513h1V631h-1zM232 513h1V552h-1zM232 569h1V631h-1zM233 513h1V569h-1zM233 581h1V647h-1zM234 513h1V552h-1zM234 569h1V647h-1zM235 513h1V530h-1zM235 584h1V647h-1zM236 513h1V530h-1zM236 552h1V556h-1zM236 584h1V647h-1zM237 513h1V522h-1zM237 530h1V569h-1zM238 513h1V556h-1zM238 581h1V664h-1zM239 513h1V569h-1zM239 581h1V691h-1zM240 513h1V691h-1zM241 513h1V605h-1zM242 513h1V530h-1zM242 552h1V556h-1zM242 569h1V631h-1zM243 513h1V605h-1zM243 679h1V691h-1zM244 513h1V522h-1zM244 556h1V605h-1zM244 631h1V647h-1zM244 664h1V679h-1zM245 513h1V664h-1zM246 513h1V552h-1zM246 569h1V664h-1zM247 513h1V556h-1zM248 513h1V552h-1zM248 556h1V581h-1zM248 584h1V605h-1zM249 513h1V569h-1zM250 513h1V569h-1zM250 581h1V584h-1zM251 513h1V569h-1zM252 513h1V552h-1zM252 556h1V581h-1zM252 631h1V647h-1zM253 513h1V552h-1zM253 556h1V581h-1zM254 513h1V581h-1zM255 513h1V619h-1zM256 513h1V552h-1zM256 556h1V584h-1zM257 513h1V556h-1zM257 647h1V664h-1zM258 513h1V530h-1zM258 569h1V619h-1zM259 513h1V530h-1zM259 569h1V619h-1zM260 513h1V530h-1zM260 569h1V664h-1zM261 513h1V522h-1zM261 530h1V581h-1zM261 584h1V664h-1zM262 513h1V552h-1zM262 569h1V605h-1zM263 513h1V552h-1zM263 581h1V605h-1zM264 513h1V552h-1zM264 584h1V691h-1zM265 513h1V552h-1zM266 513h1V530h-1zM266 569h1V584h-1zM267 513h1V569h-1zM267 581h1V679h-1zM268 513h1V584h-1zM269 513h1V552h-1zM269 556h1V605h-1zM270 513h1V552h-1zM270 556h1V647h-1zM271 513h1V581h-1zM271 584h1V605h-1zM272 513h1V530h-1zM272 556h1V584h-1zM273 513h1V552h-1zM273 556h1V581h-1zM273 584h1V605h-1zM274 513h1V552h-1zM274 556h1V581h-1zM274 664h1V679h-1zM275 513h1V530h-1zM275 552h1V605h-1zM276 513h1V530h-1zM276 552h1V605h-1zM277 513h1V530h-1zM277 556h1V581h-1zM278 513h1V530h-1zM278 556h1V581h-1zM279 513h1V530h-1zM279 569h1V581h-1zM279 584h1V605h-1zM280 513h1V530h-1zM280 556h1V584h-1zM280 631h1V647h-1zM281 513h1V530h-1zM281 556h1V691h-1zM282 513h1V530h-1zM282 556h1V647h-1zM283 513h1V556h-1zM283 569h1V584h-1zM284 513h1V581h-1zM284 664h1V691h-1zM285 513h1V530h-1zM285 552h1V581h-1zM285 584h1V647h-1zM286 513h1V530h-1zM286 552h1V581h-1zM287 513h1V556h-1zM287 584h1V679h-1zM288 513h1V530h-1zM288 556h1V581h-1zM288 584h1V619h-1zM289 513h1V530h-1zM289 556h1V569h-1zM289 581h1V691h-1zM290 513h1V556h-1zM290 569h1V619h-1zM290 679h1V691h-1zM291 513h1V569h-1zM291 581h1V605h-1zM292 522h1V581h-1zM292 584h1V605h-1zM293 513h1V530h-1zM293 581h1V647h-1zM294 513h1V530h-1zM294 552h1V631h-1zM295 513h1V530h-1zM295 552h1V631h-1zM295 664h1V679h-1zM296 513h1V569h-1zM297 513h1V556h-1zM297 581h1V605h-1zM298 513h1V530h-1zM298 584h1V691h-1zM299 513h1V522h-1zM299 530h1V584h-1zM299 619h1V631h-1zM300 513h1V522h-1zM300 569h1V584h-1zM300 647h1V664h-1zM301 513h1V556h-1zM301 584h1V631h-1zM302 513h1V530h-1zM302 552h1V556h-1zM302 569h1V605h-1zM303 513h1V530h-1zM303 552h1V584h-1zM304 513h1V530h-1zM304 569h1V581h-1zM305 513h1V569h-1zM305 647h1V664h-1zM306 513h1V530h-1zM306 552h1V556h-1zM307 522h1V530h-1zM307 569h1V584h-1zM308 513h1V522h-1zM308 584h1V605h-1zM309 513h1V530h-1zM309 552h1V631h-1zM310 513h1V569h-1zM310 584h1V631h-1zM311 513h1V530h-1zM311 584h1V647h-1zM312 513h1V581h-1zM312 584h1V691h-1zM313 513h1V530h-1zM313 556h1V581h-1zM313 584h1V631h-1zM314 513h1V530h-1zM314 556h1V581h-1zM314 584h1V647h-1zM315 513h1V556h-1zM315 569h1V581h-1zM315 584h1V647h-1zM316 513h1V522h-1zM316 530h1V569h-1zM316 581h1V647h-1zM317 513h1V522h-1zM317 530h1V569h-1zM317 581h1V691h-1zM318 513h1V522h-1zM318 530h1V569h-1zM318 581h1V664h-1zM319 513h1V556h-1zM319 569h1V584h-1zM320 513h1V556h-1zM320 569h1V664h-1zM321 513h1V530h-1zM321 581h1V631h-1zM322 513h1V664h-1zM323 513h1V584h-1zM323 631h1V647h-1zM324 513h1V530h-1zM324 569h1V619h-1zM325 513h1V522h-1zM325 530h1V552h-1zM325 556h1V584h-1zM326 513h1V530h-1zM326 552h1V556h-1zM326 569h1V584h-1zM327 513h1V569h-1zM327 584h1V631h-1zM328 513h1V569h-1zM328 584h1V664h-1zM329 513h1V664h-1zM330 513h1V530h-1zM330 556h1V647h-1zM331 513h1V530h-1zM331 552h1V569h-1zM331 584h1V605h-1zM332 513h1V530h-1zM332 569h1V619h-1zM333 513h1V522h-1zM333 530h1V581h-1zM333 584h1V619h-1zM334 513h1V522h-1zM334 530h1V584h-1zM335 513h1V530h-1zM335 556h1V584h-1zM336 513h1V530h-1zM336 556h1V631h-1zM337 513h1V556h-1zM337 569h1V584h-1zM338 513h1V530h-1zM338 556h1V584h-1zM338 679h1V691h-1zM339 513h1V530h-1zM339 581h1V664h-1zM340 513h1V530h-1zM340 552h1V569h-1zM340 584h1V664h-1zM341 513h1V569h-1zM341 605h1V619h-1zM342 513h1V530h-1zM342 552h1V556h-1zM342 569h1V584h-1zM343 513h1V522h-1zM343 530h1V584h-1zM344 513h1V522h-1zM344 569h1V584h-1zM345 513h1V530h-1zM345 552h1V647h-1zM346 513h1V552h-1zM346 581h1V664h-1zM347 513h1V530h-1zM347 569h1V691h-1zM348 513h1V552h-1zM348 569h1V664h-1zM349 513h1V581h-1zM350 513h1V530h-1zM350 556h1V584h-1zM350 619h1V631h-1zM351 513h1V556h-1zM351 581h1V619h-1zM352 513h1V556h-1zM352 584h1V664h-1zM353 513h1V530h-1zM353 552h1V569h-1zM353 581h1V584h-1zM354 513h1V522h-1zM354 530h1V552h-1zM354 556h1V605h-1zM354 664h1V679h-1zM355 513h1V569h-1zM355 584h1V619h-1zM356 513h1V647h-1zM357 513h1V584h-1zM358 513h1V522h-1zM358 556h1V664h-1zM359 513h1V552h-1zM359 581h1V647h-1zM360 513h1V581h-1zM360 584h1V679h-1zM361 513h1V556h-1zM361 569h1V664h-1zM362 513h1V556h-1zM362 569h1V581h-1zM363 513h1V556h-1zM363 569h1V631h-1zM364 513h1V631h-1zM365 513h1V522h-1zM365 530h1V552h-1zM365 556h1V691h-1zM366 513h1V584h-1zM367 513h1V552h-1zM367 556h1V584h-1zM368 513h1V556h-1zM368 569h1V581h-1zM369 522h1V530h-1zM369 552h1V584h-1zM370 513h1V530h-1zM370 581h1V584h-1zM370 631h1V647h-1zM371 513h1V552h-1zM371 556h1V691h-1zM372 513h1V631h-1zM373 513h1V691h-1zM374 513h1V584h-1zM375 513h1V647h-1zM376 513h1V552h-1zM376 569h1V581h-1zM376 584h1V664h-1zM377 513h1V522h-1zM377 556h1V664h-1zM378 513h1V556h-1zM378 569h1V605h-1zM379 513h1V556h-1zM379 569h1V619h-1zM380 513h1V552h-1zM380 584h1V605h-1zM381 513h1V679h-1zM382 513h1V552h-1zM382 556h1V664h-1zM383 513h1V552h-1zM383 556h1V581h-1zM383 584h1V691h-1zM384 513h1V552h-1zM384 569h1V647h-1zM385 513h1V530h-1zM385 556h1V647h-1zM386 513h1V581h-1zM386 619h1V631h-1zM386 679h1V691h-1zM387 513h1V530h-1zM387 581h1V584h-1zM388 513h1V647h-1zM389 513h1V522h-1zM389 530h1V581h-1zM389 584h1V605h-1zM389 664h1V691h-1zM390 513h1V619h-1zM390 679h1V691h-1zM391 513h1V569h-1zM391 584h1V619h-1zM391 664h1V679h-1zM392 513h1V691h-1zM393 513h1V556h-1zM393 581h1V647h-1zM393 664h1V679h-1zM394 513h1V556h-1zM394 569h1V581h-1zM394 584h1V691h-1zM395 513h1V569h-1zM395 584h1V679h-1zM396 513h1V581h-1zM396 584h1V679h-1zM397 513h1V522h-1zM397 530h1V556h-1zM397 581h1V691h-1zM398 513h1V530h-1zM398 552h1V556h-1zM398 569h1V691h-1zM399 513h1V530h-1zM399 552h1V556h-1zM399 584h1V631h-1zM399 664h1V679h-1zM400 513h1V581h-1zM400 584h1V664h-1zM401 513h1V581h-1zM401 584h1V647h-1zM402 513h1V522h-1zM402 556h1V569h-1zM402 581h1V691h-1zM403 513h1V522h-1zM403 530h1V569h-1zM403 581h1V647h-1zM403 664h1V679h-1zM404 513h1V522h-1zM404 530h1V569h-1zM404 581h1V691h-1zM405 513h1V556h-1zM405 569h1V581h-1zM405 584h1V605h-1zM406 513h1V552h-1zM406 556h1V581h-1zM406 584h1V691h-1zM407 513h1V569h-1zM407 664h1V679h-1zM408 513h1V584h-1zM408 679h1V691h-1zM409 513h1V552h-1zM409 569h1V584h-1zM410 513h1V530h-1zM410 556h1V581h-1zM410 664h1V679h-1zM411 513h1V619h-1zM412 513h1V530h-1zM412 552h1V569h-1zM412 584h1V631h-1zM412 679h1V691h-1zM413 513h1V530h-1zM413 569h1V584h-1zM413 605h1V619h-1zM414 513h1V530h-1zM414 569h1V584h-1zM415 513h1V556h-1zM415 584h1V647h-1zM416 513h1V530h-1zM416 552h1V631h-1zM417 513h1V569h-1zM417 584h1V679h-1zM418 513h1V530h-1zM418 556h1V691h-1zM419 513h1V556h-1zM419 569h1V619h-1zM419 631h1V647h-1zM420 513h1V530h-1zM420 581h1V584h-1zM420 664h1V691h-1zM421 513h1V530h-1zM421 584h1V679h-1zM422 513h1V530h-1zM422 556h1V631h-1zM423 513h1V584h-1zM424 513h1V569h-1zM425 513h1V679h-1zM426 513h1V556h-1zM426 584h1V679h-1zM427 513h1V530h-1zM427 556h1V569h-1zM427 584h1V664h-1zM427 679h1V691h-1zM428 513h1V552h-1zM428 556h1V581h-1zM428 664h1V679h-1zM429 513h1V530h-1zM429 569h1V647h-1zM430 513h1V552h-1zM430 556h1V569h-1zM430 584h1V647h-1zM430 664h1V679h-1zM431 513h1V522h-1zM431 584h1V664h-1zM432 513h1V522h-1zM432 530h1V556h-1zM432 569h1V619h-1zM433 513h1V552h-1zM433 581h1V584h-1zM433 679h1V691h-1zM434 513h1V581h-1zM435 513h1V569h-1zM435 581h1V691h-1zM436 513h1V569h-1zM436 664h1V691h-1zM437 530h1V569h-1zM437 581h1V584h-1zM438 513h1V522h-1zM438 556h1V581h-1zM439 513h1V522h-1zM439 556h1V581h-1zM439 584h1V647h-1zM440 513h1V581h-1zM440 647h1V679h-1zM441 513h1V581h-1zM441 584h1V619h-1zM442 513h1V522h-1zM442 584h1V605h-1zM442 679h1V691h-1zM443 513h1V581h-1zM443 584h1V605h-1zM443 679h1V691h-1zM444 513h1V679h-1zM445 513h1V691h-1zM446 513h1V584h-1zM446 679h1V691h-1zM447 513h1V522h-1zM447 530h1V691h-1zM448 513h1V556h-1zM448 569h1V619h-1zM448 664h1V679h-1zM449 513h1V522h-1zM449 530h1V556h-1zM449 584h1V679h-1zM450 513h1V522h-1zM450 530h1V556h-1zM450 664h1V691h-1zM451 513h1V530h-1zM451 556h1V647h-1zM452 513h1V530h-1zM452 556h1V584h-1zM453 513h1V530h-1zM453 556h1V647h-1zM453 679h1V691h-1zM454 513h1V556h-1zM454 581h1V691h-1zM455 513h1V522h-1zM455 530h1V581h-1zM455 584h1V691h-1zM456 513h1V631h-1zM456 664h1V679h-1zM457 513h1V522h-1zM457 552h1V556h-1zM457 569h1V664h-1zM458 513h1V679h-1zM459 513h1V619h-1zM460 513h1V530h-1zM460 552h1V581h-1zM461 513h1V530h-1zM461 552h1V581h-1zM461 631h1V647h-1zM461 664h1V679h-1zM462 513h1V522h-1zM462 530h1V581h-1zM462 664h1V679h-1zM463 513h1V556h-1zM463 569h1V584h-1zM464 513h1V569h-1zM464 631h1V647h-1zM464 664h1V679h-1zM465 513h1V530h-1zM465 552h1V581h-1zM465 584h1V605h-1zM465 664h1V679h-1zM466 513h1V647h-1zM467 513h1V664h-1zM468 513h1V552h-1zM468 584h1V691h-1zM469 513h1V552h-1zM470 513h1V530h-1zM470 556h1V605h-1zM470 664h1V679h-1zM471 513h1V552h-1zM471 569h1V679h-1zM472 513h1V581h-1zM472 584h1V691h-1zM473 513h1V584h-1zM473 664h1V679h-1zM474 513h1V556h-1zM474 581h1V691h-1zM475 513h1V552h-1zM475 556h1V584h-1zM475 664h1V679h-1zM476 513h1V530h-1zM476 552h1V556h-1zM476 584h1V691h-1zM477 513h1V664h-1zM478 513h1V530h-1zM478 552h1V556h-1zM478 679h1V691h-1zM479 513h1V552h-1zM479 556h1V569h-1zM479 581h1V619h-1zM479 664h1V679h-1zM480 513h1V584h-1zM480 664h1V679h-1zM481 513h1V584h-1zM481 631h1V647h-1zM481 664h1V679h-1zM482 513h1V530h-1zM482 556h1V569h-1zM482 581h1V584h-1zM483 513h1V522h-1zM483 530h1V647h-1zM484 513h1V522h-1zM484 530h1V584h-1zM484 647h1V679h-1zM485 513h1V556h-1zM485 581h1V664h-1zM485 679h1V691h-1zM486 513h1V691h-1zM487 513h1V631h-1zM487 679h1V691h-1zM488 513h1V584h-1zM488 664h1V679h-1zM489 513h1V569h-1zM490 513h1V552h-1zM490 556h1V679h-1zM491 513h1V556h-1zM491 584h1V631h-1zM492 513h1V530h-1zM492 552h1V556h-1zM492 569h1V584h-1zM493 513h1V647h-1zM493 679h1V691h-1zM494 513h1V522h-1zM494 552h1V569h-1zM494 664h1V679h-1zM495 513h1V584h-1zM495 619h1V631h-1zM496 513h1V581h-1zM496 584h1V605h-1zM497 513h1V530h-1zM497 552h1V556h-1zM497 584h1V691h-1zM498 513h1V530h-1zM498 552h1V556h-1zM498 584h1V619h-1zM498 679h1V691h-1zM499 530h1V631h-1zM500 522h1V581h-1zM500 584h1V631h-1zM500 664h1V679h-1zM501 513h1V569h-1zM501 581h1V691h-1zM502 513h1V552h-1zM502 581h1V691h-1zM503 513h1V552h-1zM503 581h1V664h-1zM503 679h1V691h-1zM504 513h1V581h-1zM504 584h1V647h-1zM504 679h1V691h-1zM505 513h1V556h-1zM505 584h1V619h-1zM506 513h1V522h-1zM506 530h1V556h-1zM506 569h1V584h-1zM506 664h1V679h-1zM507 513h1V552h-1zM507 581h1V691h-1zM508 513h1V552h-1zM508 581h1V691h-1zM509 513h1V530h-1zM509 552h1V584h-1zM509 679h1V691h-1zM510 513h1V691h-1zM511 513h1V552h-1zM511 556h1V605h-1zM511 647h1V664h-1zM512 513h1V552h-1zM512 556h1V647h-1zM512 679h1V691h-1zM513 513h1V530h-1zM513 584h1V679h-1zM514 513h1V530h-1zM515 513h1V530h-1zM515 552h1V679h-1zM516 513h1V691h-1zM517 513h1V647h-1zM517 679h1V691h-1zM518 513h1V605h-1zM519 513h1V556h-1zM519 581h1V584h-1zM519 631h1V647h-1zM519 664h1V679h-1zM520 530h1V552h-1zM520 556h1V664h-1zM520 679h1V691h-1zM521 530h1V552h-1zM521 556h1V605h-1zM522 513h1V522h-1zM522 569h1V581h-1zM522 664h1V679h-1zM523 513h1V522h-1zM523 530h1V581h-1zM524 513h1V530h-1zM524 556h1V581h-1zM524 664h1V679h-1zM525 513h1V530h-1zM525 556h1V581h-1zM526 513h1V584h-1zM526 679h1V691h-1zM527 513h1V691h-1zM528 513h1V679h-1zM529 513h1V552h-1zM529 584h1V691h-1zM530 513h1V584h-1zM531 513h1V556h-1zM531 569h1V584h-1zM532 513h1V552h-1zM532 556h1V569h-1zM533 513h1V552h-1zM533 584h1V605h-1zM534 513h1V552h-1zM534 556h1V619h-1zM535 513h1V552h-1zM535 556h1V584h-1zM536 513h1V556h-1zM536 584h1V691h-1zM537 513h1V556h-1zM537 584h1V647h-1zM538 513h1V530h-1zM538 552h1V647h-1zM538 679h1V691h-1zM539 513h1V552h-1zM539 569h1V581h-1zM539 584h1V664h-1zM539 679h1V691h-1zM540 513h1V522h-1zM540 530h1V691h-1zM541 513h1V522h-1zM541 556h1V581h-1zM541 584h1V619h-1zM542 513h1V530h-1zM542 569h1V631h-1zM542 679h1V691h-1zM543 513h1V530h-1zM543 556h1V569h-1zM543 581h1V664h-1zM544 513h1V522h-1zM544 552h1V691h-1zM545 513h1V556h-1zM545 569h1V691h-1zM546 513h1V581h-1zM546 664h1V679h-1zM547 513h1V552h-1zM547 556h1V581h-1zM547 664h1V679h-1zM548 513h1V530h-1zM548 569h1V584h-1zM548 647h1V664h-1zM548 679h1V691h-1zM549 513h1V530h-1zM549 556h1V647h-1zM550 513h1V530h-1zM550 584h1V647h-1zM551 513h1V552h-1zM551 581h1V647h-1zM551 664h1V679h-1zM552 513h1V569h-1zM552 581h1V691h-1zM553 513h1V556h-1zM553 584h1V631h-1zM554 513h1V522h-1zM554 552h1V556h-1zM554 569h1V581h-1zM554 664h1V679h-1zM555 513h1V522h-1zM555 552h1V556h-1zM555 569h1V581h-1zM555 584h1V691h-1zM556 513h1V522h-1zM556 552h1V581h-1zM556 584h1V664h-1zM556 679h1V691h-1zM557 513h1V552h-1zM557 569h1V631h-1zM557 664h1V691h-1zM558 513h1V647h-1zM558 679h1V691h-1zM559 513h1V619h-1zM559 664h1V679h-1zM560 513h1V581h-1zM560 619h1V631h-1zM561 513h1V530h-1zM561 581h1V584h-1zM561 631h1V647h-1zM561 679h1V691h-1zM562 513h1V569h-1zM562 664h1V691h-1zM563 513h1V584h-1zM563 619h1V631h-1zM563 679h1V691h-1zM564 513h1V556h-1zM564 569h1V584h-1zM565 513h1V556h-1zM565 569h1V631h-1zM566 513h1V584h-1zM567 513h1V647h-1zM568 513h1V552h-1zM568 569h1V581h-1zM568 584h1V619h-1zM569 513h1V619h-1zM570 513h1V569h-1zM570 581h1V664h-1zM570 679h1V691h-1zM571 513h1V530h-1zM571 584h1V691h-1zM572 513h1V569h-1zM572 581h1V584h-1zM573 513h1V522h-1zM573 530h1V569h-1zM573 581h1V691h-1zM574 513h1V631h-1zM575 513h1V631h-1zM576 513h1V556h-1zM576 581h1V664h-1zM577 513h1V691h-1zM578 513h1V569h-1zM578 584h1V619h-1zM578 664h1V679h-1zM579 513h1V530h-1zM579 552h1V556h-1zM579 584h1V691h-1zM580 513h1V552h-1zM580 556h1V569h-1zM580 584h1V664h-1zM581 513h1V530h-1zM581 552h1V605h-1zM582 513h1V552h-1zM582 556h1V581h-1zM582 584h1V605h-1zM582 679h1V691h-1zM583 513h1V556h-1zM583 584h1V605h-1zM584 513h1V556h-1zM584 584h1V605h-1zM584 664h1V679h-1zM585 513h1V679h-1zM586 513h1V552h-1zM586 556h1V605h-1zM586 664h1V679h-1zM587 513h1V530h-1zM587 556h1V584h-1zM587 664h1V679h-1zM588 513h1V522h-1zM588 530h1V552h-1zM588 569h1V581h-1zM588 584h1V631h-1zM588 664h1V679h-1zM589 522h1V530h-1zM589 569h1V581h-1zM589 584h1V647h-1zM590 513h1V530h-1zM590 556h1V584h-1zM591 513h1V530h-1zM591 556h1V569h-1zM591 584h1V691h-1zM592 513h1V530h-1zM592 584h1V691h-1zM593 513h1V631h-1zM594 513h1V522h-1zM594 530h1V552h-1zM594 556h1V569h-1zM594 584h1V619h-1zM594 664h1V679h-1zM595 513h1V530h-1zM595 556h1V569h-1zM595 581h1V631h-1zM596 513h1V530h-1zM596 556h1V569h-1zM596 581h1V631h-1zM597 513h1V552h-1zM597 569h1V691h-1zM598 513h1V556h-1zM598 569h1V619h-1zM599 513h1V552h-1zM599 556h1V631h-1zM599 664h1V691h-1zM600 513h1V522h-1zM600 556h1V631h-1zM601 513h1V631h-1zM602 513h1V619h-1zM603 513h1V552h-1zM603 556h1V569h-1zM603 619h1V631h-1zM604 513h1V584h-1zM605 513h1V556h-1zM605 584h1V691h-1zM606 513h1V556h-1zM606 581h1V691h-1zM607 513h1V556h-1zM607 581h1V631h-1zM608 513h1V530h-1zM608 584h1V631h-1zM609 513h1V556h-1zM609 569h1V581h-1zM609 584h1V619h-1zM610 513h1V647h-1zM611 513h1V691h-1zM612 513h1V569h-1zM612 581h1V691h-1zM613 513h1V552h-1zM613 584h1V691h-1zM614 513h1V581h-1zM614 605h1V619h-1zM615 513h1V569h-1zM615 584h1V605h-1zM616 513h1V530h-1zM616 552h1V581h-1zM616 584h1V691h-1zM617 513h1V556h-1zM617 569h1V581h-1zM618 513h1V569h-1zM618 581h1V584h-1zM619 513h1V664h-1zM620 513h1V552h-1zM620 569h1V584h-1zM621 513h1V530h-1zM621 552h1V584h-1zM621 619h1V631h-1zM622 513h1V522h-1zM622 556h1V584h-1zM623 513h1V530h-1zM623 584h1V605h-1zM624 513h1V530h-1zM624 552h1V647h-1zM625 513h1V552h-1zM625 581h1V691h-1zM626 513h1V556h-1zM626 581h1V664h-1zM627 513h1V556h-1zM627 581h1V605h-1zM628 513h1V530h-1zM628 552h1V556h-1zM628 569h1V691h-1zM629 522h1V552h-1zM629 556h1V691h-1zM630 513h1V530h-1zM630 552h1V581h-1zM631 513h1V552h-1zM631 584h1V691h-1zM632 513h1V556h-1zM632 569h1V631h-1zM633 513h1V556h-1zM633 569h1V664h-1zM633 679h1V691h-1zM634 513h1V530h-1zM634 552h1V556h-1zM634 569h1V691h-1zM635 569h1V584h-1zM635 631h1V647h-1zM636 513h1V522h-1zM636 552h1V569h-1zM636 581h1V584h-1zM636 605h1V619h-1zM636 679h1V691h-1zM637 513h1V552h-1zM637 556h1V584h-1zM637 647h1V664h-1zM638 513h1V556h-1zM638 569h1V581h-1zM638 584h1V691h-1zM639 513h1V581h-1zM640 513h1V556h-1zM640 569h1V584h-1zM640 619h1V631h-1zM641 513h1V584h-1zM642 513h1V581h-1zM643 513h1V556h-1zM643 569h1V584h-1zM643 664h1V679h-1zM644 513h1V584h-1zM645 513h1V530h-1zM645 552h1V679h-1zM646 513h1V584h-1zM647 513h1V584h-1zM647 679h1V691h-1zM648 513h1V552h-1zM648 556h1V664h-1zM649 513h1V569h-1zM649 581h1V679h-1zM650 513h1V552h-1zM650 581h1V584h-1zM651 513h1V530h-1zM651 552h1V569h-1zM651 584h1V691h-1zM652 513h1V556h-1zM652 569h1V691h-1zM653 513h1V530h-1zM653 552h1V556h-1zM653 581h1V691h-1zM654 513h1V530h-1zM654 552h1V691h-1zM655 513h1V530h-1zM655 552h1V556h-1zM655 584h1V679h-1zM656 513h1V530h-1zM656 552h1V581h-1zM656 584h1V679h-1zM657 513h1V552h-1zM657 556h1V581h-1zM657 584h1V664h-1zM658 513h1V552h-1zM658 556h1V664h-1zM659 513h1V581h-1zM660 513h1V619h-1zM661 513h1V530h-1zM661 552h1V647h-1zM662 513h1V581h-1zM663 513h1V569h-1zM663 584h1V691h-1zM664 513h1V530h-1zM664 552h1V664h-1zM665 513h1V530h-1zM665 556h1V584h-1zM666 513h1V522h-1zM666 552h1V556h-1zM666 581h1V664h-1zM667 513h1V552h-1zM667 556h1V691h-1zM668 513h1V552h-1zM668 556h1V691h-1zM669 513h1V552h-1zM669 556h1V605h-1zM670 513h1V556h-1zM670 569h1V584h-1zM671 513h1V556h-1zM671 569h1V647h-1zM672 513h1V530h-1zM672 552h1V581h-1zM672 584h1V647h-1zM673 513h1V647h-1zM674 513h1V664h-1zM675 513h1V691h-1zM676 522h1V556h-1zM676 569h1V631h-1zM677 513h1V631h-1zM678 513h1V581h-1zM678 584h1V664h-1zM679 513h1V556h-1zM679 584h1V619h-1zM679 631h1V647h-1zM680 513h1V619h-1zM681 513h1V581h-1zM682 513h1V530h-1zM682 556h1V631h-1zM683 513h1V530h-1zM683 584h1V679h-1zM684 513h1V584h-1zM684 605h1V619h-1zM685 513h1V584h-1zM686 513h1V522h-1zM686 530h1V569h-1zM686 581h1V691h-1zM687 513h1V530h-1zM687 552h1V569h-1zM687 584h1V605h-1zM688 513h1V631h-1zM689 513h1V679h-1zM690 513h1V631h-1zM691 513h1V556h-1zM691 581h1V691h-1zM692 513h1V530h-1zM692 552h1V556h-1zM692 569h1V691h-1zM693 513h1V522h-1zM693 530h1V581h-1zM693 584h1V691h-1zM694 513h1V522h-1zM694 530h1V581h-1zM694 584h1V691h-1zM695 513h1V530h-1zM695 552h1V584h-1zM696 513h1V552h-1zM696 556h1V581h-1zM697 513h1V552h-1zM697 556h1V581h-1zM697 584h1V619h-1zM698 513h1V522h-1zM698 552h1V556h-1zM699 513h1V581h-1zM699 584h1V647h-1zM700 513h1V581h-1zM701 513h1V664h-1zM702 513h1V581h-1zM702 584h1V605h-1zM703 513h1V530h-1zM703 552h1V605h-1zM704 513h1V530h-1zM704 569h1V584h-1zM705 513h1V556h-1zM705 581h1V584h-1zM705 605h1V619h-1zM706 513h1V522h-1zM706 552h1V581h-1zM707 513h1V556h-1zM708 513h1V552h-1zM708 556h1V569h-1zM708 581h1V679h-1zM709 513h1V530h-1zM709 584h1V605h-1zM710 513h1V552h-1zM710 556h1V691h-1zM711 513h1V552h-1zM711 556h1V619h-1zM712 513h1V556h-1zM712 569h1V581h-1zM712 584h1V619h-1zM713 513h1V556h-1zM713 569h1V581h-1zM713 584h1V647h-1zM713 679h1V691h-1zM714 513h1V530h-1zM714 569h1V679h-1zM715 513h1V552h-1zM715 556h1V664h-1zM716 513h1V581h-1zM716 584h1V647h-1zM717 513h1V552h-1zM717 569h1V584h-1zM718 513h1V569h-1zM718 581h1V584h-1zM719 513h1V556h-1zM719 569h1V691h-1zM720 513h1V569h-1zM720 581h1V647h-1zM721 513h1V522h-1zM721 552h1V581h-1zM721 584h1V664h-1zM722 513h1V631h-1zM723 513h1V522h-1zM723 556h1V569h-1zM723 584h1V619h-1zM724 513h1V530h-1zM724 552h1V556h-1zM724 584h1V619h-1zM725 513h1V556h-1zM725 569h1V664h-1zM726 513h1V569h-1zM726 584h1V664h-1zM727 513h1V581h-1zM728 513h1V605h-1zM729 513h1V556h-1zM729 581h1V584h-1zM730 513h1V530h-1zM730 552h1V584h-1zM731 513h1V556h-1zM732 513h1V552h-1zM732 556h1V569h-1zM732 647h1V664h-1zM733 513h1V552h-1zM733 556h1V569h-1zM733 584h1V647h-1zM734 513h1V647h-1zM734 664h1V691h-1zM735 513h1V530h-1zM735 552h1V556h-1zM735 569h1V647h-1zM736 513h1V530h-1zM736 552h1V556h-1zM736 569h1V584h-1zM736 679h1V691h-1zM737 513h1V522h-1zM737 556h1V605h-1zM738 513h1V522h-1zM738 556h1V691h-1zM739 513h1V584h-1zM740 513h1V556h-1zM740 569h1V647h-1zM741 513h1V584h-1zM742 513h1V584h-1zM742 647h1V664h-1zM743 513h1V556h-1zM743 584h1V605h-1zM744 513h1V556h-1zM745 513h1V556h-1zM746 513h1V552h-1zM746 556h1V605h-1zM746 679h1V691h-1zM747 513h1V581h-1zM747 584h1V691h-1zM748 513h1V581h-1zM748 619h1V631h-1zM749 513h1V581h-1zM750 513h1V581h-1zM750 584h1V647h-1zM751 513h1V647h-1zM751 664h1V679h-1zM752 513h1V569h-1zM752 584h1V647h-1zM753 513h1V522h-1zM753 552h1V581h-1zM753 584h1V647h-1zM754 513h1V569h-1zM754 584h1V647h-1zM755 513h1V584h-1zM756 513h1V647h-1zM757 513h1V552h-1zM757 556h1V584h-1zM757 647h1V664h-1zM757 679h1V691h-1zM758 513h1V522h-1zM758 530h1V584h-1zM759 513h1V581h-1zM759 584h1V631h-1zM760 513h1V552h-1zM760 584h1V679h-1zM761 513h1V581h-1zM761 584h1V679h-1zM762 513h1V581h-1zM762 584h1V679h-1zM763 513h1V522h-1zM763 552h1V556h-1zM763 569h1V605h-1zM763 664h1V679h-1zM764 513h1V552h-1zM764 569h1V605h-1zM765 513h1V552h-1zM765 569h1V584h-1zM765 664h1V679h-1zM766 513h1V530h-1zM766 556h1V581h-1zM766 584h1V619h-1zM767 513h1V530h-1zM767 569h1V584h-1zM768 513h1V619h-1zM769 513h1V530h-1zM769 552h1V556h-1zM769 569h1V679h-1zM770 513h1V584h-1zM771 513h1V522h-1zM771 552h1V556h-1zM772 513h1V581h-1zM772 605h1V619h-1zM773 513h1V522h-1zM773 556h1V569h-1zM773 581h1V647h-1zM774 513h1V530h-1zM774 552h1V584h-1zM775 513h1V530h-1zM775 552h1V584h-1zM775 619h1V631h-1zM776 513h1V556h-1zM776 569h1V581h-1zM776 584h1V664h-1zM777 513h1V556h-1zM777 569h1V581h-1zM777 584h1V664h-1zM778 513h1V556h-1zM778 581h1V664h-1zM779 513h1V556h-1zM779 569h1V581h-1zM779 584h1V647h-1zM780 513h1V522h-1zM780 552h1V584h-1zM781 513h1V522h-1zM781 530h1V605h-1zM782 513h1V552h-1zM782 556h1V569h-1zM782 581h1V605h-1zM783 513h1V552h-1zM783 556h1V569h-1zM783 581h1V631h-1zM784 513h1V552h-1zM784 556h1V569h-1zM784 581h1V631h-1zM785 513h1V530h-1zM785 556h1V569h-1zM785 581h1V631h-1zM786 513h1V530h-1zM786 569h1V581h-1zM786 584h1V631h-1zM787 513h1V556h-1zM787 584h1V631h-1zM788 513h1V530h-1zM788 552h1V619h-1zM789 513h1V530h-1zM789 552h1V581h-1zM789 584h1V631h-1zM790 513h1V522h-1zM790 530h1V556h-1zM790 569h1V584h-1zM790 647h1V664h-1zM791 513h1V619h-1zM791 664h1V679h-1zM792 513h1V619h-1zM793 513h1V552h-1zM793 556h1V581h-1zM793 584h1V619h-1zM793 664h1V679h-1zM794 513h1V619h-1zM794 631h1V647h-1zM795 513h1V619h-1zM796 513h1V552h-1zM796 556h1V584h-1zM797 513h1V530h-1zM797 569h1V581h-1zM798 513h1V556h-1zM798 569h1V581h-1zM798 584h1V619h-1zM799 513h1V552h-1zM799 569h1V664h-1zM800 513h1V584h-1zM801 513h1V569h-1zM801 581h1V584h-1zM801 647h1V664h-1zM802 513h1V569h-1zM802 581h1V584h-1zM803 513h1V581h-1zM803 584h1V647h-1zM804 513h1V605h-1zM805 513h1V584h-1zM806 513h1V556h-1zM806 569h1V647h-1zM807 513h1V556h-1zM807 569h1V584h-1zM808 513h1V569h-1zM808 581h1V619h-1zM809 513h1V581h-1zM810 513h1V522h-1zM810 552h1V581h-1zM810 584h1V691h-1zM811 513h1V619h-1zM811 631h1V647h-1zM812 513h1V556h-1zM812 569h1V584h-1zM813 513h1V530h-1zM813 556h1V664h-1zM814 513h1V647h-1zM815 513h1V569h-1zM815 581h1V664h-1zM816 513h1V556h-1zM816 569h1V584h-1zM816 619h1V631h-1zM817 513h1V581h-1zM818 513h1V552h-1zM818 569h1V584h-1zM819 513h1V664h-1zM820 513h1V556h-1zM820 569h1V581h-1zM820 584h1V664h-1zM821 513h1V556h-1zM821 569h1V581h-1zM821 584h1V664h-1zM822 513h1V556h-1zM822 569h1V581h-1zM822 584h1V605h-1zM823 513h1V522h-1zM823 556h1V584h-1zM824 513h1V522h-1zM824 556h1V647h-1zM825 513h1V569h-1zM825 584h1V631h-1zM826 513h1V569h-1zM826 584h1V631h-1zM827 513h1V581h-1zM827 584h1V631h-1zM828 513h1V581h-1zM828 584h1V619h-1zM829 513h1V556h-1zM829 569h1V619h-1zM830 513h1V569h-1zM830 584h1V619h-1zM830 664h1V679h-1zM831 513h1V530h-1zM831 552h1V691h-1zM832 513h1V647h-1zM833 513h1V679h-1zM834 513h1V522h-1zM834 552h1V584h-1zM835 513h1V530h-1zM835 552h1V584h-1zM836 513h1V530h-1zM836 552h1V556h-1zM836 584h1V691h-1zM837 513h1V569h-1zM837 584h1V647h-1zM838 513h1V522h-1zM838 552h1V691h-1zM839 513h1V556h-1zM840 513h1V556h-1zM840 569h1V664h-1zM841 513h1V552h-1zM841 556h1V584h-1zM842 513h1V581h-1zM842 679h1V691h-1zM843 513h1V581h-1zM844 513h1V619h-1zM844 631h1V647h-1zM845 513h1V581h-1zM845 584h1V619h-1zM846 513h1V530h-1zM846 556h1V619h-1zM847 513h1V569h-1zM847 584h1V691h-1zM848 513h1V530h-1zM848 569h1V584h-1zM849 513h1V522h-1zM849 569h1V584h-1zM850 513h1V530h-1zM850 552h1V584h-1zM851 513h1V522h-1zM851 530h1V556h-1zM851 569h1V584h-1zM852 513h1V552h-1zM852 569h1V647h-1zM852 679h1V691h-1zM853 513h1V530h-1zM853 552h1V556h-1zM853 584h1V664h-1zM854 513h1V522h-1zM854 530h1V556h-1zM854 581h1V619h-1zM855 513h1V530h-1zM855 556h1V584h-1zM856 513h1V530h-1zM856 556h1V584h-1zM856 605h1V619h-1zM857 513h1V556h-1zM857 569h1V647h-1zM858 513h1V556h-1zM858 569h1V647h-1zM859 513h1V569h-1zM859 581h1V664h-1zM860 513h1V569h-1zM860 581h1V691h-1zM861 513h1V556h-1zM861 581h1V664h-1zM862 513h1V530h-1zM862 552h1V584h-1zM862 679h1V691h-1zM863 513h1V552h-1zM864 513h1V552h-1zM865 513h1V552h-1zM865 556h1V619h-1zM865 647h1V664h-1zM866 513h1V556h-1zM866 569h1V691h-1zM867 513h1V556h-1zM867 569h1V584h-1zM868 513h1V584h-1zM869 513h1V619h-1zM870 513h1V647h-1zM870 664h1V679h-1zM871 513h1V556h-1zM871 569h1V691h-1zM872 513h1V569h-1zM872 584h1V664h-1zM873 513h1V569h-1zM874 513h1V556h-1zM874 569h1V584h-1zM875 513h1V556h-1zM875 569h1V631h-1zM876 513h1V619h-1zM876 664h1V679h-1zM877 513h1V556h-1zM877 569h1V581h-1zM877 584h1V664h-1zM878 513h1V569h-1zM879 513h1V522h-1zM879 530h1V556h-1zM879 569h1V679h-1zM880 513h1V552h-1zM880 556h1V584h-1zM881 513h1V679h-1zM882 513h1V584h-1zM882 631h1V647h-1zM883 513h1V584h-1zM883 605h1V619h-1zM884 513h1V569h-1zM885 513h1V522h-1zM885 552h1V569h-1zM885 581h1V584h-1zM885 679h1V691h-1zM886 513h1V530h-1zM886 552h1V605h-1zM887 513h1V552h-1zM887 569h1V581h-1zM888 513h1V552h-1zM888 581h1V691h-1zM889 522h1V569h-1zM890 522h1V569h-1zM890 584h1V631h-1zM891 513h1V569h-1zM891 581h1V631h-1zM891 679h1V691h-1zM892 513h1V552h-1zM892 556h1V584h-1zM893 513h1V569h-1zM893 581h1V584h-1zM894 513h1V530h-1zM894 556h1V581h-1zM894 584h1V647h-1zM895 513h1V522h-1zM895 530h1V552h-1zM895 581h1V605h-1zM896 513h1V556h-1zM896 569h1V691h-1zM897 513h1V530h-1zM897 556h1V569h-1zM897 581h1V584h-1zM898 513h1V556h-1zM898 679h1V691h-1zM899 513h1V530h-1zM899 569h1V619h-1zM900 513h1V530h-1zM900 552h1V584h-1zM901 513h1V569h-1zM901 605h1V619h-1zM902 513h1V522h-1zM902 584h1V647h-1zM903 513h1V605h-1zM904 513h1V530h-1zM904 556h1V569h-1zM904 584h1V691h-1zM905 513h1V691h-1zM906 513h1V581h-1zM906 584h1V691h-1zM907 513h1V581h-1zM907 584h1V679h-1zM908 513h1V552h-1zM908 556h1V569h-1zM908 584h1V679h-1zM909 513h1V522h-1zM909 530h1V581h-1zM909 584h1V664h-1zM910 513h1V522h-1zM910 530h1V581h-1zM911 513h1V522h-1zM911 530h1V581h-1zM912 513h1V522h-1zM912 530h1V581h-1zM912 584h1V619h-1zM913 513h1V530h-1zM913 552h1V569h-1zM913 584h1V619h-1zM914 513h1V569h-1zM914 581h1V619h-1zM915 513h1V522h-1zM915 552h1V691h-1zM916 513h1V552h-1zM916 569h1V581h-1zM916 584h1V664h-1zM917 513h1V552h-1zM917 569h1V581h-1zM917 584h1V664h-1zM918 513h1V552h-1zM918 569h1V581h-1zM919 513h1V530h-1zM919 552h1V647h-1zM919 664h1V679h-1zM920 513h1V530h-1zM920 552h1V581h-1zM920 584h1V647h-1zM921 513h1V530h-1zM921 552h1V581h-1zM921 584h1V691h-1zM922 513h1V552h-1zM922 569h1V584h-1zM923 513h1V619h-1zM924 513h1V530h-1zM924 552h1V569h-1zM925 513h1V522h-1zM925 552h1V584h-1zM926 513h1V530h-1zM926 552h1V691h-1zM927 513h1V522h-1zM927 530h1V556h-1zM927 581h1V679h-1zM928 513h1V530h-1zM928 569h1V584h-1zM929 513h1V530h-1zM929 556h1V584h-1zM930 513h1V679h-1zM931 513h1V584h-1zM932 513h1V552h-1zM932 584h1V679h-1zM933 513h1V552h-1zM933 584h1V647h-1zM934 513h1V552h-1zM935 513h1V631h-1zM936 513h1V530h-1zM936 552h1V691h-1zM937 513h1V584h-1zM937 664h1V679h-1zM938 513h1V581h-1zM939 513h1V530h-1zM939 581h1V664h-1zM940 530h1V581h-1zM940 584h1V664h-1zM941 513h1V522h-1zM941 569h1V584h-1zM941 664h1V679h-1zM942 513h1V581h-1zM943 513h1V581h-1zM944 513h1V530h-1zM944 552h1V581h-1zM945 513h1V581h-1zM946 513h1V631h-1zM947 513h1V619h-1zM948 513h1V530h-1zM948 584h1V691h-1zM949 513h1V556h-1zM949 569h1V664h-1zM950 513h1V530h-1zM950 556h1V691h-1zM951 513h1V530h-1zM951 552h1V605h-1zM951 647h1V664h-1zM952 513h1V581h-1zM952 584h1V679h-1zM953 513h1V584h-1zM954 513h1V530h-1zM954 552h1V691h-1zM955 513h1V581h-1zM955 584h1V605h-1zM956 513h1V569h-1zM956 584h1V619h-1zM957 513h1V522h-1zM957 530h1V569h-1zM957 581h1V647h-1zM958 513h1V556h-1zM958 581h1V647h-1zM959 513h1V552h-1zM959 581h1V647h-1zM960 513h1V581h-1zM960 584h1V664h-1zM961 513h1V569h-1zM962 513h1V569h-1zM963 513h1V581h-1zM963 584h1V664h-1zM964 513h1V530h-1zM964 581h1V647h-1zM965 513h1V584h-1zM966 513h1V647h-1zM967 513h1V530h-1zM967 552h1V569h-1zM967 581h1V605h-1zM968 513h1V530h-1zM968 552h1V569h-1zM968 581h1V631h-1zM968 679h1V691h-1zM969 513h1V552h-1zM969 556h1V647h-1zM970 513h1V552h-1zM970 581h1V647h-1zM971 513h1V584h-1zM971 647h1V664h-1zM972 513h1V605h-1zM972 679h1V691h-1zM973 513h1V530h-1zM973 552h1V584h-1zM974 513h1V530h-1zM974 556h1V584h-1zM975 513h1V584h-1zM975 664h1V679h-1zM976 513h1V530h-1zM976 556h1V691h-1zM977 513h1V530h-1zM977 556h1V584h-1zM978 513h1V530h-1zM978 552h1V679h-1zM979 513h1V552h-1zM979 556h1V584h-1zM980 513h1V522h-1zM980 556h1V569h-1zM980 581h1V619h-1zM981 513h1V522h-1zM981 530h1V556h-1zM981 581h1V691h-1zM982 513h1V552h-1zM982 569h1V581h-1zM982 584h1V631h-1zM983 513h1V552h-1zM983 569h1V581h-1zM983 584h1V631h-1zM984 513h1V581h-1zM984 584h1V664h-1zM985 513h1V569h-1zM985 584h1V664h-1zM986 513h1V584h-1zM987 513h1V530h-1zM987 581h1V619h-1zM988 513h1V619h-1zM989 513h1V530h-1zM989 552h1V569h-1zM989 584h1V647h-1zM990 513h1V522h-1zM990 530h1V569h-1zM990 581h1V647h-1zM991 522h1V679h-1zM992 513h1V581h-1zM992 584h1V664h-1zM993 513h1V569h-1zM993 584h1V679h-1zM994 513h1V530h-1zM994 552h1V569h-1zM994 581h1V605h-1zM994 619h1V631h-1zM995 513h1V581h-1zM996 513h1V581h-1zM996 584h1V664h-1zM997 513h1V522h-1zM997 569h1V647h-1zM998 513h1V522h-1zM998 569h1V664h-1zM999 513h1V522h-1zM999 556h1V569h-1zM999 647h1V664h-1zM1000 513h1V556h-1zM1000 569h1V581h-1zM1001 513h1V556h-1zM1001 569h1V581h-1zM1002 513h1V530h-1zM1002 556h1V569h-1zM1002 631h1V647h-1zM1003 513h1V530h-1zM1003 556h1V569h-1zM1004 513h1V552h-1zM1004 569h1V647h-1zM1005 513h1V569h-1zM1005 581h1V691h-1zM1006 513h1V556h-1zM1006 569h1V664h-1zM1007 513h1V664h-1zM1008 513h1V691h-1zM1009 513h1V522h-1zM1009 584h1V605h-1zM1010 513h1V605h-1zM1011 513h1V552h-1zM1011 569h1V581h-1zM1012 513h1V556h-1zM1012 647h1V664h-1zM1013 513h1V530h-1zM1013 569h1V584h-1zM1014 513h1V530h-1zM1014 569h1V584h-1zM1015 513h1V530h-1zM1015 556h1V584h-1zM1016 513h1V556h-1zM1016 569h1V584h-1zM1017 513h1V647h-1zM1018 513h1V552h-1zM1018 581h1V619h-1zM1019 513h1V552h-1zM1019 581h1V619h-1zM1020 513h1V556h-1zM1020 569h1V619h-1zM1021 513h1V556h-1zM1021 569h1V584h-1zM1022 513h1V584h-1zM1022 631h1V647h-1zM1023 513h1V556h-1zM1023 569h1V584h-1zM1024 513h1V556h-1zM1024 581h1V647h-1zM1025 513h1V584h-1zM1026 513h1V584h-1zM1027 513h1V556h-1zM1028 513h1V530h-1zM1028 556h1V581h-1zM1028 584h1V605h-1zM1029 513h1V530h-1zM1029 556h1V581h-1zM1029 584h1V679h-1zM1030 513h1V522h-1zM1030 530h1V569h-1zM1030 584h1V631h-1zM1031 513h1V530h-1zM1031 552h1V584h-1zM1031 647h1V664h-1zM1032 513h1V584h-1zM1033 513h1V584h-1zM1033 605h1V619h-1zM1034 513h1V552h-1zM1034 556h1V569h-1zM1034 581h1V584h-1zM1034 631h1V647h-1zM1035 513h1V556h-1zM1035 569h1V581h-1zM1036 513h1V605h-1zM1037 513h1V569h-1zM1038 513h1V552h-1zM1038 584h1V679h-1zM1039 513h1V679h-1zM1040 513h1V631h-1zM1041 513h1V522h-1zM1041 552h1V556h-1zM1041 581h1V664h-1zM1042 513h1V530h-1zM1042 584h1V605h-1zM1043 513h1V530h-1zM1043 556h1V605h-1zM1044 513h1V530h-1zM1044 556h1V619h-1zM1045 513h1V530h-1zM1045 552h1V556h-1zM1045 569h1V581h-1zM1045 584h1V619h-1zM1046 513h1V530h-1zM1046 556h1V584h-1zM1047 513h1V631h-1zM1048 513h1V552h-1zM1048 569h1V631h-1zM1049 513h1V552h-1zM1049 569h1V631h-1zM1050 513h1V691h-1zM1051 513h1V581h-1zM1051 584h1V605h-1zM1052 513h1V530h-1zM1052 552h1V584h-1zM1052 647h1V664h-1zM1053 513h1V552h-1zM1053 556h1V584h-1zM1054 513h1V530h-1zM1054 569h1V581h-1zM1054 584h1V664h-1zM1055 513h1V522h-1zM1055 552h1V691h-1zM1056 513h1V581h-1zM1056 584h1V619h-1zM1057 513h1V552h-1zM1057 584h1V605h-1zM1057 647h1V664h-1zM1058 513h1V522h-1zM1058 556h1V581h-1zM1058 584h1V679h-1zM1059 513h1V584h-1zM1060 513h1V530h-1zM1060 552h1V556h-1zM1060 581h1V664h-1zM1061 513h1V584h-1zM1062 513h1V530h-1zM1062 552h1V581h-1zM1062 584h1V691h-1zM1063 513h1V530h-1zM1063 552h1V581h-1zM1064 513h1V530h-1zM1064 569h1V631h-1zM1065 513h1V530h-1zM1065 569h1V619h-1zM1066 513h1V556h-1zM1066 584h1V619h-1zM1067 513h1V552h-1zM1067 556h1V647h-1zM1068 513h1V552h-1zM1068 556h1V584h-1zM1069 513h1V552h-1zM1069 556h1V647h-1zM1070 513h1V556h-1zM1070 569h1V605h-1zM1070 679h1V691h-1zM1071 513h1V552h-1zM1071 569h1V679h-1zM1072 513h1V691h-1zM1073 513h1V679h-1zM1074 513h1V631h-1zM1075 513h1V569h-1zM1075 584h1V691h-1zM1076 513h1V552h-1zM1076 569h1V664h-1zM1077 513h1V691h-1zM1078 513h1V530h-1zM1078 556h1V581h-1zM1078 584h1V691h-1zM1079 513h1V530h-1zM1079 556h1V581h-1zM1079 584h1V691h-1zM1080 513h1V556h-1zM1080 581h1V664h-1z"/>
<rect x="95" y="690" width="986" height="1" fill="#10101a" shape-rendering="crispEdges"/>
<line x1="94.5" y1="513" x2="94.5" y2="691" stroke="#333" stroke-width="1" shape-rendering="crispEdges"/>
<line x1="87" y1="659.5" x2="95" y2="659.5" stroke="#333" stroke-width="1" shape-rendering="crispEdges"/>
<line x1="87" y1="607.5" x2="95" y2="607.5" stroke="#333" stroke-width="1" shape-rendering="crispEdges"/>
<line x1="87" y1="555.5" x2="95" y2="555.5" stroke="#333" stroke-width="1" shape-rendering="crispEdges"/>
<line x1="91" y1="687.5" x2="95" y2="687.5" stroke="#333" stroke-width="1" shape-rendering="crispEdges"/>
<line x1="91" y1="680.5" x2="95" y2="680.5" stroke="#333" stroke-width="1" shape-rendering="crispEdges"/>
<line x1="91" y1="675.5" x2="95" y2="675.5" stroke="#333" stroke-width="1" shape-rendering="crispEdges"/>
<line x1="91" y1="671.5" x2="95" y2="671.5" stroke="#333" stroke-width="1" shape-rendering="crispEdges"/>
<line x1="91" y1="667.5" x2="95" y2="667.5" stroke="#333" stroke-width="1" shape-rendering="crispEdges"/>
<line x1="91" y1="664.5" x2="95" y2="664.5" stroke="#333" stroke-width="1" shape-rendering="crispEdges"/>
<line x1="91" y1="662.5" x2="95" y2="662.5" stroke="#333" stroke-width="1" shape-rendering="crispEdges"/>
<line x1="91" y1="644.5" x2="95" y2="644.5" stroke="#333" stroke-width="1" shape-rendering="crispEdges"/>
<line x1="91" y1="634.5" x2="95" y2="634.5" stroke="#333" stroke-width="1" shape-rendering="crispEdges"/>
<line x1="91" y1="628.5" x2="95" y2="628.5" stroke="#333" stroke-width="1" shape-rendering="crispEdges"/>
<line x1="91" y1="623.5" x2="95" y2="623.5" stroke="#333" stroke-width="1" shape-rendering="crispEdges"/>
<line x1="91" y1="619.5" x2="95" y2="619.5" stroke="#333" stroke-width="1" shape-rendering="crispEdges"/>
<line x1="91" y1="615.5" x2="95" y2="615.5" stroke="#333" stroke-width="1" shape-rendering="crispEdges"/>
<line x1="91" y1="612.5" x2="95" y2="612.5" stroke="#333" stroke-width="1" shape-rendering="crispEdges"/>
<line x1="91" y1="609.5" x2="95" y2="609.5" stroke="#333" stroke-width="1" shape-rendering="crispEdges"/>
<line x1="91" y1="591.5" x2="95" y2="591.5" stroke="#333" stroke-width="1" shape-rendering="crispEdges"/>
<line x1="91" y1="582.5" x2="95" y2="582.5" stroke="#333" stroke-width="1" shape-rendering="crispEdges"/>
<line x1="91" y1="576.5" x2="95" y2="576.5" stroke="#333" stroke-width="1" shape-rendering="crispEdges"/>
<line x1="91" y1="570.5" x2="95" y2="570.5" stroke="#333" stroke-width="1" shape-rendering="crispEdges"/>
<line x1="91" y1="566.5" x2="95" y2="566.5" stroke="#333" stroke-width="1" shape-rendering="crispEdges"/>
<line x1="91" y1="563.5" x2="95" y2="563.5" stroke="#333" stroke-width="1" shape-rendering="crispEdges"/>
<line x1="91" y1="560.5" x2="95" y2="560.5" stroke="#333" stroke-width="1" shape-rendering="crispEdges"/>
<line x1="91" y1="557.5" x2="95" y2="557.5" stroke="#333" stroke-width="1" shape-rendering="crispEdges"/>
<line x1="91" y1="539.5" x2="95" y2="539.5" stroke="#333" stroke-width="1" shape-rendering="crispEdges"/>
<line x1="91" y1="530.5" x2="95" y2="530.5" stroke="#333" stroke-width="1" shape-rendering="crispEdges"/>
<line x1="91" y1="523.5" x2="95" y2="523.5" stroke="#333" stroke-width="1" shape-rendering="crispEdges"/>
<line x1="91" y1="518.5" x2="95" y2="518.5" stroke="#333" stroke-width="1" shape-rendering="crispEdges"/>
<line x1="91" y1="514.5" x2="95" y2="514.5" stroke="#333" stroke-width="1" shape-rendering="crispEdges"/>
<text x="73.96" y="660.50" font-size="12.2" text-anchor="start" fill="#444" textLength="7.64" lengthAdjust="spacingAndGlyphs" >2</text>
<text x="59.08" y="666.50" font-size="12.2" text-anchor="start" fill="#444" textLength="15.28" lengthAdjust="spacingAndGlyphs" >10</text>
<text x="73.96" y="608.20" font-size="12.2" text-anchor="start" fill="#444" textLength="7.64" lengthAdjust="spacingAndGlyphs" >3</text>
<text x="59.08" y="614.20" font-size="12.2" text-anchor="start" fill="#444" textLength="15.28" lengthAdjust="spacingAndGlyphs" >10</text>
<text x="73.96" y="555.90" font-size="12.2" text-anchor="start" fill="#444" textLength="7.64" lengthAdjust="spacingAndGlyphs" >4</text>
<text x="59.08" y="561.90" font-size="12.2" text-anchor="start" fill="#444" textLength="15.28" lengthAdjust="spacingAndGlyphs" >10</text>
<text x="8.80" y="536.60" font-size="12.2" text-anchor="start" fill="#444" textLength="65.70" lengthAdjust="spacingAndGlyphs" >LEMMS Ions</text>
<text x="0" y="0" font-size="12.2" text-anchor="start" fill="#444" textLength="72.50" lengthAdjust="spacingAndGlyphs" transform="translate(50.00,638.80) rotate(-90)" >Energy (keV)</text>
<rect x="1092" y="515" width="12" height="1" fill="#d46070" shape-rendering="crispEdges"/>
<rect x="1092" y="516" width="12" height="1" fill="#d55b6a" shape-rendering="crispEdges"/>
<rect x="1092" y="517" width="12" height="1" fill="#d65764" shape-rendering="crispEdges"/>
<rect x="1092" y="518" width="12" height="1" fill="#d7525e" shape-rendering="crispEdges"/>
<rect x="1092" y="519" width="12" height="1" fill="#d94e58" shape-rendering="crispEdges"/>
<rect x="1092" y="520" width="12" height="1" fill="#da4952" shape-rendering="crispEdges"/>
<rect x="1092" y="521" width="12" height="1" fill="#db454b" shape-rendering="crispEdges"/>
<rect x="1092" y="522" width="12" height="1" fill="#dc4045" shape-rendering="crispEdges"/>
<rect x="1092" y="523" width="12" height="1" fill="#dd3b3f" shape-rendering="crispEdges"/>
<rect x="1092" y="524" width="12" height="1" fill="#de3739" shape-rendering="crispEdges"/>
<rect x="1092" y="525" width="12" height="1" fill="#df3233" shape-rendering="crispEdges"/>
<rect x="1092" y="526" width="12" height="1" fill="#e1312e" shape-rendering="crispEdges"/>
<rect x="1092" y="527" width="12" height="1" fill="#e2332a" shape-rendering="crispEdges"/>
<rect x="1092" y="528" width="12" height="1" fill="#e33526" shape-rendering="crispEdges"/>
<rect x="1092" y="529" width="12" height="1" fill="#e53722" shape-rendering="crispEdges"/>
<rect x="1092" y="530" width="12" height="1" fill="#e6391e" shape-rendering="crispEdges"/>
<rect x="1092" y="531" width="12" height="1" fill="#e73b1a" shape-rendering="crispEdges"/>
<rect x="1092" y="532" width="12" height="1" fill="#e83d17" shape-rendering="crispEdges"/>
<rect x="1092" y="533" width="12" height="1" fill="#ea3f13" shape-rendering="crispEdges"/>
<rect x="1092" y="534" width="12" height="1" fill="#eb410f" shape-rendering="crispEdges"/>
<rect x="1092" y="535" width="12" height="1" fill="#ec430b" shape-rendering="crispEdges"/>
<rect x="1092" y="536" width="12" height="1" fill="#ee4507" shape-rendering="crispEdges"/>
<rect x="1092" y="537" width="12" height="1" fill="#ef4703" shape-rendering="crispEdges"/>
<rect x="1092" y="538" width="12" height="1" fill="#f04900" shape-rendering="crispEdges"/>
<rect x="1092" y="539" width="12" height="1" fill="#f24d00" shape-rendering="crispEdges"/>
<rect x="1092" y="540" width="12" height="1" fill="#f35100" shape-rendering="crispEdges"/>
<rect x="1092" y="541" width="12" height="1" fill="#f45500" shape-rendering="crispEdges"/>
<rect x="1092" y="542" width="12" height="1" fill="#f55900" shape-rendering="crispEdges"/>
<rect x="1092" y="543" width="12" height="1" fill="#f65d00" shape-rendering="crispEdges"/>
<rect x="1092" y="544" width="12" height="1" fill="#f86200" shape-rendering="crispEdges"/>
<rect x="1092" y="545" width="12" height="1" fill="#f96600" shape-rendering="crispEdges"/>
<rect x="1092" y="546" width="12" height="1" fill="#fa6a00" shape-rendering="crispEdges"/>
<rect x="1092" y="547" width="12" height="1" fill="#fb6e00" shape-rendering="crispEdges"/>
<rect x="1092" y="548" width="12" height="1" fill="#fd7200" shape-rendering="crispEdges"/>
<rect x="1092" y="549" width="12" height="1" fill="#fe7600" shape-rendering="crispEdges"/>
<rect x="1092" y="550" width="12" height="1" fill="#ff7a00" shape-rendering="crispEdges"/>
<rect x="1092" y="551" width="12" height="1" fill="#fe7d00" shape-rendering="crispEdges"/>
<rect x="1092" y="552" width="12" height="1" fill="#fd7f00" shape-rendering="crispEdges"/>
<rect x="1092" y="553" width="12" height="1" fill="#fc8200" shape-rendering="crispEdges"/>
<rect x="1092" y="554" width="12" height="1" fill="#fb8500" shape-rendering="crispEdges"/>
<rect x="1092" y="555" width="12" height="1" fill="#fa8800" shape-rendering="crispEdges"/>
<rect x="1092" y="556" width="12" height="1" fill="#f98a00" shape-rendering="crispEdges"/>
<rect x="1092" y="557" width="12" height="1" fill="#f88d00" shape-rendering="crispEdges"/>
<rect x="1092" y="558" width="12" height="1" fill="#f69000" shape-rendering="crispEdges"/>
<rect x="1092" y="559" width="12" height="1" fill="#f59200" shape-rendering="crispEdges"/>
<rect x="1092" y="560" width="12" height="1" fill="#f49500" shape-rendering="crispEdges"/>
<rect x="1092" y="561" width="12" height="1" fill="#f39800" shape-rendering="crispEdges"/>
<rect x="1092" y="562" width="12" height="1" fill="#f29b00" shape-rendering="crispEdges"/>
<rect x="1092" y="563" width="12" height="1" fill="#f19d00" shape-rendering="crispEdges"/>
<rect x="1092" y="564" width="12" height="1" fill="#f0a000" shape-rendering="crispEdges"/>
<rect x="1092" y="565" width="12" height="1" fill="#eea400" shape-rendering="crispEdges"/>
<rect x="1092" y="566" width="12" height="1" fill="#eca800" shape-rendering="crispEdges"/>
<rect x="1092" y="567" width="12" height="1" fill="#eaac00" shape-rendering="crispEdges"/>
<rect x="1092" y="568" width="12" height="1" fill="#e8b000" shape-rendering="crispEdges"/>
<rect x="1092" y="569" width="12" height="1" fill="#e6b400" shape-rendering="crispEdges"/>
<rect x="1092" y="570" width="12" height="1" fill="#e4b800" shape-rendering="crispEdges"/>
<rect x="1092" y="571" width="12" height="1" fill="#e2bb00" shape-rendering="crispEdges"/>
<rect x="1092" y="572" width="12" height="1" fill="#e0bf00" shape-rendering="crispEdges"/>
<rect x="1092" y="573" width="12" height="1" fill="#dec300" shape-rendering="crispEdges"/>
<rect x="1092" y="574" width="12" height="1" fill="#dcc700" shape-rendering="crispEdges"/>
<rect x="1092" y="575" width="12" height="1" fill="#dacb00" shape-rendering="crispEdges"/>
<rect x="1092" y="576" width="12" height="1" fill="#d8cf00" shape-rendering="crispEdges"/>
<rect x="1092" y="577" width="12" height="1" fill="#d6d200" shape-rendering="crispEdges"/>
<rect x="1092" y="578" width="12" height="1" fill="#d2d500" shape-rendering="crispEdges"/>
<rect x="1092" y="579" width="12" height="1" fill="#cfd700" shape-rendering="crispEdges"/>
<rect x="1092" y="580" width="12" height="1" fill="#ccda00" shape-rendering="crispEdges"/>
<rect x="1092" y="581" width="12" height="1" fill="#c8dc00" shape-rendering="crispEdges"/>
<rect x="1092" y="582" width="12" height="1" fill="#c5df00" shape-rendering="crispEdges"/>
<rect x="1092" y="583" width="12" height="1" fill="#c2e200" shape-rendering="crispEdges"/>
<rect x="1092" y="584" width="12" height="1" fill="#bfe400" shape-rendering="crispEdges"/>
<rect x="1092" y="585" width="12" height="1" fill="#bbe700" shape-rendering="crispEdges"/>
<rect x="1092" y="586" width="12" height="1" fill="#b8e900" shape-rendering="crispEdges"/>
<rect x="1092" y="587" width="12" height="1" fill="#b5ec00" shape-rendering="crispEdges"/>
<rect x="1092" y="588" width="12" height="1" fill="#b2ef00" shape-rendering="crispEdges"/>
<rect x="1092" y="589" width="12" height="1" fill="#adef02" shape-rendering="crispEdges"/>
<rect x="1092" y="590" width="12" height="1" fill="#a7ed07" shape-rendering="crispEdges"/>
<rect x="1092" y="591" width="12" height="1" fill="#a2ec0b" shape-rendering="crispEdges"/>
<rect x="1092" y="592" width="12" height="1" fill="#9cea10" shape-rendering="crispEdges"/>
<rect x="1092" y="593" width="12" height="1" fill="#96e815" shape-rendering="crispEdges"/>
<rect x="1092" y="594" width="12" height="1" fill="#91e719" shape-rendering="crispEdges"/>
<rect x="1092" y="595" width="12" height="1" fill="#8be51e" shape-rendering="crispEdges"/>
<rect x="1092" y="596" width="12" height="1" fill="#85e322" shape-rendering="crispEdges"/>
<rect x="1092" y="597" width="12" height="1" fill="#7fe127" shape-rendering="crispEdges"/>
<rect x="1092" y="598" width="12" height="1" fill="#7ae02b" shape-rendering="crispEdges"/>
<rect x="1092" y="599" width="12" height="1" fill="#74de30" shape-rendering="crispEdges"/>
<rect x="1092" y="600" width="12" height="1" fill="#6edc35" shape-rendering="crispEdges"/>
<rect x="1092" y="601" width="12" height="1" fill="#69db39" shape-rendering="crispEdges"/>
<rect x="1092" y="602" width="12" height="1" fill="#63d93e" shape-rendering="crispEdges"/>
<rect x="1092" y="603" width="12" height="1" fill="#5ed741" shape-rendering="crispEdges"/>
<rect x="1092" y="604" width="12" height="1" fill="#59d543" shape-rendering="crispEdges"/>
<rect x="1092" y="605" width="12" height="1" fill="#55d446" shape-rendering="crispEdges"/>
<rect x="1092" y="606" width="12" height="1" fill="#50d248" shape-rendering="crispEdges"/>
<rect x="1092" y="607" width="12" height="1" fill="#4bd04a" shape-rendering="crispEdges"/>
<rect x="1092" y="608" width="12" height="1" fill="#47cf4d" shape-rendering="crispEdges"/>
<rect x="1092" y="609" width="12" height="1" fill="#42cd4f" shape-rendering="crispEdges"/>
<rect x="1092" y="610" width="12" height="1" fill="#3ecb51" shape-rendering="crispEdges"/>
<rect x="1092" y="611" width="12" height="1" fill="#39c953" shape-rendering="crispEdges"/>
<rect x="1092" y="612" width="12" height="1" fill="#35c856" shape-rendering="crispEdges"/>
<rect x="1092" y="613" width="12" height="1" fill="#30c658" shape-rendering="crispEdges"/>
<rect x="1092" y="614" width="12" height="1" fill="#2bc45a" shape-rendering="crispEdges"/>
<rect x="1092" y="615" width="12" height="1" fill="#27c35d" shape-rendering="crispEdges"/>
<rect x="1092" y="616" width="12" height="1" fill="#22c15f" shape-rendering="crispEdges"/>
<rect x="1092" y="617" width="12" height="1" fill="#1fbf62" shape-rendering="crispEdges"/>
<rect x="1092" y="618" width="12" height="1" fill="#1dbd65" shape-rendering="crispEdges"/>
<rect x="1092" y="619" width="12" height="1" fill="#1aba69" shape-rendering="crispEdges"/>
<rect x="1092" y="620" width="12" height="1" fill="#18b86c" shape-rendering="crispEdges"/>
<rect x="1092" y="621" width="12" height="1" fill="#16b66f" shape-rendering="crispEdges"/>
<rect x="1092" y="622" width="12" height="1" fill="#13b373" shape-rendering="crispEdges"/>
<rect x="1092" y="623" width="12" height="1" fill="#11b176" shape-rendering="crispEdges"/>
<rect x="1092" y="624" width="12" height="1" fill="#0faf7a" shape-rendering="crispEdges"/>
<rect x="1092" y="625" width="12" height="1" fill="#0dad7d" shape-rendering="crispEdges"/>
<rect x="1092" y="626" width="12" height="1" fill="#0aaa81" shape-rendering="crispEdges"/>
<rect x="1092" y="627" width="12" height="1" fill="#08a884" shape-rendering="crispEdges"/>
<rect x="1092" y="628" width="12" height="1" fill="#06a687" shape-rendering="crispEdges"/>
<rect x="1092" y="629" width="12" height="1" fill="#03a38b" shape-rendering="crispEdges"/>
<rect x="1092" y="630" width="12" height="1" fill="#01a18e" shape-rendering="crispEdges"/>
<rect x="1092" y="631" width="12" height="1" fill="#009f92" shape-rendering="crispEdges"/>
<rect x="1092" y="632" width="12" height="1" fill="#009d96" shape-rendering="crispEdges"/>
<rect x="1092" y="633" width="12" height="1" fill="#009c9a" shape-rendering="crispEdges"/>
<rect x="1092" y="634" width="12" height="1" fill="#009a9e" shape-rendering="crispEdges"/>
<rect x="1092" y="635" width="12" height="1" fill="#0098a2" shape-rendering="crispEdges"/>
<rect x="1092" y="636" width="12" height="1" fill="#0097a6" shape-rendering="crispEdges"/>
<rect x="1092" y="637" width="12" height="1" fill="#0095aa" shape-rendering="crispEdges"/>
<rect x="1092" y="638" width="12" height="1" fill="#0093ae" shape-rendering="crispEdges"/>
<rect x="1092" y="639" width="12" height="1" fill="#0091b2" shape-rendering="crispEdges"/>
<rect x="1092" y="640" width="12" height="1" fill="#0090b6" shape-rendering="crispEdges"/>
<rect x="1092" y="641" width="12" height="1" fill="#008eba" shape-rendering="crispEdges"/>
<rect x="1092" y="642" width="12" height="1" fill="#008cbe" shape-rendering="crispEdges"/>
<rect x="1092" y="643" width="12" height="1" fill="#008bc2" shape-rendering="crispEdges"/>
<rect x="1092" y="644" width="12" height="1" fill="#0089c6" shape-rendering="crispEdges"/>
<rect x="1092" y="645" width="12" height="1" fill="#0186cb" shape-rendering="crispEdges"/>
<rect x="1092" y="646" width="12" height="1" fill="#0282d0" shape-rendering="crispEdges"/>
<rect x="1092" y="647" width="12" height="1" fill="#047ed5" shape-rendering="crispEdges"/>
<rect x="1092" y="648" width="12" height="1" fill="#057bda" shape-rendering="crispEdges"/>
<rect x="1092" y="649" width="12" height="1" fill="#0777e0" shape-rendering="crispEdges"/>
<rect x="1092" y="650" width="12" height="1" fill="#0873e5" shape-rendering="crispEdges"/>
<rect x="1092" y="651" width="12" height="1" fill="#0a6fea" shape-rendering="crispEdges"/>
<rect x="1092" y="652" width="12" height="1" fill="#0b6bef" shape-rendering="crispEdges"/>
<rect x="1092" y="653" width="12" height="1" fill="#0d68f5" shape-rendering="crispEdges"/>
<rect x="1092" y="654" width="12" height="1" fill="#0e64fa" shape-rendering="crispEdges"/>
<rect x="1092" y="655" width="12" height="1" fill="#1060ff" shape-rendering="crispEdges"/>
<rect x="1092" y="656" width="12" height="1" fill="#125bff" shape-rendering="crispEdges"/>
<rect x="1092" y="657" width="12" height="1" fill="#1357ff" shape-rendering="crispEdges"/>
<rect x="1092" y="658" width="12" height="1" fill="#1552ff" shape-rendering="crispEdges"/>
<rect x="1092" y="659" width="12" height="1" fill="#164eff" shape-rendering="crispEdges"/>
<rect x="1092" y="660" width="12" height="1" fill="#1849ff" shape-rendering="crispEdges"/>
<rect x="1092" y="661" width="12" height="1" fill="#1945ff" shape-rendering="crispEdges"/>
<rect x="1092" y="662" width="12" height="1" fill="#1b40ff" shape-rendering="crispEdges"/>
<rect x="1092" y="663" width="12" height="1" fill="#1c3bff" shape-rendering="crispEdges"/>
<rect x="1092" y="664" width="12" height="1" fill="#1e37ff" shape-rendering="crispEdges"/>
<rect x="1092" y="665" width="12" height="1" fill="#1f32ff" shape-rendering="crispEdges"/>
<rect x="1092" y="666" width="12" height="1" fill="#1f2efb" shape-rendering="crispEdges"/>
<rect x="1092" y="667" width="12" height="1" fill="#1e2bf4" shape-rendering="crispEdges"/>
<rect x="1092" y="668" width="12" height="1" fill="#1c28ec" shape-rendering="crispEdges"/>
<rect x="1092" y="669" width="12" height="1" fill="#1b25e5" shape-rendering="crispEdges"/>
<rect x="1092" y="670" width="12" height="1" fill="#1922dd" shape-rendering="crispEdges"/>
<rect x="1092" y="671" width="12" height="1" fill="#181fd6" shape-rendering="crispEdges"/>
<rect x="1092" y="672" width="12" height="1" fill="#161cce" shape-rendering="crispEdges"/>
<rect x="1092" y="673" width="12" height="1" fill="#1519c7" shape-rendering="crispEdges"/>
<rect x="1092" y="674" width="12" height="1" fill="#1316bf" shape-rendering="crispEdges"/>
<rect x="1092" y="675" width="12" height="1" fill="#1213b8" shape-rendering="crispEdges"/>
<rect x="1092" y="676" width="12" height="1" fill="#1010b0" shape-rendering="crispEdges"/>
<rect x="1092" y="677" width="12" height="1" fill="#0f0fa9" shape-rendering="crispEdges"/>
<rect x="1092" y="678" width="12" height="1" fill="#0e0ea2" shape-rendering="crispEdges"/>
<rect x="1092" y="679" width="12" height="1" fill="#0d0d9b" shape-rendering="crispEdges"/>
<rect x="1092" y="680" width="12" height="1" fill="#0b0b95" shape-rendering="crispEdges"/>
<rect x="1092" y="681" width="12" height="1" fill="#0a0a8e" shape-rendering="crispEdges"/>
<rect x="1092" y="682" width="12" height="1" fill="#090987" shape-rendering="crispEdges"/>
<rect x="1092" y="683" width="12" height="1" fill="#080880" shape-rendering="crispEdges"/>
<rect x="1092" y="684" width="12" height="1" fill="#070779" shape-rendering="crispEdges"/>
<rect x="1092" y="685" width="12" height="1" fill="#060672" shape-rendering="crispEdges"/>
<rect x="1092" y="686" width="12" height="1" fill="#05056b" shape-rendering="crispEdges"/>
<rect x="1092" y="687" width="12" height="1" fill="#030365" shape-rendering="crispEdges"/>
<rect x="1092" y="688" width="12" height="1" fill="#02025e" shape-rendering="crispEdges"/>
<rect x="1092" y="689" width="12" height="1" fill="#010157" shape-rendering="crispEdges"/>
<rect x="1092" y="690" width="12" height="1" fill="#000050" shape-rendering="crispEdges"/>
<line x1="1104.5" y1="514" x2="1104.5" y2="692" stroke="#333" stroke-width="1" shape-rendering="crispEdges"/>
<line x1="1104" y1="514.5" x2="1113" y2="514.5" stroke="#333" stroke-width="1" shape-rendering="crispEdges"/>
<line x1="1104" y1="553.5" x2="1113" y2="553.5" stroke="#333" stroke-width="1" shape-rendering="crispEdges"/>
<line x1="1104" y1="592.5" x2="1113" y2="592.5" stroke="#333" stroke-width="1" shape-rendering="crispEdges"/>
<line x1="1104" y1="632.5" x2="1113" y2="632.5" stroke="#333" stroke-width="1" shape-rendering="crispEdges"/>
<line x1="1104" y1="671.5" x2="1113" y2="671.5" stroke="#333" stroke-width="1" shape-rendering="crispEdges"/>
<line x1="1104" y1="690.5" x2="1113" y2="690.5" stroke="#333" stroke-width="1" shape-rendering="crispEdges"/>
<text x="1116.90" y="521.80" font-size="12.2" text-anchor="start" fill="#444" textLength="15.28" lengthAdjust="spacingAndGlyphs" >10</text>
<text x="1132.78" y="515.80" font-size="12.2" text-anchor="start" fill="#444" textLength="7.64" lengthAdjust="spacingAndGlyphs" >4</text>
<text x="1116.90" y="561.00" font-size="12.2" text-anchor="start" fill="#444" textLength="15.28" lengthAdjust="spacingAndGlyphs" >10</text>
<text x="1132.78" y="555.00" font-size="12.2" text-anchor="start" fill="#444" textLength="7.64" lengthAdjust="spacingAndGlyphs" >2</text>
<text x="1116.90" y="600.20" font-size="12.2" text-anchor="start" fill="#444" textLength="15.28" lengthAdjust="spacingAndGlyphs" >10</text>
<text x="1132.78" y="594.20" font-size="12.2" text-anchor="start" fill="#444" textLength="7.64" lengthAdjust="spacingAndGlyphs" >0</text>
<text x="1116.90" y="639.40" font-size="12.2" text-anchor="start" fill="#444" textLength="15.28" lengthAdjust="spacingAndGlyphs" >10</text>
<text x="1132.78" y="633.40" font-size="12.2" text-anchor="start" fill="#444" textLength="11.97" lengthAdjust="spacingAndGlyphs" >−2</text>
<text x="1116.90" y="678.60" font-size="12.2" text-anchor="start" fill="#444" textLength="15.28" lengthAdjust="spacingAndGlyphs" >10</text>
<text x="1132.78" y="672.60" font-size="12.2" text-anchor="start" fill="#444" textLength="11.97" lengthAdjust="spacingAndGlyphs" >−4</text>
<text x="0" y="0" font-size="12.2" text-anchor="start" fill="#444" textLength="168.00" lengthAdjust="spacingAndGlyphs" transform="translate(1156.50,518.00) rotate(90)" >intensity 1/(s cm^2 ster keV)</text>
<line x1="1104" y1="534.5" x2="1109" y2="534.5" stroke="#333" stroke-width="1" shape-rendering="crispEdges"/>
<line x1="1104" y1="573.5" x2="1109" y2="573.5" stroke="#333" stroke-width="1" shape-rendering="crispEdges"/>
<line x1="1104" y1="612.5" x2="1109" y2="612.5" stroke="#333" stroke-width="1" shape-rendering="crispEdges"/>
<line x1="1104" y1="652.5" x2="1109" y2="652.5" stroke="#333" stroke-width="1" shape-rendering="crispEdges"/>
<line x1="136.5" y1="218" x2="136.5" y2="220" stroke="#555" stroke-width="1" shape-rendering="crispEdges"/>
<line x1="177.5" y1="218" x2="177.5" y2="220" stroke="#555" stroke-width="1" shape-rendering="crispEdges"/>
<line x1="218.5" y1="217" x2="218.5" y2="220" stroke="#555" stroke-width="1" shape-rendering="crispEdges"/>
<line x1="259.5" y1="218" x2="259.5" y2="220" stroke="#555" stroke-width="1" shape-rendering="crispEdges"/>
<line x1="300.5" y1="218" x2="300.5" y2="220" stroke="#555" stroke-width="1" shape-rendering="crispEdges"/>
<line x1="341.5" y1="217" x2="341.5" y2="220" stroke="#555" stroke-width="1" shape-rendering="crispEdges"/>
<line x1="382.5" y1="218" x2="382.5" y2="220" stroke="#555" stroke-width="1" shape-rendering="crispEdges"/>
<line x1="423.5" y1="218" x2="423.5" y2="220" stroke="#555" stroke-width="1" shape-rendering="crispEdges"/>
<line x1="464.5" y1="217" x2="464.5" y2="220" stroke="#555" stroke-width="1" shape-rendering="crispEdges"/>
<line x1="505.5" y1="218" x2="505.5" y2="220" stroke="#555" stroke-width="1" shape-rendering="crispEdges"/>
<line x1="546.5" y1="218" x2="546.5" y2="220" stroke="#555" stroke-width="1" shape-rendering="crispEdges"/>
<line x1="587.5" y1="217" x2="587.5" y2="220" stroke="#555" stroke-width="1" shape-rendering="crispEdges"/>
<line x1="628.5" y1="218" x2="628.5" y2="220" stroke="#555" stroke-width="1" shape-rendering="crispEdges"/>
<line x1="669.5" y1="218" x2="669.5" y2="220" stroke="#555" stroke-width="1" shape-rendering="crispEdges"/>
<line x1="710.5" y1="217" x2="710.5" y2="220" stroke="#555" stroke-width="1" shape-rendering="crispEdges"/>
<line x1="751.5" y1="218" x2="751.5" y2="220" stroke="#555" stroke-width="1" shape-rendering="crispEdges"/>
<line x1="792.5" y1="218" x2="792.5" y2="220" stroke="#555" stroke-width="1" shape-rendering="crispEdges"/>
<line x1="833.5" y1="217" x2="833.5" y2="220" stroke="#555" stroke-width="1" shape-rendering="crispEdges"/>
<line x1="874.5" y1="218" x2="874.5" y2="220" stroke="#555" stroke-width="1" shape-rendering="crispEdges"/>
<line x1="915.5" y1="218" x2="915.5" y2="220" stroke="#555" stroke-width="1" shape-rendering="crispEdges"/>
<line x1="956.5" y1="217" x2="956.5" y2="220" stroke="#555" stroke-width="1" shape-rendering="crispEdges"/>
<line x1="997.5" y1="218" x2="997.5" y2="220" stroke="#555" stroke-width="1" shape-rendering="crispEdges"/>
<line x1="1038.5" y1="218" x2="1038.5" y2="220" stroke="#555" stroke-width="1" shape-rendering="crispEdges"/>
<line x1="136.5" y1="414" x2="136.5" y2="416" stroke="#555" stroke-width="1" shape-rendering="crispEdges"/>
<line x1="177.5" y1="414" x2="177.5" y2="416" stroke="#555" stroke-width="1" shape-rendering="crispEdges"/>
<line x1="218.5" y1="413" x2="218.5" y2="416" stroke="#555" stroke-width="1" shape-rendering="crispEdges"/>
<line x1="259.5" y1="414" x2="259.5" y2="416" stroke="#555" stroke-width="1" shape-rendering="crispEdges"/>
<line x1="300.5" y1="414" x2="300.5" y2="416" stroke="#555" stroke-width="1" shape-rendering="crispEdges"/>
<line x1="341.5" y1="413" x2="341.5" y2="416" stroke="#555" stroke-width="1" shape-rendering="crispEdges"/>
<line x1="382.5" y1="414" x2="382.5" y2="416" stroke="#555" stroke-width="1" shape-rendering="crispEdges"/>
<line x1="423.5" y1="414" x2="423.5" y2="416" stroke="#555" stroke-width="1" shape-rendering="crispEdges"/>
<line x1="464.5" y1="413" x2="464.5" y2="416" stroke="#555" stroke-width="1" shape-rendering="crispEdges"/>
<line x1="505.5" y1="414" x2="505.5" y2="416" stroke="#555" stroke-width="1" shape-rendering="crispEdges"/>
<line x1="546.5" y1="414" x2="546.5" y2="416" stroke="#555" stroke-width="1" shape-rendering="crispEdges"/>
<line x1="587.5" y1="413" x2="587.5" y2="416" stroke="#555" stroke-width="1" shape-rendering="crispEdges"/>
<line x1="628.5" y1="414" x2="628.5" y2="416" stroke="#555" stroke-width="1" shape-rendering="crispEdges"/>
<line x1="669.5" y1="414" x2="669.5" y2="416" stroke="#555" stroke-width="1" shape-rendering="crispEdges"/>
<line x1="710.5" y1="413" x2="710.5" y2="416" stroke="#555" stroke-width="1" shape-rendering="crispEdges"/>
<line x1="751.5" y1="414" x2="751.5" y2="416" stroke="#555" stroke-width="1" shape-rendering="crispEdges"/>
<line x1="792.5" y1="414" x2="792.5" y2="416" stroke="#555" stroke-width="1" shape-rendering="crispEdges"/>
<line x1="833.5" y1="413" x2="833.5" y2="416" stroke="#555" stroke-width="1" shape-rendering="crispEdges"/>
<line x1="874.5" y1="414" x2="874.5" y2="416" stroke="#555" stroke-width="1" shape-rendering="crispEdges"/>
<line x1="915.5" y1="414" x2="915.5" y2="416" stroke="#555" stroke-width="1" shape-rendering="crispEdges"/>
<line x1="956.5" y1="413" x2="956.5" y2="416" stroke="#555" stroke-width="1" shape-rendering="crispEdges"/>
<line x1="997.5" y1="414" x2="997.5" y2="416" stroke="#555" stroke-width="1" shape-rendering="crispEdges"/>
<line x1="1038.5" y1="414" x2="1038.5" y2="416" stroke="#555" stroke-width="1" shape-rendering="crispEdges"/>
<line x1="136.5" y1="507" x2="136.5" y2="509" stroke="#333" stroke-width="1" shape-rendering="crispEdges"/>
<line x1="177.5" y1="507" x2="177.5" y2="509" stroke="#333" stroke-width="1" shape-rendering="crispEdges"/>
<line x1="218.5" y1="506" x2="218.5" y2="509" stroke="#333" stroke-width="1" shape-rendering="crispEdges"/>
<line x1="259.5" y1="507" x2="259.5" y2="509" stroke="#333" stroke-width="1" shape-rendering="crispEdges"/>
<line x1="300.5" y1="507" x2="300.5" y2="509" stroke="#333" stroke-width="1" shape-rendering="crispEdges"/>
<line x1="341.5" y1="506" x2="341.5" y2="509" stroke="#333" stroke-width="1" shape-rendering="crispEdges"/>
<line x1="382.5" y1="507" x2="382.5" y2="509" stroke="#333" stroke-width="1" shape-rendering="crispEdges"/>
<line x1="423.5" y1="507" x2="423.5" y2="509" stroke="#333" stroke-width="1" shape-rendering="crispEdges"/>
<line x1="464.5" y1="506" x2="464.5" y2="509" stroke="#333" stroke-width="1" shape-rendering="crispEdges"/>
<line x1="505.5" y1="507" x2="505.5" y2="509" stroke="#333" stroke-width="1" shape-rendering="crispEdges"/>
<line x1="546.5" y1="507" x2="546.5" y2="509" stroke="#333" stroke-width="1" shape-rendering="crispEdges"/>
<line x1="587.5" y1="506" x2="587.5" y2="509" stroke="#333" stroke-width="1" shape-rendering="crispEdges"/>
<line x1="628.5" y1="507" x2="628.5" y2="509" stroke="#333" stroke-width="1" shape-rendering="crispEdges"/>
<line x1="669.5" y1="507" x2="669.5" y2="509" stroke="#333" stroke-width="1" shape-rendering="crispEdges"/>
<line x1="710.5" y1="506" x2="710.5" y2="509" stroke="#333" stroke-width="1" shape-rendering="crispEdges"/>
<line x1="751.5" y1="507" x2="751.5" y2="509" stroke="#333" stroke-width="1" shape-rendering="crispEdges"/>
<line x1="792.5" y1="507" x2="792.5" y2="509" stroke="#333" stroke-width="1" shape-rendering="crispEdges"/>
<line x1="833.5" y1="506" x2="833.5" y2="509" stroke="#333" stroke-width="1" shape-rendering="crispEdges"/>
<line x1="874.5" y1="507" x2="874.5" y2="509" stroke="#333" stroke-width="1" shape-rendering="crispEdges"/>
<line x1="915.5" y1="507" x2="915.5" y2="509" stroke="#333" stroke-width="1" shape-rendering="crispEdges"/>
<line x1="956.5" y1="506" x2="956.5" y2="509" stroke="#333" stroke-width="1" shape-rendering="crispEdges"/>
<line x1="997.5" y1="507" x2="997.5" y2="509" stroke="#333" stroke-width="1" shape-rendering="crispEdges"/>
<line x1="1038.5" y1="507" x2="1038.5" y2="509" stroke="#333" stroke-width="1" shape-rendering="crispEdges"/>
<line x1="136.5" y1="688" x2="136.5" y2="690" stroke="#555" stroke-width="1" shape-rendering="crispEdges"/>
<line x1="177.5" y1="688" x2="177.5" y2="690" stroke="#555" stroke-width="1" shape-rendering="crispEdges"/>
<line x1="218.5" y1="687" x2="218.5" y2="690" stroke="#555" stroke-width="1" shape-rendering="crispEdges"/>
<line x1="259.5" y1="688" x2="259.5" y2="690" stroke="#555" stroke-width="1" shape-rendering="crispEdges"/>
<line x1="300.5" y1="688" x2="300.5" y2="690" stroke="#555" stroke-width="1" shape-rendering="crispEdges"/>
<line x1="341.5" y1="687" x2="341.5" y2="690" stroke="#555" stroke-width="1" shape-rendering="crispEdges"/>
<line x1="382.5" y1="688" x2="382.5" y2="690" stroke="#555" stroke-width="1" shape-rendering="crispEdges"/>
<line x1="423.5" y1="688" x2="423.5" y2="690" stroke="#555" stroke-width="1" shape-rendering="crispEdges"/>
<line x1="464.5" y1="687" x2="464.5" y2="690" stroke="#555" stroke-width="1" shape-rendering="crispEdges"/>
<line x1="505.5" y1="688" x2="505.5" y2="690" stroke="#555" stroke-width="1" shape-rendering="crispEdges"/>
<line x1="546.5" y1="688" x2="546.5" y2="690" stroke="#555" stroke-width="1" shape-rendering="crispEdges"/>
<line x1="587.5" y1="687" x2="587.5" y2="690" stroke="#555" stroke-width="1" shape-rendering="crispEdges"/>
<line x1="628.5" y1="688" x2="628.5" y2="690" stroke="#555" stroke-width="1" shape-rendering="crispEdges"/>
<line x1="669.5" y1="688" x2="669.5" y2="690" stroke="#555" stroke-width="1" shape-rendering="crispEdges"/>
<line x1="710.5" y1="687" x2="710.5" y2="690" stroke="#555" stroke-width="1" shape-rendering="crispEdges"/>
<line x1="751.5" y1="688" x2="751.5" y2="690" stroke="#555" stroke-width="1" shape-rendering="crispEdges"/>
<line x1="792.5" y1="688" x2="792.5" y2="690" stroke="#555" stroke-width="1" shape-rendering="crispEdges"/>
<line x1="833.5" y1="687" x2="833.5" y2="690" stroke="#555" stroke-width="1" shape-rendering="crispEdges"/>
<line x1="874.5" y1="688" x2="874.5" y2="690" stroke="#555" stroke-width="1" shape-rendering="crispEdges"/>
<line x1="915.5" y1="688" x2="915.5" y2="690" stroke="#555" stroke-width="1" shape-rendering="crispEdges"/>
<line x1="956.5" y1="687" x2="956.5" y2="690" stroke="#555" stroke-width="1" shape-rendering="crispEdges"/>
<line x1="997.5" y1="688" x2="997.5" y2="690" stroke="#555" stroke-width="1" shape-rendering="crispEdges"/>
<line x1="1038.5" y1="688" x2="1038.5" y2="690" stroke="#555" stroke-width="1" shape-rendering="crispEdges"/>
<rect x="95" y="695" width="986" height="16" fill="#111" shape-rendering="crispEdges"/>
<rect x="97" y="696" width="984" height="14" fill="#00ff00" shape-rendering="crispEdges"/>
<text x="28.60" y="706.70" font-size="12.2" text-anchor="start" fill="#444" textLength="50.90" lengthAdjust="spacingAndGlyphs" >Sunlight?</text>
<line x1="136.5" y1="711" x2="136.5" y2="715" stroke="#333" stroke-width="1" shape-rendering="crispEdges"/>
<line x1="177.5" y1="711" x2="177.5" y2="715" stroke="#333" stroke-width="1" shape-rendering="crispEdges"/>
<line x1="218.5" y1="711" x2="218.5" y2="719" stroke="#333" stroke-width="1" shape-rendering="crispEdges"/>
<line x1="259.5" y1="711" x2="259.5" y2="715" stroke="#333" stroke-width="1" shape-rendering="crispEdges"/>
<line x1="300.5" y1="711" x2="300.5" y2="715" stroke="#333" stroke-width="1" shape-rendering="crispEdges"/>
<line x1="341.5" y1="711" x2="341.5" y2="719" stroke="#333" stroke-width="1" shape-rendering="crispEdges"/>
<line x1="382.5" y1="711" x2="382.5" y2="715" stroke="#333" stroke-width="1" shape-rendering="crispEdges"/>
<line x1="423.5" y1="711" x2="423.5" y2="715" stroke="#333" stroke-width="1" shape-rendering="crispEdges"/>
<line x1="464.5" y1="711" x2="464.5" y2="719" stroke="#333" stroke-width="1" shape-rendering="crispEdges"/>
<line x1="505.5" y1="711" x2="505.5" y2="715" stroke="#333" stroke-width="1" shape-rendering="crispEdges"/>
<line x1="546.5" y1="711" x2="546.5" y2="715" stroke="#333" stroke-width="1" shape-rendering="crispEdges"/>
<line x1="587.5" y1="711" x2="587.5" y2="719" stroke="#333" stroke-width="1" shape-rendering="crispEdges"/>
<line x1="628.5" y1="711" x2="628.5" y2="715" stroke="#333" stroke-width="1" shape-rendering="crispEdges"/>
<line x1="669.5" y1="711" x2="669.5" y2="715" stroke="#333" stroke-width="1" shape-rendering="crispEdges"/>
<line x1="710.5" y1="711" x2="710.5" y2="719" stroke="#333" stroke-width="1" shape-rendering="crispEdges"/>
<line x1="751.5" y1="711" x2="751.5" y2="715" stroke="#333" stroke-width="1" shape-rendering="crispEdges"/>
<line x1="792.5" y1="711" x2="792.5" y2="715" stroke="#333" stroke-width="1" shape-rendering="crispEdges"/>
<line x1="833.5" y1="711" x2="833.5" y2="719" stroke="#333" stroke-width="1" shape-rendering="crispEdges"/>
<line x1="874.5" y1="711" x2="874.5" y2="715" stroke="#333" stroke-width="1" shape-rendering="crispEdges"/>
<line x1="915.5" y1="711" x2="915.5" y2="715" stroke="#333" stroke-width="1" shape-rendering="crispEdges"/>
<line x1="956.5" y1="711" x2="956.5" y2="719" stroke="#333" stroke-width="1" shape-rendering="crispEdges"/>
<line x1="997.5" y1="711" x2="997.5" y2="715" stroke="#333" stroke-width="1" shape-rendering="crispEdges"/>
<line x1="1038.5" y1="711" x2="1038.5" y2="715" stroke="#333" stroke-width="1" shape-rendering="crispEdges"/>
<line x1="1080.5" y1="711" x2="1080.5" y2="719" stroke="#333" stroke-width="1" shape-rendering="crispEdges"/>
<text x="217.82" y="733.80" font-size="12.2" text-anchor="middle" fill="#444" textLength="34.61" lengthAdjust="spacingAndGlyphs" >03:00</text>
<text x="235.72" y="748.80" font-size="12.2" text-anchor="end" fill="#444" textLength="26.73" lengthAdjust="spacingAndGlyphs" >5.12</text>
<text x="235.72" y="763.80" font-size="12.2" text-anchor="end" fill="#444" textLength="34.38" lengthAdjust="spacingAndGlyphs" >41.50</text>
<text x="235.72" y="778.80" font-size="12.2" text-anchor="end" fill="#444" textLength="34.38" lengthAdjust="spacingAndGlyphs" >51.90</text>
<text x="340.95" y="733.80" font-size="12.2" text-anchor="middle" fill="#444" textLength="34.61" lengthAdjust="spacingAndGlyphs" >06:00</text>
<text x="358.85" y="748.80" font-size="12.2" text-anchor="end" fill="#444" textLength="26.73" lengthAdjust="spacingAndGlyphs" >5.16</text>
<text x="358.85" y="763.80" font-size="12.2" text-anchor="end" fill="#444" textLength="34.38" lengthAdjust="spacingAndGlyphs" >41.79</text>
<text x="358.85" y="778.80" font-size="12.2" text-anchor="end" fill="#444" textLength="34.38" lengthAdjust="spacingAndGlyphs" >52.22</text>
<text x="464.07" y="733.80" font-size="12.2" text-anchor="middle" fill="#444" textLength="34.61" lengthAdjust="spacingAndGlyphs" >09:00</text>
<text x="481.98" y="748.80" font-size="12.2" text-anchor="end" fill="#444" textLength="26.73" lengthAdjust="spacingAndGlyphs" >5.19</text>
<text x="481.98" y="763.80" font-size="12.2" text-anchor="end" fill="#444" textLength="34.38" lengthAdjust="spacingAndGlyphs" >42.07</text>
<text x="481.98" y="778.80" font-size="12.2" text-anchor="end" fill="#444" textLength="34.38" lengthAdjust="spacingAndGlyphs" >52.52</text>
<text x="587.20" y="733.80" font-size="12.2" text-anchor="middle" fill="#444" textLength="34.61" lengthAdjust="spacingAndGlyphs" >12:00</text>
<text x="605.10" y="748.80" font-size="12.2" text-anchor="end" fill="#444" textLength="26.73" lengthAdjust="spacingAndGlyphs" >5.23</text>
<text x="605.10" y="763.80" font-size="12.2" text-anchor="end" fill="#444" textLength="34.38" lengthAdjust="spacingAndGlyphs" >42.34</text>
<text x="605.10" y="778.80" font-size="12.2" text-anchor="end" fill="#444" textLength="34.38" lengthAdjust="spacingAndGlyphs" >52.81</text>
<text x="710.33" y="733.80" font-size="12.2" text-anchor="middle" fill="#444" textLength="34.61" lengthAdjust="spacingAndGlyphs" >15:00</text>
<text x="728.23" y="748.80" font-size="12.2" text-anchor="end" fill="#444" textLength="26.73" lengthAdjust="spacingAndGlyphs" >5.26</text>
<text x="728.23" y="763.80" font-size="12.2" text-anchor="end" fill="#444" textLength="34.38" lengthAdjust="spacingAndGlyphs" >42.61</text>
<text x="728.23" y="778.80" font-size="12.2" text-anchor="end" fill="#444" textLength="34.38" lengthAdjust="spacingAndGlyphs" >53.08</text>
<text x="833.45" y="733.80" font-size="12.2" text-anchor="middle" fill="#444" textLength="34.61" lengthAdjust="spacingAndGlyphs" >18:00</text>
<text x="851.35" y="748.80" font-size="12.2" text-anchor="end" fill="#444" textLength="26.73" lengthAdjust="spacingAndGlyphs" >5.30</text>
<text x="851.35" y="763.80" font-size="12.2" text-anchor="end" fill="#444" textLength="34.38" lengthAdjust="spacingAndGlyphs" >42.86</text>
<text x="851.35" y="778.80" font-size="12.2" text-anchor="end" fill="#444" textLength="34.38" lengthAdjust="spacingAndGlyphs" >53.35</text>
<text x="956.58" y="733.80" font-size="12.2" text-anchor="middle" fill="#444" textLength="34.61" lengthAdjust="spacingAndGlyphs" >21:00</text>
<text x="974.48" y="748.80" font-size="12.2" text-anchor="end" fill="#444" textLength="26.73" lengthAdjust="spacingAndGlyphs" >5.33</text>
<text x="974.48" y="763.80" font-size="12.2" text-anchor="end" fill="#444" textLength="34.38" lengthAdjust="spacingAndGlyphs" >43.11</text>
<text x="974.48" y="778.80" font-size="12.2" text-anchor="end" fill="#444" textLength="34.38" lengthAdjust="spacingAndGlyphs" >53.60</text>
<text x="1079.70" y="733.80" font-size="12.2" text-anchor="middle" fill="#444" textLength="34.61" lengthAdjust="spacingAndGlyphs" >00:00</text>
<text x="1097.60" y="748.80" font-size="12.2" text-anchor="end" fill="#444" textLength="26.73" lengthAdjust="spacingAndGlyphs" >5.36</text>
<text x="1097.60" y="763.80" font-size="12.2" text-anchor="end" fill="#444" textLength="34.38" lengthAdjust="spacingAndGlyphs" >43.35</text>
<text x="1097.60" y="778.80" font-size="12.2" text-anchor="end" fill="#444" textLength="34.38" lengthAdjust="spacingAndGlyphs" >53.85</text>
<text x="16.00" y="749.20" font-size="12.2" text-anchor="start" fill="#444" textLength="43.80" lengthAdjust="spacingAndGlyphs" >LT (hrs)</text>
<text x="46.00" y="763.75" font-size="12.2" text-anchor="start" fill="#444" textLength="13.80" lengthAdjust="spacingAndGlyphs" >Rs</text>
<text x="13.05" y="778.75" font-size="12.2" text-anchor="start" fill="#444" textLength="47.45" lengthAdjust="spacingAndGlyphs" >Dipole L</text>
<text x="1062.00" y="745.80" font-size="12.2" text-anchor="start" fill="#444" textLength="62.70" lengthAdjust="spacingAndGlyphs" >2016−054</text>
<rect x="215.5" y="802.5" width="151" height="147" fill="none" stroke="#333" stroke-width="1" shape-rendering="crispEdges"/>
<line x1="207" y1="813.5" x2="215" y2="813.5" stroke="#333" stroke-width="1" shape-rendering="crispEdges"/>
<line x1="207" y1="834.5" x2="215" y2="834.5" stroke="#333" stroke-width="1" shape-rendering="crispEdges"/>
<line x1="207" y1="855.5" x2="215" y2="855.5" stroke="#333" stroke-width="1" shape-rendering="crispEdges"/>
<line x1="207" y1="876.5" x2="215" y2="876.5" stroke="#333" stroke-width="1" shape-rendering="crispEdges"/>
<line x1="207" y1="897.5" x2="215" y2="897.5" stroke="#333" stroke-width="1" shape-rendering="crispEdges"/>
<line x1="207" y1="918.5" x2="215" y2="918.5" stroke="#333" stroke-width="1" shape-rendering="crispEdges"/>
<line x1="207" y1="939.5" x2="215" y2="939.5" stroke="#333" stroke-width="1" shape-rendering="crispEdges"/>
<line x1="211" y1="803.5" x2="215" y2="803.5" stroke="#333" stroke-width="1" shape-rendering="crispEdges"/>
<line x1="211" y1="824.5" x2="215" y2="824.5" stroke="#333" stroke-width="1" shape-rendering="crispEdges"/>
<line x1="211" y1="845.5" x2="215" y2="845.5" stroke="#333" stroke-width="1" shape-rendering="crispEdges"/>
<line x1="211" y1="866.5" x2="215" y2="866.5" stroke="#333" stroke-width="1" shape-rendering="crispEdges"/>
<line x1="211" y1="887.5" x2="215" y2="887.5" stroke="#333" stroke-width="1" shape-rendering="crispEdges"/>
<line x1="211" y1="908.5" x2="215" y2="908.5" stroke="#333" stroke-width="1" shape-rendering="crispEdges"/>
<line x1="211" y1="929.5" x2="215" y2="929.5" stroke="#333" stroke-width="1" shape-rendering="crispEdges"/>
<line x1="211" y1="950.5" x2="215" y2="950.5" stroke="#333" stroke-width="1" shape-rendering="crispEdges"/>
<line x1="237.5" y1="950" x2="237.5" y2="958" stroke="#333" stroke-width="1" shape-rendering="crispEdges"/>
<line x1="291.5" y1="950" x2="291.5" y2="958" stroke="#333" stroke-width="1" shape-rendering="crispEdges"/>
<line x1="345.5" y1="950" x2="345.5" y2="958" stroke="#333" stroke-width="1" shape-rendering="crispEdges"/>
<line x1="216.5" y1="950" x2="216.5" y2="954" stroke="#333" stroke-width="1" shape-rendering="crispEdges"/>
<line x1="226.5" y1="950" x2="226.5" y2="954" stroke="#333" stroke-width="1" shape-rendering="crispEdges"/>
<line x1="248.5" y1="950" x2="248.5" y2="954" stroke="#333" stroke-width="1" shape-rendering="crispEdges"/>
<line x1="259.5" y1="950" x2="259.5" y2="954" stroke="#333" stroke-width="1" shape-rendering="crispEdges"/>
<line x1="270.5" y1="950" x2="270.5" y2="954" stroke="#333" stroke-width="1" shape-rendering="crispEdges"/>
<line x1="280.5" y1="950" x2="280.5" y2="954" stroke="#333" stroke-width="1" shape-rendering="crispEdges"/>
<line x1="302.5" y1="950" x2="302.5" y2="954" stroke="#333" stroke-width="1" shape-rendering="crispEdges"/>
<line x1="313.5" y1="950" x2="313.5" y2="954" stroke="#333" stroke-width="1" shape-rendering="crispEdges"/>
<line x1="324.5" y1="950" x2="324.5" y2="954" stroke="#333" stroke-width="1" shape-rendering="crispEdges"/>
<line x1="334.5" y1="950" x2="334.5" y2="954" stroke="#333" stroke-width="1" shape-rendering="crispEdges"/>
<line x1="356.5" y1="950" x2="356.5" y2="954" stroke="#333" stroke-width="1" shape-rendering="crispEdges"/>
<line x1="367.5" y1="950" x2="367.5" y2="954" stroke="#333" stroke-width="1" shape-rendering="crispEdges"/>
<text x="202.00" y="817.80" font-size="12.2" text-anchor="end" fill="#444" textLength="23.42" lengthAdjust="spacingAndGlyphs" >−60.</text>
<text x="202.00" y="838.80" font-size="12.2" text-anchor="end" fill="#444" textLength="23.42" lengthAdjust="spacingAndGlyphs" >−40.</text>
<text x="202.00" y="859.80" font-size="12.2" text-anchor="end" fill="#444" textLength="23.42" lengthAdjust="spacingAndGlyphs" >−20.</text>
<text x="202.00" y="880.80" font-size="12.2" text-anchor="end" fill="#444" textLength="11.45" lengthAdjust="spacingAndGlyphs" >0.</text>
<text x="202.00" y="901.80" font-size="12.2" text-anchor="end" fill="#444" textLength="19.09" lengthAdjust="spacingAndGlyphs" >20.</text>
<text x="202.00" y="922.80" font-size="12.2" text-anchor="end" fill="#444" textLength="19.09" lengthAdjust="spacingAndGlyphs" >40.</text>
<text x="202.00" y="943.80" font-size="12.2" text-anchor="end" fill="#444" textLength="19.09" lengthAdjust="spacingAndGlyphs" >60.</text>
<text x="237.20" y="973.80" font-size="12.2" text-anchor="middle" fill="#444" textLength="19.09" lengthAdjust="spacingAndGlyphs" >50.</text>
<text x="291.20" y="973.80" font-size="12.2" text-anchor="middle" fill="#444" textLength="11.45" lengthAdjust="spacingAndGlyphs" >0.</text>
<text x="345.20" y="973.80" font-size="12.2" text-anchor="middle" fill="#444" textLength="23.42" lengthAdjust="spacingAndGlyphs" >−50.</text>
<text x="291.00" y="991.70" font-size="12.2" text-anchor="middle" fill="#444" textLength="38.50" lengthAdjust="spacingAndGlyphs" >KSM−X</text>
<text x="0" y="0" font-size="12.2" text-anchor="middle" fill="#444" textLength="36.50" lengthAdjust="spacingAndGlyphs" transform="translate(167.50,876.80) rotate(-90)" >KSM−Y</text>
<clipPath id="o1"><rect x="216" y="803" width="150" height="146"/></clipPath><g clip-path="url(#o1)">
<polyline fill="none" stroke="#0000ff" stroke-width="1.2" stroke-dasharray="2 1.2" points="305.2,796.4 302.5,798.4 299.8,800.4 297.3,802.4 294.8,804.4 292.4,806.4 290.0,808.4 287.8,810.4 285.6,812.4 283.5,814.4 281.4,816.4 279.5,818.4 277.6,820.4 275.8,822.4 274.0,824.4 272.3,826.4 270.8,828.4 269.2,830.4 267.8,832.4 266.4,834.4 265.1,836.4 263.8,838.4 262.7,840.4 261.6,842.4 260.5,844.4 259.6,846.4 258.7,848.4 257.9,850.4 257.1,852.4 256.4,854.4 255.8,856.4 255.2,858.4 254.7,860.4 254.3,862.4 254.0,864.4 253.6,866.4 253.4,868.4 253.2,870.4 253.1,872.4 253.0,874.4 253.0,876.4 253.0,878.4 253.1,880.4 253.2,882.4 253.4,884.4 253.6,886.4 254.0,888.4 254.3,890.4 254.7,892.4 255.2,894.4 255.8,896.4 256.4,898.4 257.1,900.4 257.9,902.4 258.7,904.4 259.6,906.4 260.5,908.4 261.6,910.4 262.7,912.4 263.8,914.4 265.1,916.4 266.4,918.4 267.8,920.4 269.2,922.4 270.8,924.4 272.3,926.4 274.0,928.4 275.8,930.4 277.6,932.4 279.5,934.4 281.4,936.4 283.5,938.4 285.6,940.4 287.8,942.4 290.0,944.4 292.4,946.4 294.8,948.4 297.3,950.4 299.8,952.4 302.5,954.4 305.2,956.4"/>
<polyline fill="none" stroke="#8b4513" stroke-width="1.2" stroke-dasharray="2 1.2" points="370.7,796.4 364.7,798.4 358.9,800.4 353.3,802.4 347.8,804.4 342.6,806.4 337.5,808.4 332.6,810.4 327.9,812.4 323.4,814.4 319.1,816.4 315.0,818.4 311.0,820.4 307.2,822.4 303.6,824.4 300.2,826.4 296.9,828.4 293.8,830.4 290.9,832.4 288.1,834.4 285.5,836.4 283.1,838.4 280.8,840.4 278.7,842.4 276.7,844.4 274.9,846.4 273.2,848.4 271.7,850.4 270.3,852.4 269.1,854.4 268.0,856.4 267.0,858.4 266.1,860.4 265.4,862.4 264.8,864.4 264.3,866.4 264.0,868.4 263.7,870.4 263.5,872.4 263.4,874.4 263.4,876.4 263.4,878.4 263.5,880.4 263.7,882.4 264.0,884.4 264.3,886.4 264.8,888.4 265.4,890.4 266.1,892.4 267.0,894.4 268.0,896.4 269.1,898.4 270.3,900.4 271.7,902.4 273.2,904.4 274.9,906.4 276.7,908.4 278.7,910.4 280.8,912.4 283.1,914.4 285.5,916.4 288.1,918.4 290.9,920.4 293.8,922.4 296.9,924.4 300.2,926.4 303.6,928.4 307.2,930.4 311.0,932.4 315.0,934.4 319.1,936.4 323.4,938.4 327.9,940.4 332.6,942.4 337.5,944.4 342.6,946.4 347.8,948.4 353.3,950.4 358.9,952.4 364.7,954.4 370.7,956.4"/>
</g>
<ellipse cx="291.7" cy="877.4" rx="19.5" ry="21.3" fill="none" stroke="#000" stroke-width="1.3"/>
<polyline fill="none" stroke="#000" stroke-width="1.3" points="287.6,828.9 293.0,830.5 298.0,834.0 302.0,839.0 305.0,846.0 307.0,852.0 307.6,857.2"/>
<circle cx="291.2" cy="876.4" r="1.3" fill="#000"/>
<circle cx="299.2" cy="835.2" r="3.2" fill="#2020c0"/>
<line x1="296.2" y1="832.2" x2="304.2" y2="840.2" stroke="#ff2020" stroke-width="1.2" />
<line x1="296.2" y1="840.2" x2="304.2" y2="832.2" stroke="#ff2020" stroke-width="1.2" />
<circle cx="272.3" cy="871.5" r="2.6" fill="#ff0000"/>
<rect x="509.5" y="802.5" width="151" height="147" fill="none" stroke="#333" stroke-width="1" shape-rendering="crispEdges"/>
<line x1="501" y1="950.5" x2="509" y2="950.5" stroke="#333" stroke-width="1" shape-rendering="crispEdges"/>
<line x1="501" y1="932.5" x2="509" y2="932.5" stroke="#333" stroke-width="1" shape-rendering="crispEdges"/>
<line x1="501" y1="913.5" x2="509" y2="913.5" stroke="#333" stroke-width="1" shape-rendering="crispEdges"/>
<line x1="501" y1="895.5" x2="509" y2="895.5" stroke="#333" stroke-width="1" shape-rendering="crispEdges"/>
<line x1="501" y1="876.5" x2="509" y2="876.5" stroke="#333" stroke-width="1" shape-rendering="crispEdges"/>
<line x1="501" y1="858.5" x2="509" y2="858.5" stroke="#333" stroke-width="1" shape-rendering="crispEdges"/>
<line x1="501" y1="840.5" x2="509" y2="840.5" stroke="#333" stroke-width="1" shape-rendering="crispEdges"/>
<line x1="501" y1="821.5" x2="509" y2="821.5" stroke="#333" stroke-width="1" shape-rendering="crispEdges"/>
<line x1="501" y1="803.5" x2="509" y2="803.5" stroke="#333" stroke-width="1" shape-rendering="crispEdges"/>
<line x1="505" y1="948.5" x2="509" y2="948.5" stroke="#333" stroke-width="1" shape-rendering="crispEdges"/>
<line x1="505" y1="946.5" x2="509" y2="946.5" stroke="#333" stroke-width="1" shape-rendering="crispEdges"/>
<line x1="505" y1="944.5" x2="509" y2="944.5" stroke="#333" stroke-width="1" shape-rendering="crispEdges"/>
<line x1="505" y1="943.5" x2="509" y2="943.5" stroke="#333" stroke-width="1" shape-rendering="crispEdges"/>
<line x1="505" y1="941.5" x2="509" y2="941.5" stroke="#333" stroke-width="1" shape-rendering="crispEdges"/>
<line x1="505" y1="939.5" x2="509" y2="939.5" stroke="#333" stroke-width="1" shape-rendering="crispEdges"/>
<line x1="505" y1="937.5" x2="509" y2="937.5" stroke="#333" stroke-width="1" shape-rendering="crispEdges"/>
<line x1="505" y1="935.5" x2="509" y2="935.5" stroke="#333" stroke-width="1" shape-rendering="crispEdges"/>
<line x1="505" y1="933.5" x2="509" y2="933.5" stroke="#333" stroke-width="1" shape-rendering="crispEdges"/>
<line x1="505" y1="930.5" x2="509" y2="930.5" stroke="#333" stroke-width="1" shape-rendering="crispEdges"/>
<line x1="505" y1="928.5" x2="509" y2="928.5" stroke="#333" stroke-width="1" shape-rendering="crispEdges"/>
<line x1="505" y1="926.5" x2="509" y2="926.5" stroke="#333" stroke-width="1" shape-rendering="crispEdges"/>
<line x1="505" y1="924.5" x2="509" y2="924.5" stroke="#333" stroke-width="1" shape-rendering="crispEdges"/>
<line x1="505" y1="922.5" x2="509" y2="922.5" stroke="#333" stroke-width="1" shape-rendering="crispEdges"/>
<line x1="505" y1="921.5" x2="509" y2="921.5" stroke="#333" stroke-width="1" shape-rendering="crispEdges"/>
<line x1="505" y1="919.5" x2="509" y2="919.5" stroke="#333" stroke-width="1" shape-rendering="crispEdges"/>
<line x1="505" y1="917.5" x2="509" y2="917.5" stroke="#333" stroke-width="1" shape-rendering="crispEdges"/>
<line x1="505" y1="915.5" x2="509" y2="915.5" stroke="#333" stroke-width="1" shape-rendering="crispEdges"/>
<line x1="505" y1="911.5" x2="509" y2="911.5" stroke="#333" stroke-width="1" shape-rendering="crispEdges"/>
<line x1="505" y1="910.5" x2="509" y2="910.5" stroke="#333" stroke-width="1" shape-rendering="crispEdges"/>
<line x1="505" y1="908.5" x2="509" y2="908.5" stroke="#333" stroke-width="1" shape-rendering="crispEdges"/>
<line x1="505" y1="906.5" x2="509" y2="906.5" stroke="#333" stroke-width="1" shape-rendering="crispEdges"/>
<line x1="505" y1="904.5" x2="509" y2="904.5" stroke="#333" stroke-width="1" shape-rendering="crispEdges"/>
<line x1="505" y1="902.5" x2="509" y2="902.5" stroke="#333" stroke-width="1" shape-rendering="crispEdges"/>
<line x1="505" y1="900.5" x2="509" y2="900.5" stroke="#333" stroke-width="1" shape-rendering="crispEdges"/>
<line x1="505" y1="898.5" x2="509" y2="898.5" stroke="#333" stroke-width="1" shape-rendering="crispEdges"/>
<line x1="505" y1="897.5" x2="509" y2="897.5" stroke="#333" stroke-width="1" shape-rendering="crispEdges"/>
<line x1="505" y1="893.5" x2="509" y2="893.5" stroke="#333" stroke-width="1" shape-rendering="crispEdges"/>
<line x1="505" y1="891.5" x2="509" y2="891.5" stroke="#333" stroke-width="1" shape-rendering="crispEdges"/>
<line x1="505" y1="889.5" x2="509" y2="889.5" stroke="#333" stroke-width="1" shape-rendering="crispEdges"/>
<line x1="505" y1="887.5" x2="509" y2="887.5" stroke="#333" stroke-width="1" shape-rendering="crispEdges"/>
<line x1="505" y1="886.5" x2="509" y2="886.5" stroke="#333" stroke-width="1" shape-rendering="crispEdges"/>
<line x1="505" y1="884.5" x2="509" y2="884.5" stroke="#333" stroke-width="1" shape-rendering="crispEdges"/>
<line x1="505" y1="882.5" x2="509" y2="882.5" stroke="#333" stroke-width="1" shape-rendering="crispEdges"/>
<line x1="505" y1="880.5" x2="509" y2="880.5" stroke="#333" stroke-width="1" shape-rendering="crispEdges"/>
<line x1="505" y1="878.5" x2="509" y2="878.5" stroke="#333" stroke-width="1" shape-rendering="crispEdges"/>
<line x1="505" y1="875.5" x2="509" y2="875.5" stroke="#333" stroke-width="1" shape-rendering="crispEdges"/>
<line x1="505" y1="873.5" x2="509" y2="873.5" stroke="#333" stroke-width="1" shape-rendering="crispEdges"/>
<line x1="505" y1="871.5" x2="509" y2="871.5" stroke="#333" stroke-width="1" shape-rendering="crispEdges"/>
<line x1="505" y1="869.5" x2="509" y2="869.5" stroke="#333" stroke-width="1" shape-rendering="crispEdges"/>
<line x1="505" y1="867.5" x2="509" y2="867.5" stroke="#333" stroke-width="1" shape-rendering="crispEdges"/>
<line x1="505" y1="865.5" x2="509" y2="865.5" stroke="#333" stroke-width="1" shape-rendering="crispEdges"/>
<line x1="505" y1="864.5" x2="509" y2="864.5" stroke="#333" stroke-width="1" shape-rendering="crispEdges"/>
<line x1="505" y1="862.5" x2="509" y2="862.5" stroke="#333" stroke-width="1" shape-rendering="crispEdges"/>
<line x1="505" y1="860.5" x2="509" y2="860.5" stroke="#333" stroke-width="1" shape-rendering="crispEdges"/>
<line x1="505" y1="856.5" x2="509" y2="856.5" stroke="#333" stroke-width="1" shape-rendering="crispEdges"/>
<line x1="505" y1="854.5" x2="509" y2="854.5" stroke="#333" stroke-width="1" shape-rendering="crispEdges"/>
<line x1="505" y1="852.5" x2="509" y2="852.5" stroke="#333" stroke-width="1" shape-rendering="crispEdges"/>
<line x1="505" y1="851.5" x2="509" y2="851.5" stroke="#333" stroke-width="1" shape-rendering="crispEdges"/>
<line x1="505" y1="849.5" x2="509" y2="849.5" stroke="#333" stroke-width="1" shape-rendering="crispEdges"/>
<line x1="505" y1="847.5" x2="509" y2="847.5" stroke="#333" stroke-width="1" shape-rendering="crispEdges"/>
<line x1="505" y1="845.5" x2="509" y2="845.5" stroke="#333" stroke-width="1" shape-rendering="crispEdges"/>
<line x1="505" y1="843.5" x2="509" y2="843.5" stroke="#333" stroke-width="1" shape-rendering="crispEdges"/>
<line x1="505" y1="841.5" x2="509" y2="841.5" stroke="#333" stroke-width="1" shape-rendering="crispEdges"/>
<line x1="505" y1="838.5" x2="509" y2="838.5" stroke="#333" stroke-width="1" shape-rendering="crispEdges"/>
<line x1="505" y1="836.5" x2="509" y2="836.5" stroke="#333" stroke-width="1" shape-rendering="crispEdges"/>
<line x1="505" y1="834.5" x2="509" y2="834.5" stroke="#333" stroke-width="1" shape-rendering="crispEdges"/>
<line x1="505" y1="832.5" x2="509" y2="832.5" stroke="#333" stroke-width="1" shape-rendering="crispEdges"/>
<line x1="505" y1="830.5" x2="509" y2="830.5" stroke="#333" stroke-width="1" shape-rendering="crispEdges"/>
<line x1="505" y1="829.5" x2="509" y2="829.5" stroke="#333" stroke-width="1" shape-rendering="crispEdges"/>
<line x1="505" y1="827.5" x2="509" y2="827.5" stroke="#333" stroke-width="1" shape-rendering="crispEdges"/>
<line x1="505" y1="825.5" x2="509" y2="825.5" stroke="#333" stroke-width="1" shape-rendering="crispEdges"/>
<line x1="505" y1="823.5" x2="509" y2="823.5" stroke="#333" stroke-width="1" shape-rendering="crispEdges"/>
<line x1="505" y1="819.5" x2="509" y2="819.5" stroke="#333" stroke-width="1" shape-rendering="crispEdges"/>
<line x1="505" y1="818.5" x2="509" y2="818.5" stroke="#333" stroke-width="1" shape-rendering="crispEdges"/>
<line x1="505" y1="816.5" x2="509" y2="816.5" stroke="#333" stroke-width="1" shape-rendering="crispEdges"/>
<line x1="505" y1="814.5" x2="509" y2="814.5" stroke="#333" stroke-width="1" shape-rendering="crispEdges"/>
<line x1="505" y1="812.5" x2="509" y2="812.5" stroke="#333" stroke-width="1" shape-rendering="crispEdges"/>
<line x1="505" y1="810.5" x2="509" y2="810.5" stroke="#333" stroke-width="1" shape-rendering="crispEdges"/>
<line x1="505" y1="808.5" x2="509" y2="808.5" stroke="#333" stroke-width="1" shape-rendering="crispEdges"/>
<line x1="505" y1="806.5" x2="509" y2="806.5" stroke="#333" stroke-width="1" shape-rendering="crispEdges"/>
<line x1="505" y1="805.5" x2="509" y2="805.5" stroke="#333" stroke-width="1" shape-rendering="crispEdges"/>
<line x1="510.5" y1="950" x2="510.5" y2="958" stroke="#333" stroke-width="1" shape-rendering="crispEdges"/>
<line x1="548.5" y1="950" x2="548.5" y2="958" stroke="#333" stroke-width="1" shape-rendering="crispEdges"/>
<line x1="585.5" y1="950" x2="585.5" y2="958" stroke="#333" stroke-width="1" shape-rendering="crispEdges"/>
<line x1="622.5" y1="950" x2="622.5" y2="958" stroke="#333" stroke-width="1" shape-rendering="crispEdges"/>
<line x1="660.5" y1="950" x2="660.5" y2="958" stroke="#333" stroke-width="1" shape-rendering="crispEdges"/>
<line x1="529.5" y1="950" x2="529.5" y2="954" stroke="#333" stroke-width="1" shape-rendering="crispEdges"/>
<line x1="566.5" y1="950" x2="566.5" y2="954" stroke="#333" stroke-width="1" shape-rendering="crispEdges"/>
<line x1="604.5" y1="950" x2="604.5" y2="954" stroke="#333" stroke-width="1" shape-rendering="crispEdges"/>
<line x1="641.5" y1="950" x2="641.5" y2="954" stroke="#333" stroke-width="1" shape-rendering="crispEdges"/>
<text x="495.50" y="954.40" font-size="12.2" text-anchor="end" fill="#444" textLength="23.42" lengthAdjust="spacingAndGlyphs" >−40.</text>
<text x="495.50" y="936.00" font-size="12.2" text-anchor="end" fill="#444" textLength="23.42" lengthAdjust="spacingAndGlyphs" >−30.</text>
<text x="495.50" y="917.60" font-size="12.2" text-anchor="end" fill="#444" textLength="23.42" lengthAdjust="spacingAndGlyphs" >−20.</text>
<text x="495.50" y="899.20" font-size="12.2" text-anchor="end" fill="#444" textLength="23.42" lengthAdjust="spacingAndGlyphs" >−10.</text>
<text x="495.50" y="880.80" font-size="12.2" text-anchor="end" fill="#444" textLength="11.45" lengthAdjust="spacingAndGlyphs" >0.</text>
<text x="495.50" y="862.40" font-size="12.2" text-anchor="end" fill="#444" textLength="19.09" lengthAdjust="spacingAndGlyphs" >10.</text>
<text x="495.50" y="844.00" font-size="12.2" text-anchor="end" fill="#444" textLength="19.09" lengthAdjust="spacingAndGlyphs" >20.</text>
<text x="495.50" y="825.60" font-size="12.2" text-anchor="end" fill="#444" textLength="19.09" lengthAdjust="spacingAndGlyphs" >30.</text>
<text x="495.50" y="807.20" font-size="12.2" text-anchor="end" fill="#444" textLength="19.09" lengthAdjust="spacingAndGlyphs" >40.</text>
<text x="510.20" y="973.80" font-size="12.2" text-anchor="middle" fill="#444" textLength="19.09" lengthAdjust="spacingAndGlyphs" >40.</text>
<text x="547.60" y="973.80" font-size="12.2" text-anchor="middle" fill="#444" textLength="19.09" lengthAdjust="spacingAndGlyphs" >20.</text>
<text x="585.00" y="973.80" font-size="12.2" text-anchor="middle" fill="#444" textLength="11.45" lengthAdjust="spacingAndGlyphs" >0.</text>
<text x="622.40" y="973.80" font-size="12.2" text-anchor="middle" fill="#444" textLength="23.42" lengthAdjust="spacingAndGlyphs" >−20.</text>
<text x="659.80" y="973.80" font-size="12.2" text-anchor="middle" fill="#444" textLength="23.42" lengthAdjust="spacingAndGlyphs" >−40.</text>
<text x="585.00" y="991.70" font-size="12.2" text-anchor="middle" fill="#444" textLength="38.50" lengthAdjust="spacingAndGlyphs" >KSM−X</text>
<text x="0" y="0" font-size="12.2" text-anchor="middle" fill="#444" textLength="36.50" lengthAdjust="spacingAndGlyphs" transform="translate(461.50,876.80) rotate(-90)" >KSM−Z</text>
<clipPath id="o2"><rect x="510" y="803" width="150" height="146"/></clipPath><g clip-path="url(#o2)">
<polyline fill="none" stroke="#0000ff" stroke-width="1.2" stroke-dasharray="2 1.2" points="545.2,796.4 543.9,798.4 542.6,800.4 541.4,802.4 540.2,804.4 539.1,806.4 538.0,808.4 536.9,810.4 535.8,812.4 534.8,814.4 533.8,816.4 532.9,818.4 532.0,820.4 531.1,822.4 530.2,824.4 529.4,826.4 528.6,828.4 527.8,830.4 527.1,832.4 526.4,834.4 525.8,836.4 525.1,838.4 524.5,840.4 524.0,842.4 523.4,844.4 522.9,846.4 522.5,848.4 522.0,850.4 521.6,852.4 521.3,854.4 520.9,856.4 520.6,858.4 520.3,860.4 520.1,862.4 519.9,864.4 519.7,866.4 519.6,868.4 519.4,870.4 519.4,872.4 519.3,874.4 519.3,876.4 519.3,878.4 519.4,880.4 519.4,882.4 519.6,884.4 519.7,886.4 519.9,888.4 520.1,890.4 520.3,892.4 520.6,894.4 520.9,896.4 521.3,898.4 521.6,900.4 522.0,902.4 522.5,904.4 522.9,906.4 523.4,908.4 524.0,910.4 524.5,912.4 525.1,914.4 525.8,916.4 526.4,918.4 527.1,920.4 527.8,922.4 528.6,924.4 529.4,926.4 530.2,928.4 531.1,930.4 532.0,932.4 532.9,934.4 533.8,936.4 534.8,938.4 535.8,940.4 536.9,942.4 538.0,944.4 539.1,946.4 540.2,948.4 541.4,950.4 542.6,952.4 543.9,954.4 545.2,956.4"/>
<polyline fill="none" stroke="#8b4513" stroke-width="1.2" stroke-dasharray="2 1.2" points="583.8,796.4 581.5,798.4 579.4,800.4 577.2,802.4 575.1,804.4 573.1,806.4 571.1,808.4 569.2,810.4 567.3,812.4 565.4,814.4 563.7,816.4 561.9,818.4 560.3,820.4 558.6,822.4 557.1,824.4 555.6,826.4 554.1,828.4 552.7,830.4 551.3,832.4 550.0,834.4 548.8,836.4 547.6,838.4 546.5,840.4 545.4,842.4 544.4,844.4 543.4,846.4 542.5,848.4 541.6,850.4 540.9,852.4 540.1,854.4 539.4,856.4 538.8,858.4 538.2,860.4 537.7,862.4 537.3,864.4 536.9,866.4 536.6,868.4 536.3,870.4 536.2,872.4 536.0,874.4 536.0,876.4 536.0,878.4 536.2,880.4 536.3,882.4 536.6,884.4 536.9,886.4 537.3,888.4 537.7,890.4 538.2,892.4 538.8,894.4 539.4,896.4 540.1,898.4 540.9,900.4 541.6,902.4 542.5,904.4 543.4,906.4 544.4,908.4 545.4,910.4 546.5,912.4 547.6,914.4 548.8,916.4 550.0,918.4 551.3,920.4 552.7,922.4 554.1,924.4 555.6,926.4 557.1,928.4 558.6,930.4 560.3,932.4 561.9,934.4 563.7,936.4 565.4,938.4 567.3,940.4 569.2,942.4 571.1,944.4 573.1,946.4 575.1,948.4 577.2,950.4 579.4,952.4 581.5,954.4 583.8,956.4"/>
</g>
<polyline fill="none" stroke="#000" stroke-width="1.3" points="552.3,892.5 620.1,860.4"/>
<rect x="583.5" y="874.5" width="3.5" height="3.5" fill="#fff" stroke="#000" stroke-width="1"/>
<polyline fill="none" stroke="#000" stroke-width="1.3" points="579.2,851.3 585.0,850.6 598.0,850.3 606.0,852.5 611.0,855.5 613.8,859.3"/>
<circle cx="597.4" cy="850.5" r="3.2" fill="#2020e0"/>
<line x1="597.2" y1="846.5" x2="605.2" y2="854.5" stroke="#ff2020" stroke-width="1.2" />
<line x1="597.2" y1="854.5" x2="605.2" y2="846.5" stroke="#ff2020" stroke-width="1.2" />
<circle cx="552.3" cy="892.5" r="2.6" fill="#ff0000"/>
<rect x="803.5" y="802.5" width="151" height="147" fill="none" stroke="#333" stroke-width="1" shape-rendering="crispEdges"/>
<line x1="795" y1="939.5" x2="803" y2="939.5" stroke="#333" stroke-width="1" shape-rendering="crispEdges"/>
<line x1="795" y1="918.5" x2="803" y2="918.5" stroke="#333" stroke-width="1" shape-rendering="crispEdges"/>
<line x1="795" y1="897.5" x2="803" y2="897.5" stroke="#333" stroke-width="1" shape-rendering="crispEdges"/>
<line x1="795" y1="876.5" x2="803" y2="876.5" stroke="#333" stroke-width="1" shape-rendering="crispEdges"/>
<line x1="795" y1="855.5" x2="803" y2="855.5" stroke="#333" stroke-width="1" shape-rendering="crispEdges"/>
<line x1="795" y1="834.5" x2="803" y2="834.5" stroke="#333" stroke-width="1" shape-rendering="crispEdges"/>
<line x1="795" y1="813.5" x2="803" y2="813.5" stroke="#333" stroke-width="1" shape-rendering="crispEdges"/>
<line x1="799" y1="950.5" x2="803" y2="950.5" stroke="#333" stroke-width="1" shape-rendering="crispEdges"/>
<line x1="799" y1="929.5" x2="803" y2="929.5" stroke="#333" stroke-width="1" shape-rendering="crispEdges"/>
<line x1="799" y1="908.5" x2="803" y2="908.5" stroke="#333" stroke-width="1" shape-rendering="crispEdges"/>
<line x1="799" y1="887.5" x2="803" y2="887.5" stroke="#333" stroke-width="1" shape-rendering="crispEdges"/>
<line x1="799" y1="866.5" x2="803" y2="866.5" stroke="#333" stroke-width="1" shape-rendering="crispEdges"/>
<line x1="799" y1="845.5" x2="803" y2="845.5" stroke="#333" stroke-width="1" shape-rendering="crispEdges"/>
<line x1="799" y1="824.5" x2="803" y2="824.5" stroke="#333" stroke-width="1" shape-rendering="crispEdges"/>
<line x1="799" y1="803.5" x2="803" y2="803.5" stroke="#333" stroke-width="1" shape-rendering="crispEdges"/>
<line x1="826.5" y1="950" x2="826.5" y2="958" stroke="#333" stroke-width="1" shape-rendering="crispEdges"/>
<line x1="879.5" y1="950" x2="879.5" y2="958" stroke="#333" stroke-width="1" shape-rendering="crispEdges"/>
<line x1="933.5" y1="950" x2="933.5" y2="958" stroke="#333" stroke-width="1" shape-rendering="crispEdges"/>
<line x1="804.5" y1="950" x2="804.5" y2="954" stroke="#333" stroke-width="1" shape-rendering="crispEdges"/>
<line x1="815.5" y1="950" x2="815.5" y2="954" stroke="#333" stroke-width="1" shape-rendering="crispEdges"/>
<line x1="836.5" y1="950" x2="836.5" y2="954" stroke="#333" stroke-width="1" shape-rendering="crispEdges"/>
<line x1="847.5" y1="950" x2="847.5" y2="954" stroke="#333" stroke-width="1" shape-rendering="crispEdges"/>
<line x1="858.5" y1="950" x2="858.5" y2="954" stroke="#333" stroke-width="1" shape-rendering="crispEdges"/>
<line x1="868.5" y1="950" x2="868.5" y2="954" stroke="#333" stroke-width="1" shape-rendering="crispEdges"/>
<line x1="890.5" y1="950" x2="890.5" y2="954" stroke="#333" stroke-width="1" shape-rendering="crispEdges"/>
<line x1="901.5" y1="950" x2="901.5" y2="954" stroke="#333" stroke-width="1" shape-rendering="crispEdges"/>
<line x1="911.5" y1="950" x2="911.5" y2="954" stroke="#333" stroke-width="1" shape-rendering="crispEdges"/>
<line x1="922.5" y1="950" x2="922.5" y2="954" stroke="#333" stroke-width="1" shape-rendering="crispEdges"/>
<line x1="943.5" y1="950" x2="943.5" y2="954" stroke="#333" stroke-width="1" shape-rendering="crispEdges"/>
<line x1="954.5" y1="950" x2="954.5" y2="954" stroke="#333" stroke-width="1" shape-rendering="crispEdges"/>
<text x="794.00" y="943.80" font-size="12.2" text-anchor="end" fill="#444" textLength="23.42" lengthAdjust="spacingAndGlyphs" >−60.</text>
<text x="794.00" y="922.80" font-size="12.2" text-anchor="end" fill="#444" textLength="23.42" lengthAdjust="spacingAndGlyphs" >−40.</text>
<text x="794.00" y="901.80" font-size="12.2" text-anchor="end" fill="#444" textLength="23.42" lengthAdjust="spacingAndGlyphs" >−20.</text>
<text x="794.00" y="880.80" font-size="12.2" text-anchor="end" fill="#444" textLength="11.45" lengthAdjust="spacingAndGlyphs" >0.</text>
<text x="794.00" y="859.80" font-size="12.2" text-anchor="end" fill="#444" textLength="19.09" lengthAdjust="spacingAndGlyphs" >20.</text>
<text x="794.00" y="838.80" font-size="12.2" text-anchor="end" fill="#444" textLength="19.09" lengthAdjust="spacingAndGlyphs" >40.</text>
<text x="794.00" y="817.80" font-size="12.2" text-anchor="end" fill="#444" textLength="19.09" lengthAdjust="spacingAndGlyphs" >60.</text>
<text x="825.70" y="973.80" font-size="12.2" text-anchor="middle" fill="#444" textLength="23.42" lengthAdjust="spacingAndGlyphs" >−50.</text>
<text x="879.20" y="973.80" font-size="12.2" text-anchor="middle" fill="#444" textLength="11.45" lengthAdjust="spacingAndGlyphs" >0.</text>
<text x="932.70" y="973.80" font-size="12.2" text-anchor="middle" fill="#444" textLength="19.09" lengthAdjust="spacingAndGlyphs" >50.</text>
<text x="879.00" y="991.70" font-size="12.2" text-anchor="middle" fill="#444" textLength="38.50" lengthAdjust="spacingAndGlyphs" >KSM−Y</text>
<text x="0" y="0" font-size="12.2" text-anchor="middle" fill="#444" textLength="36.50" lengthAdjust="spacingAndGlyphs" transform="translate(755.70,876.80) rotate(-90)" >KSM−Z</text>
<clipPath id="o3"><rect x="804" y="803" width="150" height="146"/></clipPath><g clip-path="url(#o3)">
<circle cx="879.2" cy="877.3" r="75.8" fill="none" stroke="#0000ff" stroke-width="1.2" stroke-dasharray="2 1.2"/>
<circle cx="879.2" cy="876.4" r="51.3" fill="none" stroke="#8b4513" stroke-width="1.2" stroke-dasharray="2 1.2"/>
</g>
<ellipse cx="879.8" cy="876.8" rx="21.8" ry="9.5" fill="none" stroke="#000" stroke-width="1.3"/>
<polyline fill="none" stroke="#000" stroke-width="1.3" points="831.3,861.4 845.0,863.5 858.7,867.3"/>
<circle cx="879.2" cy="876.4" r="1.3" fill="#000"/>
<circle cx="836.6" cy="861.4" r="3.2" fill="#2020c0"/>
<line x1="834.3" y1="857.4" x2="842.3" y2="865.4" stroke="#ff2020" stroke-width="1.2" />
<line x1="834.3" y1="865.4" x2="842.3" y2="857.4" stroke="#ff2020" stroke-width="1.2" />
<circle cx="874" cy="885.6" r="2.6" fill="#ff0000"/>
</svg></body></html>
